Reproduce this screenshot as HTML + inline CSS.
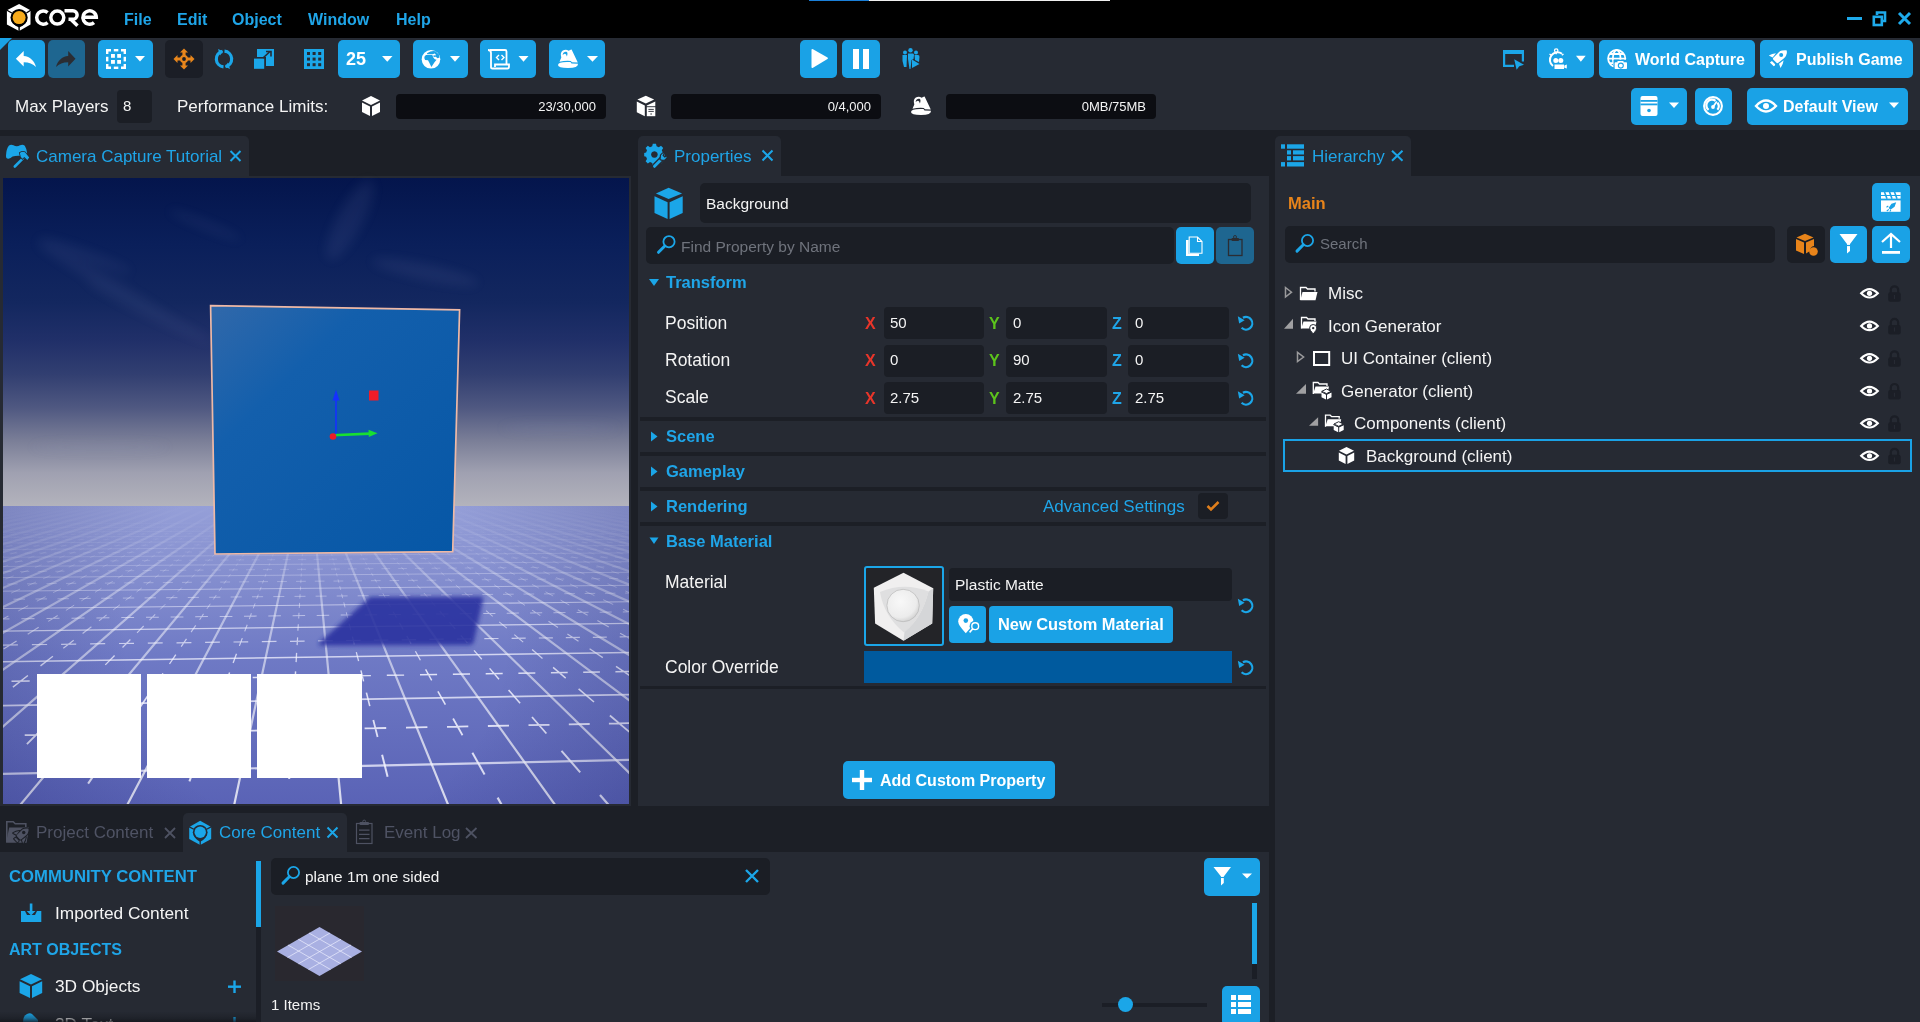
<!DOCTYPE html>
<html><head><meta charset="utf-8">
<style>
*{margin:0;padding:0;box-sizing:border-box}
html,body{width:1920px;height:1022px;overflow:hidden}
body{background:#1c1f26;font-family:"Liberation Sans",sans-serif;position:relative;color:#f4f4f4}
.a{position:absolute}
.t{position:absolute;white-space:nowrap;line-height:1;will-change:transform}
.b{position:absolute;background:#1aa2e6;border-radius:4px}
.in{position:absolute;background:#1b1e25;border-radius:4px}
.bl{color:#1fa5e8}
.bd{font-weight:bold}
svg{position:absolute;overflow:visible}
</style></head><body>

<!-- ============ TITLE BAR ============ -->
<div class="a" style="left:0;top:0;width:1920px;height:38px;background:#000"></div>
<div class="a" style="left:809px;top:0;width:60px;height:1px;background:#1a7fd8"></div>
<div class="a" style="left:869px;top:0;width:241px;height:1px;background:#f0f0f0"></div>

<!-- logo -->
<svg style="left:0;top:0" width="100" height="38">
  <path d="M19.1 4 L30.5 10.3 V24.6 L19.1 31 L6.9 24.6 V10.3 Z" fill="#fff"/>
  <circle cx="19.1" cy="17.6" r="8.6" fill="#000"/>
  <path d="M11.2 20.5 Q13.5 25 19.1 27.5 Q24.7 25 27 20.5 Z" fill="#000"/>
  <path d="M19.1 26 V31.5 M6.5 10 L11.8 13 M31 10 L26.4 13" stroke="#000" stroke-width="1.4"/>
  <circle cx="19.1" cy="17.6" r="6.5" fill="#f7ab1b"/>
  <g fill="none" stroke="#fff" stroke-width="3.5">
   <path d="M47.6 12.6 A6.6 6.6 0 1 0 47.6 22.6"/>
   <circle cx="57.3" cy="17.6" r="6.5"/>
   <path d="M64.5 10.7 H72.8 A4.3 4.3 0 0 1 72.8 19.3 H68.5 M70.5 19 L77.5 25.8"/>
   <path d="M82.9 17.3 H96.3 A6.7 6.7 0 1 0 94 22.6"/>
  </g>
</svg>

<div class="t bd bl" style="left:124px;top:12px;font-size:16px">File</div>
<div class="t bd bl" style="left:177px;top:12px;font-size:16px">Edit</div>
<div class="t bd bl" style="left:232px;top:12px;font-size:16px">Object</div>
<div class="t bd bl" style="left:308px;top:12px;font-size:16px">Window</div>
<div class="t bd bl" style="left:396px;top:12px;font-size:16px">Help</div>

<!-- window controls -->
<svg style="left:1840px;top:6px" width="80" height="26">
  <rect x="7" y="11" width="15" height="3" fill="#1eaaeb"/>
  <path d="M37 9 V6.5 H45 V15 H42" fill="none" stroke="#1eaaeb" stroke-width="2.6"/>
  <rect x="33.8" y="10.8" width="8" height="8.2" fill="none" stroke="#1eaaeb" stroke-width="2.6"/>
  <path d="M59 7 L70 18 M70 7 L59 18" stroke="#1eaaeb" stroke-width="3"/>
</svg>

<!-- ============ TOOLBAR ============ -->
<div class="a" style="left:0;top:38px;width:1920px;height:92px;background:#262a33"></div>
<div class="a" style="left:0;top:38px;width:0;height:0;border-top:12px solid #1aa2e6;border-right:12px solid transparent"></div>

<!-- undo / redo -->
<div class="b" style="left:8px;top:40px;width:37px;height:38px;border-radius:5px"></div>
<div class="b" style="left:48px;top:40px;width:37px;height:38px;border-radius:5px;background:#1e6690"></div>
<svg style="left:0;top:0" width="100" height="80">
  <path d="M15.9 58.8 L23.7 51 L23.7 56 C30 56.5 34.5 61 36 67 C33 64 29 62.2 23.7 62.2 L23.7 66.6 Z" fill="#fff"/>
  <path d="M75.5 58.8 L68.2 51 L68.2 56 C62 56.5 57.5 61 56 67 C59 64 63 62.2 68.2 62.2 L68.2 66.6 Z" fill="#2b2d33"/>
</svg>
<!-- select -->
<div class="b" style="left:98px;top:40px;width:55px;height:38px;border-radius:5px"></div>
<svg style="left:0;top:0" width="160" height="80" fill="#fff">
  <path d="M106 49 H111 V51.4 H108.4 V54 H106 Z M121 49 H126 V54 H123.6 V51.4 H121 Z M106 64 H108.4 V66.6 H111 V69 H106 Z M126 64 V69 H121 V66.6 H123.6 V64 Z"/>
  <rect x="113.8" y="49" width="4.5" height="2.4"/><rect x="113.8" y="66.6" width="4.5" height="2.4"/>
  <rect x="106" y="56.8" width="2.4" height="4.6"/><rect x="123.6" y="56.8" width="2.4" height="4.6"/>
  <rect x="111" y="54" width="3.9" height="3.8"/><rect x="117.2" y="54" width="3.8" height="3.8"/>
  <rect x="111" y="60" width="3.9" height="3.8"/><rect x="117.2" y="60" width="3.8" height="3.8"/>
  <path d="M135 56 H145 L140 61.5 Z"/>
</svg>
<!-- move -->
<div class="a" style="left:165px;top:40px;width:38px;height:38px;border-radius:5px;background:#1b1e26"></div>
<svg style="left:184px;top:59px" width="1" height="1">
  <path d="M0,-10.5 L4,-6.5 L1.6,-6.5 L1.6,-1.6 L6.5,-1.6 L6.5,-4 L10.5,0 L6.5,4 L6.5,1.6 L1.6,1.6 L1.6,6.5 L4,6.5 L0,10.5 L-4,6.5 L-1.6,6.5 L-1.6,1.6 L-6.5,1.6 L-6.5,4 L-10.5,0 L-6.5,-4 L-6.5,-1.6 L-1.6,-1.6 L-1.6,-6.5 L-4,-6.5 Z" fill="#e8861c"/>
  <circle r="4" fill="#e8861c"/><circle r="1.9" fill="#1b1e26"/>
</svg>
<!-- rotate -->
<svg style="left:224px;top:59px" width="1" height="1" fill="none" stroke="#1ba6e8" stroke-width="3.2">
  <path d="M-1.5,-7.6 A7.8,7.8 0 0 0 -0.5,7.8"/>
  <path d="M1.5,7.6 A7.8,7.8 0 0 0 0.5,-7.8"/>
  <path d="M-6,-10 L-1,-7.8 L-4,-3.5 Z" fill="#1ba6e8" stroke="none"/>
  <path d="M6,10 L1,7.8 L4,3.5 Z" fill="#1ba6e8" stroke="none"/>
</svg>
<!-- scale -->
<svg style="left:0;top:0" width="280" height="80">
  <rect x="257" y="49" width="17" height="17" fill="#1ba6e8"/>
  <rect x="253" y="57" width="13" height="13" fill="#262a33"/>
  <rect x="254" y="58.6" width="10.2" height="10.2" fill="#1ba6e8"/>
  <path d="M263 58 L270 51.5 M266 51.5 H271 V56.5" stroke="#262a33" stroke-width="1.6" fill="none"/>
</svg>
<!-- grid -->
<svg style="left:0;top:0" width="330" height="80">
  <rect x="304" y="49" width="20" height="20" fill="#1ba6e8"/>
  <g fill="#262a33">
  <rect x="307" y="52" width="3" height="3"/><rect x="312.6" y="52" width="3" height="3"/><rect x="318.2" y="52" width="3" height="3"/>
  <rect x="307" y="57.6" width="3" height="3"/><rect x="312.6" y="57.6" width="3" height="3"/><rect x="318.2" y="57.6" width="3" height="3"/>
  <rect x="307" y="63.2" width="3" height="3"/><rect x="312.6" y="63.2" width="3" height="3"/><rect x="318.2" y="63.2" width="3" height="3"/>
  </g>
</svg>
<!-- 25 -->
<div class="b" style="left:338px;top:40px;width:62px;height:38px;border-radius:5px"></div>
<div class="t bd" style="left:346px;top:50px;font-size:18px;color:#fff">25</div>
<!-- globe -->
<div class="b" style="left:413px;top:40px;width:55px;height:38px;border-radius:5px"></div>
<svg style="left:0;top:0" width="470" height="80">
  <circle cx="431" cy="59.3" r="9.3" fill="#fff"/>
  <path d="M424.3 58 Q424.2 55.6 426 54.9 L432.3 55 L433.3 57.6 L434.8 59.2 L436.6 59.8 L434.5 62.2 L431.4 67 L429.2 62.5 L428 60.3 L425.1 59.9 Z" fill="#1aa2e6"/>
  <path d="M427 53.2 Q431.5 50.2 435.5 51.2 L439 54.5 L439.6 57.5 L437.5 58.2 L435.8 56.8 L433.7 57 L433.3 55.6 L436.2 55.2 L434.8 53.6 L432.4 54.2 L427.2 54.3 Z" fill="#1aa2e6"/>
</svg>
<!-- script -->
<div class="b" style="left:480px;top:40px;width:56px;height:38px;border-radius:5px"></div>
<svg style="left:0;top:0" width="540" height="80" fill="none" stroke="#fff" stroke-width="1.8">
  <path d="M490 50 H505 Q506.5 50 506.5 51.5 V64"/>
  <path d="M488 50 Q491 50 491 53 V67.5 Q491 68.5 492.5 68.5 H507.5 Q509 68.5 509 66.5 V64.5 H495 V67"/>
  <path d="M499 55 L496.5 57.5 L499 60 M501.5 55 L504 57.5 L501.5 60" stroke-width="1.4"/>
</svg>
<!-- landscape -->
<div class="b" style="left:549px;top:40px;width:56px;height:38px;border-radius:5px"></div>
<svg style="left:0;top:0" width="610" height="80">
  <g transform="translate(-353 -47)" fill="#fff">
  <path d="M911 112 Q911 109 920 108.9 L923.5 109 L924.5 110.6 L931 110.8 Q931.5 115 921 115 Q911 115 911 112 Z"/>
  <path d="M912.5 108.8 L914.3 104.5 Q912.8 99.5 915.8 97.6 Q919 95.9 921.6 97.8 L923.6 96.8 L924.6 96.5 L930.8 109.5 L924.9 109.3 L923.8 107.9 Q918 107.4 912.5 108.8 Z"/>
  <path d="M915.6 102 Q916.3 98.4 919.4 98.8 Q921.3 99.5 919.9 103.6 Q919.2 100.4 917.8 100.7 Q916.6 101 915.6 102 Z" fill="#1aa2e6"/>
  </g>
</svg>
<svg style="left:0;top:0" width="610" height="80" fill="#fff">
  <path d="M382 56 H392.5 L387.25 61.8 Z"/>
  <path d="M450 56 H460 L455 61.8 Z"/>
  <path d="M518.5 56 H528.5 L523.5 61.8 Z"/>
  <path d="M587 56 H598 L592.5 61.8 Z"/>
</svg>

<!-- play / pause -->
<div class="b" style="left:800px;top:40px;width:37px;height:38px;border-radius:5px"></div>
<div class="b" style="left:842px;top:40px;width:38px;height:38px;border-radius:5px"></div>
<svg style="left:0;top:0" width="940" height="80" fill="#fff">
  <path d="M811.5 50 Q811.5 48.5 813 49.3 L827.5 57.5 Q828.5 58.3 827.5 59 L813 67.7 Q811.5 68.5 811.5 67 Z"/>
  <rect x="853" y="49" width="6" height="20"/><rect x="863" y="49" width="6" height="20"/>
</svg>
<!-- multiplayer -->
<svg style="left:0;top:0" width="940" height="80" fill="#1ba6e8">
  <circle cx="905" cy="52.5" r="2"/><circle cx="910.5" cy="50.3" r="2.2"/><circle cx="916" cy="52.5" r="2"/>
  <path d="M902.5 55 H907 L906.5 67 H904 L902.5 61 Z"/>
  <path d="M908 53.5 H913 Q914 53.5 914 55 L913.5 59 L911.5 60 L910.5 69 H909.5 L908 59 Z"/>
  <path d="M914.5 55 H918 Q919.5 55 919.5 57 L919 62 L915 60 Z"/>
  <path d="M912 59.5 L919.5 64 L912 68 Z"/>
</svg>

<!-- right side -->
<svg style="left:0;top:0" width="1530" height="80" fill="none" stroke="#1ba6e8" stroke-width="2">
  <path d="M1503 50 H1524 V54 H1503 Z M1503 50 H1505.2 V67 H1503 Z M1503 64.8 H1514 V67 H1503 Z M1521.8 50 H1524 V61.5 H1521.8 Z" fill="#1ba6e8" stroke="none"/>
  <path d="M1514.2 59.2 L1524 64.8 L1519.3 66.2 L1516.6 69.8 Z" fill="#1ba6e8" stroke="none"/>
</svg>
<div class="b" style="left:1537px;top:40px;width:57px;height:38px;border-radius:5px"></div>
<svg style="left:0;top:0" width="1600" height="80" fill="#fff">
  <circle cx="1556.2" cy="50.6" r="1.7" fill="none" stroke="#fff" stroke-width="1.3"/>
  <path d="M1556.2 52.2 V54.2" stroke="#fff" stroke-width="1.3"/>
  <path d="M1553 66 A7.2 7.2 0 0 1 1562 53.8" fill="none" stroke="#fff" stroke-width="2"/>
  <circle cx="1555.8" cy="60.6" r="2.5"/><circle cx="1560.8" cy="60.6" r="2.5"/>
  <rect x="1554.5" y="64.5" width="9.5" height="4.5"/><path d="M1564.3 65.5 L1566.8 64.6 V68.6 L1564.3 67.8 Z"/>
  <path d="M1549.5 54 L1551.3 55.3 M1563.5 54 L1561.8 55.3" stroke="#fff" stroke-width="1.3"/>
  <path d="M1576 55.7 H1585.7 L1580.85 61.7 Z"/>
</svg>
<div class="b" style="left:1599px;top:40px;width:156px;height:38px;border-radius:5px"></div>
<svg style="left:0;top:0" width="1640" height="80">
  <g fill="none" stroke="#fff" stroke-width="1.8">
   <circle cx="1616.7" cy="58.6" r="8.6"/>
   <ellipse cx="1616.7" cy="58.6" rx="3.8" ry="8.6"/>
   <path d="M1608 58.6 H1625.5 M1609.5 54 H1624 M1609.5 63.2 H1624"/>
  </g>
  <rect x="1613.5" y="59.8" width="14.5" height="10" fill="#1aa2e6"/>
  <rect x="1614.6" y="62.2" width="12.4" height="6.8" rx="0.8" fill="#fff"/>
  <rect x="1617.5" y="61" width="6" height="2" fill="#fff"/>
  <circle cx="1620.8" cy="65.6" r="2.5" fill="none" stroke="#1aa2e6" stroke-width="1.1"/>
</svg>
<div class="t bd" style="left:1635px;top:52px;font-size:16px;color:#fff">World Capture</div>
<div class="b" style="left:1760px;top:40px;width:153px;height:38px;border-radius:5px"></div>
<svg style="left:0;top:0" width="1800" height="80" fill="#fff">
  <path d="M1786.8 50.4 Q1787.3 52 1786.1 55.4 Q1785.4 57 1784 58.2 L1778.4 62.8 Q1777.3 63.6 1776.2 62.5 L1773.2 59.5 Q1772.5 58.6 1773.3 57.7 L1778.8 52.2 Q1780 51 1782 50.6 Q1785.5 49.9 1786.8 50.4 Z"/>
  <circle cx="1781.2" cy="55" r="2" fill="#1aa2e6"/>
  <path d="M1768.8 55.6 Q1772 53.6 1776 53.2 L1772.6 57.6 Z"/>
  <path d="M1779 63.8 L1783.6 60.3 Q1783.2 64.6 1780.5 68 Z"/>
  <path d="M1769.9 62.4 L1771.9 61 L1775.2 64.3 Q1775.4 65.9 1773.7 66.3 Z"/>
</svg>
<div class="t bd" style="left:1796px;top:52px;font-size:16px;color:#fff">Publish Game</div>

<!-- row 2 -->
<div class="t" style="left:15px;top:98px;font-size:17px">Max Players</div>
<div class="in" style="left:117px;top:90px;width:35px;height:33px"></div>
<div class="t" style="left:123px;top:98px;font-size:15px">8</div>
<div class="t" style="left:177px;top:98px;font-size:17px">Performance Limits:</div>

<div class="a" style="left:396px;top:94px;width:210px;height:25px;background:#0c0d12;border-radius:4px"></div>
<div class="t" style="left:396px;width:200px;text-align:right;top:100px;font-size:13px">23/30,000</div>
<div class="a" style="left:671px;top:94px;width:210px;height:25px;background:#0c0d12;border-radius:4px"></div>
<div class="t" style="left:671px;width:200px;text-align:right;top:100px;font-size:13px">0/4,000</div>
<div class="a" style="left:946px;top:94px;width:210px;height:25px;background:#0c0d12;border-radius:4px"></div>
<div class="t" style="left:946px;width:200px;text-align:right;top:100px;font-size:13px">0MB/75MB</div>

<svg style="left:0;top:0" width="960" height="130" fill="#fff">
  <path d="M371 96 L380 100.5 L371 105 L362 100.5 Z"/>
  <path d="M362 102.5 L370 106.5 V116 L362 112 Z M380 102.5 L372 106.5 V116 L380 112 Z"/>
  <path d="M645.8 95.8 L654.2 99.6 L645.8 103.6 L637.4 99.6 Z"/>
  <path d="M636.8 101.5 L644.8 105.4 V116.2 L636.8 112.3 Z M646.8 105.4 L655.3 101.5 V106.2 H646.8 Z"/>
  <rect x="646.8" y="107.2" width="8.5" height="9"/>
  <rect x="648.4" y="108.9" width="5.4" height="0.9" fill="#262a33"/><rect x="648.4" y="110.9" width="5.4" height="0.9" fill="#262a33"/>
  <circle cx="651.1" cy="114" r="0.7" fill="#262a33"/>
  <g id="land">
  <path d="M911 112 Q911 109 920 108.9 L923.5 109 L924.5 110.6 L931 110.8 Q931.5 115 921 115 Q911 115 911 112 Z"/>
  <path d="M912.5 108.8 L914.3 104.5 Q912.8 99.5 915.8 97.6 Q919 95.9 921.6 97.8 L923.6 96.8 L924.6 96.5 L930.8 109.5 L924.9 109.3 L923.8 107.9 Q918 107.4 912.5 108.8 Z"/>
  <path d="M915.6 102 Q916.3 98.4 919.4 98.8 Q921.3 99.5 919.9 103.6 Q919.2 100.4 917.8 100.7 Q916.6 101 915.6 102 Z" fill="#262a33"/>
  </g>
</svg>

<div class="b" style="left:1631px;top:88px;width:56px;height:37px;border-radius:5px"></div>
<svg style="left:0;top:0" width="1700" height="130" fill="#fff">
  <rect x="1640.5" y="96" width="17" height="20" rx="2"/>
  <rect x="1640.5" y="100" width="17" height="1.8" fill="#1aa2e6"/>
  <rect x="1640.5" y="103.5" width="17" height="1.8" fill="#1aa2e6"/>
  <circle cx="1649" cy="110.5" r="1.8" fill="#1aa2e6"/>
  <path d="M1669 102.5 H1679 L1674 108 Z"/>
</svg>
<div class="b" style="left:1695px;top:88px;width:37px;height:37px;border-radius:5px"></div>
<svg style="left:0;top:0" width="1740" height="130" fill="none" stroke="#fff">
  <circle cx="1713" cy="106" r="8.9" stroke-width="2.1"/>
  <path d="M1708.6 109.8 A5.6 5.6 0 0 1 1715.5 100.8" stroke-width="2.2"/>
  <path d="M1717.5 102.8 A5.6 5.6 0 0 1 1717.4 109.8" stroke-width="2.2"/>
  <path d="M1713 107 L1716.8 101.6" stroke-width="1.8"/>
  <circle cx="1713" cy="107" r="1.9" fill="#fff" stroke="none"/>
</svg>
<div class="b" style="left:1747px;top:88px;width:161px;height:37px;border-radius:5px"></div>
<svg style="left:0;top:0" width="1910" height="130" fill="#fff">
  <path d="M1756 106 Q1766 95 1776 106 Q1766 117 1756 106 Z" fill="none" stroke="#fff" stroke-width="2.4"/>
  <circle cx="1766" cy="106" r="3"/>
  <path d="M1889 102.5 H1899 L1894 108 Z"/>
</svg>
<div class="t bd" style="left:1783px;top:99px;font-size:16px;color:#fff">Default View</div>


<!-- ============ PANELS ============ -->
<!-- left viewport panel -->
<div class="a" style="left:0;top:136px;width:249px;height:42px;background:#262a33;border-radius:0 5px 0 0"></div>
<div class="a" style="left:0;top:176px;width:631px;height:630px;background:#262a33"></div>
<div class="t bl" style="left:36px;top:148px;font-size:17px">Camera Capture Tutorial</div>
<!--VP--><svg style="left:3px;top:178px" width="626" height="626" viewBox="3 178 626 626">
<defs>
<linearGradient id="sky" x1="0" y1="178" x2="0" y2="506" gradientUnits="userSpaceOnUse">
<stop offset="0" stop-color="#04154c"/>
<stop offset="0.2" stop-color="#0a1f5a"/>
<stop offset="0.38" stop-color="#13275f"/>
<stop offset="0.5" stop-color="#213069"/>
<stop offset="0.6" stop-color="#323f71"/>
<stop offset="0.7" stop-color="#4f5881"/>
<stop offset="0.8" stop-color="#7a7e97"/>
<stop offset="0.9" stop-color="#a0a1b1"/>
<stop offset="1" stop-color="#b3b3bc"/>
</linearGradient>
<linearGradient id="gnd" x1="0" y1="506" x2="0" y2="804" gradientUnits="userSpaceOnUse">
<stop offset="0" stop-color="#959fd8"/>
<stop offset="0.2" stop-color="#8791d0"/>
<stop offset="0.5" stop-color="#6f7ac5"/>
<stop offset="1" stop-color="#5a63b6"/>
</linearGradient>
<linearGradient id="vfade" x1="0" y1="506" x2="0" y2="804" gradientUnits="userSpaceOnUse">
<stop offset="0" stop-color="#fff" stop-opacity="0"/>
<stop offset="0.12" stop-color="#fff" stop-opacity="0.12"/>
<stop offset="0.35" stop-color="#fff" stop-opacity="0.45"/>
<stop offset="1" stop-color="#fff" stop-opacity="0.78"/>
</linearGradient>
<linearGradient id="boxg" x1="215" y1="306" x2="455" y2="552" gradientUnits="userSpaceOnUse">
<stop offset="0" stop-color="#3068aa"/>
<stop offset="0.3" stop-color="#135fac"/>
<stop offset="1" stop-color="#0657a6"/>
</linearGradient>
<filter id="blur2"><feGaussianBlur stdDeviation="2"/></filter>
<filter id="blur6"><feGaussianBlur stdDeviation="8"/></filter>
<filter id="blur3" x="-50%" y="-50%" width="200%" height="200%"><feGaussianBlur stdDeviation="6"/></filter>
<radialGradient id="vig" cx="316" cy="640" r="420" gradientUnits="userSpaceOnUse">
<stop offset="0.45" stop-color="#14185a" stop-opacity="0"/>
<stop offset="1" stop-color="#14185a" stop-opacity="0.28"/>
</radialGradient>
<clipPath id="gclip"><rect x="3" y="506" width="626" height="298"/></clipPath>
</defs>
<rect x="3" y="178" width="626" height="330" fill="url(#sky)"/>
<g filter="url(#blur3)" fill="#a0a8d4" opacity="0.09">
<ellipse cx="110" cy="285" rx="85" ry="6" transform="rotate(30 110 285)"/>
<ellipse cx="150" cy="312" rx="70" ry="5" transform="rotate(26 150 312)"/>
<ellipse cx="85" cy="255" rx="50" ry="5" transform="rotate(20 85 255)"/>
<ellipse cx="205" cy="225" rx="40" ry="4" transform="rotate(22 205 225)"/>
<ellipse cx="350" cy="220" rx="45" ry="13" transform="rotate(-62 350 220)"/>
<ellipse cx="425" cy="272" rx="55" ry="8" transform="rotate(12 425 272)"/>
<ellipse cx="100" cy="447" rx="70" ry="4"/>
<ellipse cx="560" cy="428" rx="60" ry="4"/>
</g>
<rect x="3" y="506" width="626" height="298" fill="url(#gnd)"/>
<g clip-path="url(#gclip)" stroke="#ffffff" fill="none">
<path d="M-4591.3 830.0L-301.1 506.0 M-4476.5 830.0L-286.8 506.0 M-4361.7 830.0L-272.6 506.0 M-4247.0 830.0L-258.3 506.0 M-4132.2 830.0L-244.0 506.0 M-4017.5 830.0L-229.8 506.0 M-3902.7 830.0L-215.5 506.0 M-3787.9 830.0L-201.2 506.0 M-3673.2 830.0L-187.0 506.0 M-3558.4 830.0L-172.7 506.0 M-3443.6 830.0L-158.4 506.0 M-3328.9 830.0L-144.2 506.0 M-3214.1 830.0L-129.9 506.0 M-3099.3 830.0L-115.6 506.0 M-2984.6 830.0L-101.3 506.0 M-2869.8 830.0L-87.1 506.0 M-2755.0 830.0L-72.8 506.0 M-2640.3 830.0L-58.5 506.0 M-2525.5 830.0L-44.3 506.0 M-2410.7 830.0L-30.0 506.0 M-2296.0 830.0L-15.7 506.0 M-2181.2 830.0L-1.5 506.0 M-2066.5 830.0L12.8 506.0 M-1951.7 830.0L27.1 506.0 M-1836.9 830.0L41.3 506.0 M-1722.2 830.0L55.6 506.0 M-1607.4 830.0L69.9 506.0 M-1492.6 830.0L84.1 506.0 M-1377.9 830.0L98.4 506.0 M-1263.1 830.0L112.7 506.0 M-1148.3 830.0L126.9 506.0 M-1033.6 830.0L141.2 506.0 M-918.8 830.0L155.5 506.0 M-804.0 830.0L169.7 506.0 M-689.3 830.0L184.0 506.0 M-574.5 830.0L198.3 506.0 M-459.8 830.0L212.6 506.0 M-345.0 830.0L226.8 506.0 M-230.2 830.0L241.1 506.0 M-115.5 830.0L255.4 506.0 M-0.7 830.0L269.6 506.0 M114.1 830.0L283.9 506.0 M228.8 830.0L298.2 506.0 M343.6 830.0L312.4 506.0 M458.4 830.0L326.7 506.0 M573.1 830.0L341.0 506.0 M687.9 830.0L355.2 506.0 M802.7 830.0L369.5 506.0 M917.4 830.0L383.8 506.0 M1032.2 830.0L398.0 506.0 M1147.0 830.0L412.3 506.0 M1261.7 830.0L426.6 506.0 M1376.5 830.0L440.8 506.0 M1491.2 830.0L455.1 506.0 M1606.0 830.0L469.4 506.0 M1720.8 830.0L483.6 506.0 M1835.5 830.0L497.9 506.0 M1950.3 830.0L512.2 506.0 M2065.1 830.0L526.4 506.0 M2179.8 830.0L540.7 506.0 M2294.6 830.0L555.0 506.0 M2409.4 830.0L569.3 506.0 M2524.1 830.0L583.5 506.0 M2638.9 830.0L597.8 506.0 M2753.7 830.0L612.1 506.0 M2868.4 830.0L626.3 506.0 M2983.2 830.0L640.6 506.0 M3098.0 830.0L654.9 506.0 M3212.7 830.0L669.1 506.0 M3327.5 830.0L683.4 506.0 M3442.2 830.0L697.7 506.0 M3557.0 830.0L711.9 506.0 M3671.8 830.0L726.2 506.0 M3786.5 830.0L740.5 506.0 M3901.3 830.0L754.7 506.0 M4016.1 830.0L769.0 506.0 M4130.8 830.0L783.3 506.0 M4245.6 830.0L797.5 506.0 M4360.4 830.0L811.8 506.0 M4475.1 830.0L826.1 506.0 M4589.9 830.0L840.3 506.0 M4704.7 830.0L854.6 506.0 M4819.4 830.0L868.9 506.0 M4934.2 830.0L883.1 506.0 M5048.9 830.0L897.4 506.0" stroke="url(#vfade)" stroke-width="2.2"/>
<g stroke="#f4f4ff"><path d="M0 774.0L640 759.6" stroke-width="2.20" stroke-opacity="0.75"/><path d="M0 705.6L640 694.4" stroke-width="1.75" stroke-opacity="0.75"/><path d="M0 661.7L640 652.4" stroke-width="1.44" stroke-opacity="0.75"/><path d="M0 631.1L640 623.2" stroke-width="1.22" stroke-opacity="0.68"/><path d="M0 608.5L640 601.7" stroke-width="1.06" stroke-opacity="0.55"/><path d="M0 591.2L640 585.2" stroke-width="0.94" stroke-opacity="0.45"/><path d="M0 577.6L640 572.2" stroke-width="0.84" stroke-opacity="0.37"/><path d="M0 566.5L640 561.6" stroke-width="0.76" stroke-opacity="0.30"/><path d="M0 557.3L640 552.8" stroke-width="0.69" stroke-opacity="0.25"/><path d="M0 549.5L640 545.4" stroke-width="0.64" stroke-opacity="0.20"/><path d="M0 543.0L640 539.2" stroke-width="0.60" stroke-opacity="0.16"/><path d="M0 537.3L640 533.7" stroke-width="0.60" stroke-opacity="0.13"/><path d="M0 532.3L640 529.0" stroke-width="0.60" stroke-opacity="0.10"/><path d="M0 528.0L640 524.8" stroke-width="0.60" stroke-opacity="0.08"/><path d="M0 524.1L640 521.2" stroke-width="0.60" stroke-opacity="0.05"/><path d="M0 520.6L640 517.9" stroke-width="0.60" stroke-opacity="0.03"/><path d="M0 517.5L640 514.9" stroke-width="0.60" stroke-opacity="0.01"/><path d="M0 514.8L640 512.2" stroke-width="0.60" stroke-opacity="0.00"/><path d="M0 512.2L640 509.8" stroke-width="0.60" stroke-opacity="0.00"/><path d="M0 509.9L640 507.6" stroke-width="0.60" stroke-opacity="0.00"/><path d="M0 507.8L640 505.6" stroke-width="0.60" stroke-opacity="0.00"/></g>
<g stroke="#f4f4ff"><path d="M491.4 812.0L519.4 811.2M514.0 826.8L497.6 797.6" stroke-width="2.20" stroke-opacity="0.85"/><path d="M545.1 810.6L572.8 809.8" stroke-width="2.20" stroke-opacity="0.85"/><path d="M598.3 809.2L625.8 808.5M625.1 823.8L600.0 795.0" stroke-width="2.20" stroke-opacity="0.85"/><path d="M88.1 783.7L103.7 760.8" stroke-width="2.08" stroke-opacity="0.85"/><path d="M189.4 781.4L197.8 758.7" stroke-width="2.06" stroke-opacity="0.85"/><path d="M289.2 779.0L290.5 756.7" stroke-width="2.05" stroke-opacity="0.85"/><path d="M387.6 776.7L382.1 754.7" stroke-width="2.04" stroke-opacity="0.85"/><path d="M484.6 774.5L472.4 752.8" stroke-width="2.02" stroke-opacity="0.85"/><path d="M580.2 772.3L561.5 750.8" stroke-width="2.01" stroke-opacity="0.85"/><path d="M24.7 735.1L47.3 734.7M26.9 744.1L44.6 726.3" stroke-width="1.83" stroke-opacity="0.85"/><path d="M68.1 734.3L90.6 733.8" stroke-width="1.83" stroke-opacity="0.85"/><path d="M111.3 733.4L133.6 733.0M116.3 742.3L128.2 724.7" stroke-width="1.82" stroke-opacity="0.85"/><path d="M154.2 732.6L176.3 732.1" stroke-width="1.82" stroke-opacity="0.85"/><path d="M196.8 731.7L218.8 731.3M204.5 740.5L210.9 723.1" stroke-width="1.81" stroke-opacity="0.85"/><path d="M239.1 730.9L261.0 730.5" stroke-width="1.80" stroke-opacity="0.85"/><path d="M281.2 730.1L303.0 729.6M291.6 738.7L292.6 721.5" stroke-width="1.80" stroke-opacity="0.85"/><path d="M323.0 729.2L344.7 728.8" stroke-width="1.79" stroke-opacity="0.85"/><path d="M364.6 728.4L386.2 728.0M377.6 737.0L373.3 720.0" stroke-width="1.79" stroke-opacity="0.85"/><path d="M406.0 727.6L427.4 727.2" stroke-width="1.78" stroke-opacity="0.85"/><path d="M447.0 726.8L468.3 726.4M462.5 735.2L453.1 718.5" stroke-width="1.78" stroke-opacity="0.85"/><path d="M487.9 726.0L509.0 725.6" stroke-width="1.77" stroke-opacity="0.85"/><path d="M528.5 725.2L549.5 724.8M546.4 733.5L532.0 717.0" stroke-width="1.77" stroke-opacity="0.85"/><path d="M568.8 724.4L589.7 724.0" stroke-width="1.76" stroke-opacity="0.85"/><path d="M608.9 723.6L629.7 723.2M629.3 731.8L609.9 715.5" stroke-width="1.76" stroke-opacity="0.85"/><path d="M59.0 711.7L72.9 697.6" stroke-width="1.63" stroke-opacity="0.85"/><path d="M138.0 710.2L147.5 696.3" stroke-width="1.62" stroke-opacity="0.85"/><path d="M216.2 708.8L221.3 695.0" stroke-width="1.61" stroke-opacity="0.85"/><path d="M293.4 707.4L294.2 693.8" stroke-width="1.60" stroke-opacity="0.85"/><path d="M369.8 706.1L366.4 692.6" stroke-width="1.59" stroke-opacity="0.85"/><path d="M445.4 704.7L437.9 691.3" stroke-width="1.59" stroke-opacity="0.85"/><path d="M520.1 703.3L508.6 690.1" stroke-width="1.58" stroke-opacity="0.85"/><path d="M594.0 702.0L578.6 688.9" stroke-width="1.57" stroke-opacity="0.85"/><path d="M11.5 681.3L29.7 681.0M12.9 687.1L27.9 675.5" stroke-width="1.47" stroke-opacity="0.85"/><path d="M46.5 680.7L64.6 680.4" stroke-width="1.47" stroke-opacity="0.85"/><path d="M81.3 680.2L99.3 679.9M84.5 685.9L95.8 674.5" stroke-width="1.47" stroke-opacity="0.85"/><path d="M115.9 679.6L133.8 679.3" stroke-width="1.46" stroke-opacity="0.85"/><path d="M150.4 679.1L168.2 678.8M155.4 684.7L163.0 673.4" stroke-width="1.46" stroke-opacity="0.85"/><path d="M184.6 678.5L202.4 678.3" stroke-width="1.46" stroke-opacity="0.85"/><path d="M218.8 678.0L236.4 677.7M225.5 683.6L229.6 672.4" stroke-width="1.45" stroke-opacity="0.85"/><path d="M252.7 677.5L270.3 677.2" stroke-width="1.45" stroke-opacity="0.85"/><path d="M286.5 676.9L304.0 676.7M294.9 682.5L295.6 671.4" stroke-width="1.45" stroke-opacity="0.85"/><path d="M320.1 676.4L337.5 676.1" stroke-width="1.44" stroke-opacity="0.85"/><path d="M353.5 675.9L370.9 675.6M363.6 681.4L360.9 670.4" stroke-width="1.44" stroke-opacity="0.85"/><path d="M386.8 675.3L404.1 675.1" stroke-width="1.43" stroke-opacity="0.85"/><path d="M420.0 674.8L437.1 674.5M431.7 680.3L425.6 669.4" stroke-width="1.43" stroke-opacity="0.85"/><path d="M452.9 674.3L470.0 674.0" stroke-width="1.43" stroke-opacity="0.85"/><path d="M485.7 673.8L502.7 673.5M499.0 679.2L489.6 668.4" stroke-width="1.42" stroke-opacity="0.85"/><path d="M518.4 673.3L535.3 673.0" stroke-width="1.42" stroke-opacity="0.85"/><path d="M550.9 672.7L567.7 672.5M565.7 678.1L553.1 667.4" stroke-width="1.42" stroke-opacity="0.85"/><path d="M583.2 672.2L599.9 672.0" stroke-width="1.41" stroke-opacity="0.85"/><path d="M615.4 671.7L632.0 671.5M631.8 677.0L616.0 666.4" stroke-width="1.41" stroke-opacity="0.84"/><path d="M40.5 665.9L52.9 656.3" stroke-width="1.34" stroke-opacity="0.78"/><path d="M105.3 664.9L114.6 655.5" stroke-width="1.33" stroke-opacity="0.78"/><path d="M169.5 664.0L175.8 654.6" stroke-width="1.33" stroke-opacity="0.77"/><path d="M233.1 663.0L236.5 653.7" stroke-width="1.32" stroke-opacity="0.77"/><path d="M296.1 662.1L296.6 652.9" stroke-width="1.32" stroke-opacity="0.76"/><path d="M358.6 661.2L356.3 652.1" stroke-width="1.31" stroke-opacity="0.76"/><path d="M420.4 660.3L415.4 651.2" stroke-width="1.30" stroke-opacity="0.75"/><path d="M481.8 659.3L474.0 650.4" stroke-width="1.30" stroke-opacity="0.75"/><path d="M542.5 658.5L532.1 649.6" stroke-width="1.29" stroke-opacity="0.74"/><path d="M602.8 657.6L589.6 648.8" stroke-width="1.29" stroke-opacity="0.74"/><path d="M2.6 645.1L17.9 644.9M3.6 649.1L16.6 641.0" stroke-width="1.23" stroke-opacity="0.69"/><path d="M31.9 644.7L47.1 644.5" stroke-width="1.23" stroke-opacity="0.69"/><path d="M61.1 644.3L76.2 644.1M63.3 648.3L73.7 640.3" stroke-width="1.23" stroke-opacity="0.69"/><path d="M90.1 643.9L105.2 643.7" stroke-width="1.23" stroke-opacity="0.69"/><path d="M119.0 643.5L134.0 643.3M122.5 647.5L130.4 639.5" stroke-width="1.22" stroke-opacity="0.69"/><path d="M147.8 643.1L162.7 642.9" stroke-width="1.22" stroke-opacity="0.68"/><path d="M176.5 642.8L191.4 642.6M181.2 646.7L186.5 638.8" stroke-width="1.22" stroke-opacity="0.68"/><path d="M205.1 642.4L219.9 642.2" stroke-width="1.22" stroke-opacity="0.68"/><path d="M233.5 642.0L248.2 641.8M239.4 645.9L242.3 638.1" stroke-width="1.21" stroke-opacity="0.68"/><path d="M261.8 641.6L276.5 641.4" stroke-width="1.21" stroke-opacity="0.68"/><path d="M290.0 641.3L304.6 641.1M297.1 645.1L297.6 637.4" stroke-width="1.21" stroke-opacity="0.67"/><path d="M318.1 640.9L332.7 640.7" stroke-width="1.21" stroke-opacity="0.67"/><path d="M346.1 640.5L360.6 640.3M354.3 644.3L352.4 636.7" stroke-width="1.20" stroke-opacity="0.67"/><path d="M373.9 640.2L388.4 640.0" stroke-width="1.20" stroke-opacity="0.67"/><path d="M401.7 639.8L416.1 639.6M411.1 643.6L406.8 636.0" stroke-width="1.20" stroke-opacity="0.66"/><path d="M429.3 639.4L443.7 639.2" stroke-width="1.20" stroke-opacity="0.66"/><path d="M456.9 639.1L471.1 638.9M467.4 642.8L460.8 635.3" stroke-width="1.19" stroke-opacity="0.66"/><path d="M484.3 638.7L498.5 638.5" stroke-width="1.19" stroke-opacity="0.66"/><path d="M511.6 638.3L525.7 638.1M523.2 642.1L514.3 634.6" stroke-width="1.19" stroke-opacity="0.66"/><path d="M538.8 638.0L552.9 637.8" stroke-width="1.19" stroke-opacity="0.65"/><path d="M565.8 637.6L579.9 637.4M578.5 641.3L567.4 633.9" stroke-width="1.18" stroke-opacity="0.65"/><path d="M592.8 637.3L606.8 637.1" stroke-width="1.18" stroke-opacity="0.65"/><path d="M619.7 636.9L633.6 636.7M633.4 640.6L620.1 633.2" stroke-width="1.18" stroke-opacity="0.65"/><path d="M27.7 634.2L38.7 627.3" stroke-width="1.14" stroke-opacity="0.61"/><path d="M82.6 633.5L91.4 626.7" stroke-width="1.13" stroke-opacity="0.61"/><path d="M137.0 632.8L143.7 626.0" stroke-width="1.13" stroke-opacity="0.61"/><path d="M191.1 632.1L195.7 625.4" stroke-width="1.12" stroke-opacity="0.60"/><path d="M244.7 631.4L247.2 624.8" stroke-width="1.12" stroke-opacity="0.60"/><path d="M297.9 630.8L298.3 624.2" stroke-width="1.12" stroke-opacity="0.60"/><path d="M350.8 630.1L349.1 623.6" stroke-width="1.11" stroke-opacity="0.59"/><path d="M403.2 629.5L399.5 623.0" stroke-width="1.11" stroke-opacity="0.59"/><path d="M455.2 628.8L449.5 622.4" stroke-width="1.10" stroke-opacity="0.59"/><path d="M506.8 628.2L499.2 621.8" stroke-width="1.10" stroke-opacity="0.58"/><path d="M558.0 627.5L548.5 621.2" stroke-width="1.10" stroke-opacity="0.58"/><path d="M608.8 626.9L597.4 620.6" stroke-width="1.09" stroke-opacity="0.58"/><path d="M-3.8 619.0L9.4 618.9M-3.0 622.0L8.4 616.0" stroke-width="1.06" stroke-opacity="0.55"/><path d="M21.4 618.8L34.5 618.6" stroke-width="1.06" stroke-opacity="0.55"/><path d="M46.5 618.5L59.5 618.3M48.2 621.4L57.7 615.5" stroke-width="1.06" stroke-opacity="0.55"/><path d="M71.5 618.2L84.5 618.0" stroke-width="1.05" stroke-opacity="0.55"/><path d="M96.4 617.9L109.4 617.8M99.0 620.8L106.6 614.9" stroke-width="1.05" stroke-opacity="0.54"/><path d="M121.3 617.6L134.1 617.5" stroke-width="1.05" stroke-opacity="0.54"/><path d="M146.0 617.3L158.8 617.2M149.5 620.2L155.2 614.4" stroke-width="1.05" stroke-opacity="0.54"/><path d="M170.6 617.1L183.4 616.9" stroke-width="1.05" stroke-opacity="0.54"/><path d="M195.2 616.8L207.9 616.6M199.6 619.7L203.5 613.9" stroke-width="1.04" stroke-opacity="0.54"/><path d="M219.7 616.5L232.4 616.4" stroke-width="1.04" stroke-opacity="0.54"/><path d="M244.0 616.2L256.7 616.1M249.3 619.1L251.4 613.3" stroke-width="1.04" stroke-opacity="0.53"/><path d="M268.3 615.9L280.9 615.8" stroke-width="1.04" stroke-opacity="0.53"/><path d="M292.6 615.7L305.1 615.5M298.7 618.5L299.0 612.8" stroke-width="1.04" stroke-opacity="0.53"/><path d="M316.7 615.4L329.2 615.3" stroke-width="1.04" stroke-opacity="0.53"/><path d="M340.7 615.1L353.2 615.0M347.7 617.9L346.3 612.3" stroke-width="1.03" stroke-opacity="0.53"/><path d="M364.7 614.9L377.1 614.7" stroke-width="1.03" stroke-opacity="0.53"/><path d="M388.6 614.6L400.9 614.4M396.4 617.4L393.2 611.7" stroke-width="1.03" stroke-opacity="0.53"/><path d="M412.4 614.3L424.7 614.2" stroke-width="1.03" stroke-opacity="0.52"/><path d="M436.1 614.0L448.4 613.9M444.7 616.8L439.8 611.2" stroke-width="1.03" stroke-opacity="0.52"/><path d="M459.7 613.8L471.9 613.6" stroke-width="1.02" stroke-opacity="0.52"/><path d="M483.2 613.5L495.4 613.4M492.7 616.3L486.1 610.7" stroke-width="1.02" stroke-opacity="0.52"/><path d="M506.7 613.2L518.9 613.1" stroke-width="1.02" stroke-opacity="0.52"/><path d="M530.1 613.0L542.2 612.8M540.3 615.7L532.1 610.2" stroke-width="1.02" stroke-opacity="0.52"/><path d="M553.4 612.7L565.5 612.6" stroke-width="1.02" stroke-opacity="0.51"/><path d="M576.6 612.4L588.6 612.3M587.6 615.2L577.8 609.7" stroke-width="1.02" stroke-opacity="0.51"/><path d="M599.7 612.2L611.7 612.0" stroke-width="1.01" stroke-opacity="0.51"/><path d="M622.8 611.9L634.7 611.8M634.6 614.6L623.1 609.2" stroke-width="1.01" stroke-opacity="0.51"/><path d="M18.3 610.9L28.2 605.7" stroke-width="0.99" stroke-opacity="0.49"/><path d="M65.9 610.4L74.2 605.2" stroke-width="0.99" stroke-opacity="0.49"/><path d="M113.2 609.9L119.9 604.8" stroke-width="0.98" stroke-opacity="0.48"/><path d="M160.2 609.4L165.2 604.3" stroke-width="0.98" stroke-opacity="0.48"/><path d="M206.9 608.9L210.3 603.8" stroke-width="0.98" stroke-opacity="0.48"/><path d="M253.2 608.4L255.1 603.4" stroke-width="0.97" stroke-opacity="0.48"/><path d="M299.3 607.9L299.6 602.9" stroke-width="0.97" stroke-opacity="0.47"/><path d="M345.0 607.4L343.8 602.4" stroke-width="0.97" stroke-opacity="0.47"/><path d="M390.5 606.9L387.7 602.0" stroke-width="0.96" stroke-opacity="0.47"/><path d="M435.6 606.4L431.4 601.5" stroke-width="0.96" stroke-opacity="0.47"/><path d="M480.5 605.9L474.7 601.1" stroke-width="0.96" stroke-opacity="0.46"/><path d="M525.0 605.4L517.8 600.6" stroke-width="0.95" stroke-opacity="0.46"/><path d="M569.3 605.0L560.6 600.2" stroke-width="0.95" stroke-opacity="0.46"/><path d="M613.2 604.5L603.2 599.7" stroke-width="0.95" stroke-opacity="0.46"/><path d="M13.5 599.2L25.0 599.1" stroke-width="0.93" stroke-opacity="0.44"/><path d="M35.5 599.0L47.0 598.9M36.8 601.2L45.6 596.7" stroke-width="0.93" stroke-opacity="0.44"/><path d="M57.5 598.8L68.9 598.7" stroke-width="0.92" stroke-opacity="0.44"/><path d="M79.4 598.6L90.7 598.4M81.4 600.8L88.6 596.3" stroke-width="0.92" stroke-opacity="0.44"/><path d="M101.2 598.3L112.5 598.2" stroke-width="0.92" stroke-opacity="0.43"/><path d="M122.9 598.1L134.2 598.0M125.6 600.3L131.5 595.9" stroke-width="0.92" stroke-opacity="0.43"/><path d="M144.6 597.9L155.9 597.8" stroke-width="0.92" stroke-opacity="0.43"/><path d="M166.2 597.7L177.4 597.6M169.6 599.9L174.0 595.4" stroke-width="0.92" stroke-opacity="0.43"/><path d="M187.8 597.5L198.9 597.4" stroke-width="0.92" stroke-opacity="0.43"/><path d="M209.2 597.3L220.4 597.2M213.3 599.5L216.3 595.0" stroke-width="0.91" stroke-opacity="0.43"/><path d="M230.6 597.0L241.7 596.9" stroke-width="0.91" stroke-opacity="0.43"/><path d="M252.0 596.8L263.1 596.7M256.7 599.0L258.3 594.6" stroke-width="0.91" stroke-opacity="0.43"/><path d="M273.3 596.6L284.3 596.5" stroke-width="0.91" stroke-opacity="0.43"/><path d="M294.5 596.4L305.5 596.3M299.8 598.6L300.1 594.2" stroke-width="0.91" stroke-opacity="0.42"/><path d="M315.6 596.2L326.6 596.1" stroke-width="0.91" stroke-opacity="0.42"/><path d="M336.7 596.0L347.6 595.9M342.7 598.2L341.6 593.8" stroke-width="0.91" stroke-opacity="0.42"/><path d="M357.7 595.8L368.6 595.7" stroke-width="0.90" stroke-opacity="0.42"/><path d="M378.7 595.6L389.5 595.5M385.3 597.7L382.9 593.4" stroke-width="0.90" stroke-opacity="0.42"/><path d="M399.5 595.4L410.4 595.3" stroke-width="0.90" stroke-opacity="0.42"/><path d="M420.4 595.2L431.2 595.1M427.7 597.3L423.9 593.0" stroke-width="0.90" stroke-opacity="0.42"/><path d="M441.1 595.0L451.9 594.8" stroke-width="0.90" stroke-opacity="0.42"/><path d="M461.8 594.7L472.6 594.6M469.8 596.9L464.7 592.6" stroke-width="0.90" stroke-opacity="0.41"/><path d="M482.4 594.5L493.1 594.4" stroke-width="0.90" stroke-opacity="0.41"/><path d="M503.0 594.3L513.7 594.2M511.6 596.4L505.2 592.2" stroke-width="0.90" stroke-opacity="0.41"/><path d="M523.5 594.1L534.2 594.0" stroke-width="0.89" stroke-opacity="0.41"/><path d="M544.0 593.9L554.6 593.8M553.1 596.0L545.5 591.8" stroke-width="0.89" stroke-opacity="0.41"/><path d="M564.3 593.7L574.9 593.6" stroke-width="0.89" stroke-opacity="0.41"/><path d="M584.7 593.5L595.2 593.4M594.4 595.6L585.6 591.4" stroke-width="0.89" stroke-opacity="0.41"/><path d="M604.9 593.3L615.4 593.2" stroke-width="0.89" stroke-opacity="0.41"/><path d="M625.1 593.1L635.6 593.0M635.5 595.2L625.4 591.0" stroke-width="0.89" stroke-opacity="0.41"/><path d="M11.1 593.1L20.1 589.1" stroke-width="0.87" stroke-opacity="0.39"/><path d="M53.1 592.7L60.9 588.7" stroke-width="0.87" stroke-opacity="0.39"/><path d="M95.0 592.3L101.4 588.3" stroke-width="0.87" stroke-opacity="0.39"/><path d="M136.5 592.0L141.7 588.0" stroke-width="0.87" stroke-opacity="0.39"/><path d="M177.8 591.6L181.8 587.6" stroke-width="0.86" stroke-opacity="0.39"/><path d="M218.9 591.2L221.6 587.2" stroke-width="0.86" stroke-opacity="0.38"/><path d="M259.7 590.8L261.2 586.9" stroke-width="0.86" stroke-opacity="0.38"/><path d="M300.3 590.4L300.6 586.5" stroke-width="0.86" stroke-opacity="0.38"/><path d="M340.7 590.0L339.7 586.1" stroke-width="0.85" stroke-opacity="0.38"/><path d="M380.8 589.6L378.6 585.8" stroke-width="0.85" stroke-opacity="0.38"/><path d="M420.7 589.2L417.3 585.4" stroke-width="0.85" stroke-opacity="0.37"/><path d="M460.3 588.9L455.8 585.1" stroke-width="0.85" stroke-opacity="0.37"/><path d="M499.7 588.5L494.1 584.7" stroke-width="0.84" stroke-opacity="0.37"/><path d="M538.9 588.1L532.1 584.4" stroke-width="0.84" stroke-opacity="0.37"/><path d="M577.9 587.8L570.0 584.0" stroke-width="0.84" stroke-opacity="0.37"/><path d="M616.6 587.4L607.6 583.7" stroke-width="0.84" stroke-opacity="0.36"/><path d="M7.4 584.0L17.6 583.9" stroke-width="0.83" stroke-opacity="0.36"/><path d="M27.0 583.8L37.2 583.7M28.0 585.6L36.0 582.0" stroke-width="0.82" stroke-opacity="0.35"/><path d="M46.5 583.6L56.7 583.5" stroke-width="0.82" stroke-opacity="0.35"/><path d="M66.0 583.4L76.2 583.3M67.6 585.2L74.5 581.6" stroke-width="0.82" stroke-opacity="0.35"/><path d="M85.5 583.3L95.6 583.2" stroke-width="0.82" stroke-opacity="0.35"/><path d="M104.9 583.1L115.0 583.0M107.0 584.9L112.8 581.3" stroke-width="0.82" stroke-opacity="0.35"/><path d="M124.2 582.9L134.3 582.8" stroke-width="0.82" stroke-opacity="0.35"/><path d="M143.5 582.7L153.5 582.7M146.2 584.5L150.8 581.0" stroke-width="0.82" stroke-opacity="0.35"/><path d="M162.8 582.6L172.8 582.5" stroke-width="0.82" stroke-opacity="0.35"/><path d="M182.0 582.4L191.9 582.3M185.2 584.2L188.7 580.6" stroke-width="0.82" stroke-opacity="0.35"/><path d="M201.1 582.2L211.0 582.1" stroke-width="0.81" stroke-opacity="0.35"/><path d="M220.2 582.1L230.1 582.0M223.9 583.8L226.3 580.3" stroke-width="0.81" stroke-opacity="0.34"/><path d="M239.2 581.9L249.1 581.8" stroke-width="0.81" stroke-opacity="0.34"/><path d="M258.2 581.7L268.0 581.6M262.4 583.5L263.7 580.0" stroke-width="0.81" stroke-opacity="0.34"/><path d="M277.1 581.6L286.9 581.5" stroke-width="0.81" stroke-opacity="0.34"/><path d="M296.0 581.4L305.8 581.3M300.8 583.1L301.0 579.6" stroke-width="0.81" stroke-opacity="0.34"/><path d="M314.8 581.2L324.5 581.1" stroke-width="0.81" stroke-opacity="0.34"/><path d="M333.5 581.1L343.3 581.0M338.9 582.8L338.0 579.3" stroke-width="0.81" stroke-opacity="0.34"/><path d="M352.3 580.9L362.0 580.8" stroke-width="0.81" stroke-opacity="0.34"/><path d="M370.9 580.7L380.6 580.6M376.7 582.4L374.8 579.0" stroke-width="0.80" stroke-opacity="0.34"/><path d="M389.5 580.6L399.2 580.5" stroke-width="0.80" stroke-opacity="0.34"/><path d="M408.1 580.4L417.7 580.3M414.4 582.1L411.4 578.7" stroke-width="0.80" stroke-opacity="0.34"/><path d="M426.6 580.2L436.2 580.2" stroke-width="0.80" stroke-opacity="0.33"/><path d="M445.1 580.1L454.6 580.0M451.9 581.8L447.9 578.4" stroke-width="0.80" stroke-opacity="0.33"/><path d="M463.5 579.9L473.0 579.8" stroke-width="0.80" stroke-opacity="0.33"/><path d="M481.8 579.7L491.4 579.7M489.2 581.4L484.1 578.0" stroke-width="0.80" stroke-opacity="0.33"/><path d="M500.1 579.6L509.6 579.5" stroke-width="0.80" stroke-opacity="0.33"/><path d="M518.4 579.4L527.9 579.3M526.2 581.1L520.2 577.7" stroke-width="0.80" stroke-opacity="0.33"/><path d="M536.6 579.3L546.1 579.2" stroke-width="0.79" stroke-opacity="0.33"/><path d="M554.8 579.1L564.2 579.0M563.1 580.8L556.0 577.4" stroke-width="0.79" stroke-opacity="0.33"/><path d="M572.9 578.9L582.3 578.9" stroke-width="0.79" stroke-opacity="0.33"/><path d="M591.0 578.8L600.3 578.7M599.7 580.4L591.7 577.1" stroke-width="0.79" stroke-opacity="0.33"/><path d="M609.0 578.6L618.3 578.5" stroke-width="0.79" stroke-opacity="0.33"/><path d="M626.9 578.5L636.3 578.4M636.2 580.1L627.2 576.8" stroke-width="0.79" stroke-opacity="0.32"/><path d="M5.4 579.1L13.7 575.9" stroke-width="0.78" stroke-opacity="0.32"/><path d="M43.1 578.8L50.3 575.6" stroke-width="0.78" stroke-opacity="0.32"/><path d="M80.5 578.5L86.7 575.3" stroke-width="0.78" stroke-opacity="0.32"/><path d="M117.8 578.2L122.9 575.0" stroke-width="0.78" stroke-opacity="0.31"/><path d="M154.8 577.8L159.0 574.7" stroke-width="0.77" stroke-opacity="0.31"/><path d="M191.7 577.5L194.8 574.4" stroke-width="0.77" stroke-opacity="0.31"/><path d="M228.4 577.2L230.5 574.1" stroke-width="0.77" stroke-opacity="0.31"/><path d="M264.9 576.9L266.0 573.8" stroke-width="0.77" stroke-opacity="0.31"/><path d="M301.1 576.6L301.3 573.5" stroke-width="0.77" stroke-opacity="0.31"/><path d="M337.2 576.3L336.4 573.2" stroke-width="0.76" stroke-opacity="0.30"/><path d="M373.1 576.0L371.4 572.9" stroke-width="0.76" stroke-opacity="0.30"/><path d="M408.8 575.7L406.2 572.6" stroke-width="0.76" stroke-opacity="0.30"/><path d="M444.4 575.4L440.8 572.3" stroke-width="0.76" stroke-opacity="0.30"/><path d="M479.7 575.1L475.2 572.0" stroke-width="0.76" stroke-opacity="0.30"/><path d="M514.9 574.8L509.4 571.8" stroke-width="0.76" stroke-opacity="0.30"/><path d="M549.8 574.5L543.5 571.5" stroke-width="0.75" stroke-opacity="0.29"/><path d="M584.6 574.2L577.4 571.2" stroke-width="0.75" stroke-opacity="0.29"/><path d="M619.2 573.9L611.1 570.9" stroke-width="0.75" stroke-opacity="0.29"/><path d="M2.4 571.7L11.6 571.6" stroke-width="0.74" stroke-opacity="0.29"/><path d="M20.1 571.6L29.3 571.5M20.9 573.0L28.4 570.1" stroke-width="0.74" stroke-opacity="0.29"/><path d="M37.7 571.4L46.9 571.4" stroke-width="0.74" stroke-opacity="0.29"/><path d="M55.3 571.3L64.5 571.2M56.6 572.7L63.1 569.8" stroke-width="0.74" stroke-opacity="0.28"/><path d="M72.9 571.1L82.0 571.1" stroke-width="0.74" stroke-opacity="0.28"/><path d="M90.4 571.0L99.5 570.9M92.1 572.4L97.7 569.5" stroke-width="0.74" stroke-opacity="0.28"/><path d="M107.9 570.9L116.9 570.8" stroke-width="0.74" stroke-opacity="0.28"/><path d="M125.3 570.7L134.3 570.7M127.5 572.2L132.1 569.3" stroke-width="0.74" stroke-opacity="0.28"/><path d="M142.7 570.6L151.7 570.5" stroke-width="0.74" stroke-opacity="0.28"/><path d="M160.0 570.4L169.0 570.4M162.6 571.9L166.4 569.0" stroke-width="0.74" stroke-opacity="0.28"/><path d="M177.3 570.3L186.3 570.2" stroke-width="0.74" stroke-opacity="0.28"/><path d="M194.6 570.2L203.5 570.1M197.6 571.6L200.4 568.7" stroke-width="0.73" stroke-opacity="0.28"/><path d="M211.8 570.0L220.7 570.0" stroke-width="0.73" stroke-opacity="0.28"/><path d="M228.9 569.9L237.8 569.8M232.4 571.3L234.3 568.5" stroke-width="0.73" stroke-opacity="0.28"/><path d="M246.0 569.8L254.9 569.7" stroke-width="0.73" stroke-opacity="0.28"/><path d="M263.1 569.6L272.0 569.6M267.0 571.0L268.1 568.2" stroke-width="0.73" stroke-opacity="0.28"/><path d="M280.2 569.5L289.0 569.4" stroke-width="0.73" stroke-opacity="0.27"/><path d="M297.2 569.4L306.0 569.3M301.5 570.7L301.6 567.9" stroke-width="0.73" stroke-opacity="0.27"/><path d="M314.1 569.2L322.9 569.1" stroke-width="0.73" stroke-opacity="0.27"/><path d="M331.0 569.1L339.8 569.0M335.8 570.5L335.1 567.7" stroke-width="0.73" stroke-opacity="0.27"/><path d="M347.9 568.9L356.6 568.9" stroke-width="0.73" stroke-opacity="0.27"/><path d="M364.7 568.8L373.4 568.7M369.9 570.2L368.3 567.4" stroke-width="0.73" stroke-opacity="0.27"/><path d="M381.5 568.7L390.2 568.6" stroke-width="0.72" stroke-opacity="0.27"/><path d="M398.2 568.5L406.9 568.5M403.8 569.9L401.4 567.1" stroke-width="0.72" stroke-opacity="0.27"/><path d="M414.9 568.4L423.6 568.3" stroke-width="0.72" stroke-opacity="0.27"/><path d="M431.6 568.3L440.3 568.2M437.6 569.6L434.3 566.9" stroke-width="0.72" stroke-opacity="0.27"/><path d="M448.2 568.1L456.9 568.1" stroke-width="0.72" stroke-opacity="0.27"/><path d="M464.8 568.0L473.4 567.9M471.2 569.4L467.1 566.6" stroke-width="0.72" stroke-opacity="0.27"/><path d="M481.3 567.9L489.9 567.8" stroke-width="0.72" stroke-opacity="0.27"/><path d="M497.8 567.8L506.4 567.7M504.6 569.1L499.7 566.4" stroke-width="0.72" stroke-opacity="0.27"/><path d="M514.3 567.6L522.8 567.6" stroke-width="0.72" stroke-opacity="0.26"/><path d="M530.7 567.5L539.2 567.4M537.9 568.8L532.1 566.1" stroke-width="0.72" stroke-opacity="0.26"/><path d="M547.1 567.4L555.6 567.3" stroke-width="0.72" stroke-opacity="0.26"/><path d="M563.4 567.2L571.9 567.2M571.0 568.6L564.4 565.9" stroke-width="0.71" stroke-opacity="0.26"/><path d="M579.7 567.1L588.2 567.0" stroke-width="0.71" stroke-opacity="0.26"/><path d="M596.0 567.0L604.4 566.9M604.0 568.3L596.6 565.6" stroke-width="0.71" stroke-opacity="0.26"/><path d="M612.2 566.8L620.6 566.8" stroke-width="0.71" stroke-opacity="0.26"/><path d="M628.4 566.7L636.8 566.6M636.7 568.0L628.6 565.4" stroke-width="0.71" stroke-opacity="0.26"/><path d="M0.8 567.8L8.4 565.1" stroke-width="0.71" stroke-opacity="0.26"/><path d="M34.9 567.5L41.7 564.8" stroke-width="0.71" stroke-opacity="0.26"/><path d="M68.8 567.2L74.7 564.6" stroke-width="0.71" stroke-opacity="0.26"/><path d="M102.6 567.0L107.7 564.4" stroke-width="0.70" stroke-opacity="0.25"/><path d="M136.2 566.7L140.4 564.1" stroke-width="0.70" stroke-opacity="0.25"/><path d="M169.6 566.5L173.0 563.9" stroke-width="0.70" stroke-opacity="0.25"/><path d="M202.9 566.2L205.5 563.6" stroke-width="0.70" stroke-opacity="0.25"/><path d="M236.0 566.0L237.8 563.4" stroke-width="0.70" stroke-opacity="0.25"/><path d="M269.0 565.7L269.9 563.1" stroke-width="0.70" stroke-opacity="0.25"/><path d="M301.8 565.5L301.9 562.9" stroke-width="0.69" stroke-opacity="0.25"/><path d="M334.4 565.2L333.8 562.7" stroke-width="0.69" stroke-opacity="0.24"/><path d="M366.9 564.9L365.5 562.4" stroke-width="0.69" stroke-opacity="0.24"/><path d="M399.3 564.7L397.1 562.2" stroke-width="0.69" stroke-opacity="0.24"/><path d="M431.4 564.5L428.5 561.9" stroke-width="0.69" stroke-opacity="0.24"/><path d="M463.5 564.2L459.7 561.7" stroke-width="0.69" stroke-opacity="0.24"/><path d="M495.4 564.0L490.9 561.5" stroke-width="0.68" stroke-opacity="0.24"/><path d="M527.1 563.7L521.9 561.2" stroke-width="0.68" stroke-opacity="0.24"/><path d="M558.7 563.5L552.7 561.0" stroke-width="0.68" stroke-opacity="0.23"/><path d="M590.1 563.2L583.4 560.8" stroke-width="0.68" stroke-opacity="0.23"/><path d="M621.4 563.0L614.0 560.5" stroke-width="0.68" stroke-opacity="0.23"/><path d="M-1.7 561.7L6.7 561.6" stroke-width="0.68" stroke-opacity="0.23"/><path d="M14.5 561.5L22.8 561.5M15.1 562.7L22.1 560.3" stroke-width="0.68" stroke-opacity="0.23"/><path d="M30.5 561.4L38.9 561.4" stroke-width="0.68" stroke-opacity="0.23"/><path d="M46.6 561.3L54.9 561.3M47.6 562.5L53.7 560.1" stroke-width="0.68" stroke-opacity="0.23"/><path d="M62.5 561.2L70.8 561.1" stroke-width="0.67" stroke-opacity="0.23"/><path d="M78.5 561.1L86.8 561.0M79.9 562.3L85.3 559.9" stroke-width="0.67" stroke-opacity="0.23"/><path d="M94.4 561.0L102.7 560.9" stroke-width="0.67" stroke-opacity="0.23"/><path d="M110.3 560.9L118.6 560.8M112.1 562.0L116.7 559.6" stroke-width="0.67" stroke-opacity="0.23"/><path d="M126.2 560.7L134.4 560.7" stroke-width="0.67" stroke-opacity="0.23"/><path d="M142.0 560.6L150.2 560.6M144.1 561.8L148.0 559.4" stroke-width="0.67" stroke-opacity="0.23"/><path d="M157.7 560.5L165.9 560.4" stroke-width="0.67" stroke-opacity="0.22"/><path d="M173.5 560.4L181.7 560.3M176.0 561.6L179.1 559.2" stroke-width="0.67" stroke-opacity="0.22"/><path d="M189.2 560.3L197.3 560.2" stroke-width="0.67" stroke-opacity="0.22"/><path d="M204.9 560.2L213.0 560.1M207.7 561.3L210.1 559.0" stroke-width="0.67" stroke-opacity="0.22"/><path d="M220.5 560.1L228.6 560.0" stroke-width="0.67" stroke-opacity="0.22"/><path d="M236.1 559.9L244.2 559.9M239.3 561.1L240.9 558.7" stroke-width="0.67" stroke-opacity="0.22"/><path d="M251.7 559.8L259.7 559.8" stroke-width="0.67" stroke-opacity="0.22"/><path d="M267.2 559.7L275.2 559.7M270.8 560.9L271.6 558.5" stroke-width="0.66" stroke-opacity="0.22"/><path d="M282.7 559.6L290.7 559.5" stroke-width="0.66" stroke-opacity="0.22"/><path d="M298.1 559.5L306.2 559.4M302.1 560.6L302.2 558.3" stroke-width="0.66" stroke-opacity="0.22"/><path d="M313.6 559.4L321.6 559.3" stroke-width="0.66" stroke-opacity="0.22"/><path d="M328.9 559.3L336.9 559.2M333.2 560.4L332.7 558.1" stroke-width="0.66" stroke-opacity="0.22"/><path d="M344.3 559.2L352.3 559.1" stroke-width="0.66" stroke-opacity="0.22"/><path d="M359.6 559.0L367.6 559.0M364.3 560.2L363.0 557.9" stroke-width="0.66" stroke-opacity="0.22"/><path d="M374.9 558.9L382.8 558.9" stroke-width="0.66" stroke-opacity="0.22"/><path d="M390.2 558.8L398.1 558.8M395.1 560.0L393.1 557.7" stroke-width="0.66" stroke-opacity="0.22"/><path d="M405.4 558.7L413.3 558.7" stroke-width="0.66" stroke-opacity="0.21"/><path d="M420.6 558.6L428.4 558.5M425.9 559.7L423.2 557.4" stroke-width="0.66" stroke-opacity="0.21"/><path d="M435.7 558.5L443.6 558.4" stroke-width="0.66" stroke-opacity="0.21"/><path d="M450.8 558.4L458.7 558.3M456.5 559.5L453.1 557.2" stroke-width="0.66" stroke-opacity="0.21"/><path d="M465.9 558.3L473.7 558.2" stroke-width="0.65" stroke-opacity="0.21"/><path d="M480.9 558.2L488.8 558.1M486.9 559.3L482.8 557.0" stroke-width="0.65" stroke-opacity="0.21"/><path d="M496.0 558.1L503.8 558.0" stroke-width="0.65" stroke-opacity="0.21"/><path d="M510.9 557.9L518.7 557.9M517.2 559.1L512.5 556.8" stroke-width="0.65" stroke-opacity="0.21"/><path d="M525.9 557.8L533.6 557.8" stroke-width="0.65" stroke-opacity="0.21"/><path d="M540.8 557.7L548.5 557.7M547.4 558.8L542.0 556.6" stroke-width="0.65" stroke-opacity="0.21"/><path d="M555.7 557.6L563.4 557.6" stroke-width="0.65" stroke-opacity="0.21"/><path d="M570.5 557.5L578.2 557.5M577.5 558.6L571.4 556.4" stroke-width="0.65" stroke-opacity="0.21"/><path d="M585.3 557.4L593.0 557.3" stroke-width="0.65" stroke-opacity="0.21"/><path d="M600.1 557.3L607.8 557.2M607.4 558.4L600.6 556.2" stroke-width="0.65" stroke-opacity="0.21"/><path d="M614.9 557.2L622.5 557.1" stroke-width="0.65" stroke-opacity="0.21"/><path d="M629.6 557.1L637.2 557.0M637.2 558.2L629.7 556.0" stroke-width="0.65" stroke-opacity="0.21"/><path d="M-3.0 558.4L4.1 556.2" stroke-width="0.65" stroke-opacity="0.21"/><path d="M28.2 558.2L34.5 556.0" stroke-width="0.65" stroke-opacity="0.21"/><path d="M59.2 558.0L64.8 555.7" stroke-width="0.65" stroke-opacity="0.20"/><path d="M90.0 557.7L94.9 555.5" stroke-width="0.64" stroke-opacity="0.20"/><path d="M120.8 557.5L125.0 555.3" stroke-width="0.64" stroke-opacity="0.20"/><path d="M151.4 557.3L154.9 555.1" stroke-width="0.64" stroke-opacity="0.20"/><path d="M181.8 557.1L184.6 554.9" stroke-width="0.64" stroke-opacity="0.20"/><path d="M212.1 556.9L214.3 554.7" stroke-width="0.64" stroke-opacity="0.20"/><path d="M242.3 556.7L243.8 554.5" stroke-width="0.64" stroke-opacity="0.20"/><path d="M272.4 556.5L273.2 554.3" stroke-width="0.64" stroke-opacity="0.20"/><path d="M302.3 556.2L302.5 554.1" stroke-width="0.63" stroke-opacity="0.20"/><path d="M332.1 556.0L331.6 553.9" stroke-width="0.63" stroke-opacity="0.19"/><path d="M361.8 555.8L360.6 553.7" stroke-width="0.63" stroke-opacity="0.19"/><path d="M391.3 555.6L389.5 553.5" stroke-width="0.63" stroke-opacity="0.19"/><path d="M420.8 555.4L418.3 553.3" stroke-width="0.63" stroke-opacity="0.19"/><path d="M450.1 555.2L446.9 553.1" stroke-width="0.63" stroke-opacity="0.19"/><path d="M479.2 555.0L475.5 552.9" stroke-width="0.63" stroke-opacity="0.19"/><path d="M508.2 554.8L503.9 552.7" stroke-width="0.63" stroke-opacity="0.19"/><path d="M537.2 554.6L532.2 552.5" stroke-width="0.62" stroke-opacity="0.19"/><path d="M565.9 554.4L560.3 552.3" stroke-width="0.62" stroke-opacity="0.19"/><path d="M594.6 554.2L588.4 552.1" stroke-width="0.62" stroke-opacity="0.18"/><path d="M623.2 554.0L616.3 552.0" stroke-width="0.62" stroke-opacity="0.18"/><path d="M9.7 553.2L17.4 553.1M10.3 554.2L16.8 552.1" stroke-width="0.62" stroke-opacity="0.18"/><path d="M24.5 553.1L32.1 553.0" stroke-width="0.62" stroke-opacity="0.18"/><path d="M39.2 553.0L46.8 552.9M40.1 554.0L45.9 552.0" stroke-width="0.62" stroke-opacity="0.18"/><path d="M53.9 552.9L61.5 552.8" stroke-width="0.62" stroke-opacity="0.18"/><path d="M68.6 552.8L76.2 552.7M69.8 553.8L74.9 551.8" stroke-width="0.62" stroke-opacity="0.18"/><path d="M83.2 552.7L90.8 552.6" stroke-width="0.62" stroke-opacity="0.18"/><path d="M97.8 552.6L105.4 552.5M99.3 553.6L103.8 551.6" stroke-width="0.62" stroke-opacity="0.18"/><path d="M112.3 552.5L119.9 552.4" stroke-width="0.62" stroke-opacity="0.18"/><path d="M126.9 552.4L134.4 552.3M128.7 553.4L132.6 551.4" stroke-width="0.62" stroke-opacity="0.18"/><path d="M141.4 552.3L148.9 552.3" stroke-width="0.62" stroke-opacity="0.18"/><path d="M155.9 552.2L163.4 552.2M158.0 553.2L161.2 551.2" stroke-width="0.61" stroke-opacity="0.18"/><path d="M170.3 552.1L177.8 552.1" stroke-width="0.61" stroke-opacity="0.18"/><path d="M184.7 552.0L192.2 552.0M187.1 553.0L189.7 551.0" stroke-width="0.61" stroke-opacity="0.18"/><path d="M199.1 551.9L206.6 551.9" stroke-width="0.61" stroke-opacity="0.18"/><path d="M213.4 551.8L220.9 551.8M216.2 552.8L218.1 550.8" stroke-width="0.61" stroke-opacity="0.18"/><path d="M227.8 551.7L235.2 551.7" stroke-width="0.61" stroke-opacity="0.18"/><path d="M242.1 551.6L249.5 551.6M245.1 552.6L246.4 550.6" stroke-width="0.61" stroke-opacity="0.18"/><path d="M256.3 551.5L263.7 551.5" stroke-width="0.61" stroke-opacity="0.18"/><path d="M270.6 551.4L278.0 551.4M273.9 552.4L274.6 550.4" stroke-width="0.61" stroke-opacity="0.17"/><path d="M284.8 551.3L292.1 551.3" stroke-width="0.61" stroke-opacity="0.17"/><path d="M298.9 551.3L306.3 551.2M302.6 552.2L302.7 550.3" stroke-width="0.61" stroke-opacity="0.17"/><path d="M313.1 551.2L320.4 551.1" stroke-width="0.61" stroke-opacity="0.17"/><path d="M327.2 551.1L334.5 551.0M331.1 552.0L330.6 550.1" stroke-width="0.61" stroke-opacity="0.17"/><path d="M341.3 551.0L348.6 550.9" stroke-width="0.61" stroke-opacity="0.17"/><path d="M355.4 550.9L362.7 550.8M359.6 551.8L358.5 549.9" stroke-width="0.61" stroke-opacity="0.17"/><path d="M369.4 550.8L376.7 550.7" stroke-width="0.61" stroke-opacity="0.17"/><path d="M383.4 550.7L390.7 550.6M387.9 551.6L386.2 549.7" stroke-width="0.60" stroke-opacity="0.17"/><path d="M397.4 550.6L404.6 550.5" stroke-width="0.60" stroke-opacity="0.17"/><path d="M411.3 550.5L418.6 550.5M416.1 551.5L413.8 549.5" stroke-width="0.60" stroke-opacity="0.17"/><path d="M425.2 550.4L432.5 550.4" stroke-width="0.60" stroke-opacity="0.17"/><path d="M439.1 550.3L446.3 550.3M444.2 551.3L441.3 549.3" stroke-width="0.60" stroke-opacity="0.17"/><path d="M453.0 550.2L460.2 550.2" stroke-width="0.60" stroke-opacity="0.17"/><path d="M466.8 550.1L474.0 550.1M472.1 551.1L468.7 549.2" stroke-width="0.60" stroke-opacity="0.17"/><path d="M480.6 550.0L487.8 550.0" stroke-width="0.60" stroke-opacity="0.17"/><path d="M494.4 550.0L501.5 549.9M500.0 550.9L496.0 549.0" stroke-width="0.60" stroke-opacity="0.17"/><path d="M508.1 549.9L515.3 549.8" stroke-width="0.60" stroke-opacity="0.17"/><path d="M521.8 549.8L529.0 549.7M527.7 550.7L523.1 548.8" stroke-width="0.60" stroke-opacity="0.17"/><path d="M535.5 549.7L542.6 549.6" stroke-width="0.60" stroke-opacity="0.16"/><path d="M549.2 549.6L556.3 549.5M555.4 550.5L550.2 548.6" stroke-width="0.60" stroke-opacity="0.16"/><path d="M562.8 549.5L569.9 549.4" stroke-width="0.60" stroke-opacity="0.16"/><path d="M576.4 549.4L583.5 549.4M582.9 550.3L577.1 548.4" stroke-width="0.60" stroke-opacity="0.16"/><path d="M590.0 549.3L597.1 549.3" stroke-width="0.60" stroke-opacity="0.16"/><path d="M603.6 549.2L610.6 549.2M610.3 550.1L604.0 548.3" stroke-width="0.59" stroke-opacity="0.16"/><path d="M617.1 549.1L624.1 549.1" stroke-width="0.59" stroke-opacity="0.16"/><path d="M630.6 549.0L637.6 549.0M637.6 550.0L630.7 548.1" stroke-width="0.59" stroke-opacity="0.16"/><path d="M22.5 550.3L28.5 548.4" stroke-width="0.60" stroke-opacity="0.16"/><path d="M51.0 550.1L56.4 548.3" stroke-width="0.59" stroke-opacity="0.16"/><path d="M79.5 550.0L84.2 548.1" stroke-width="0.59" stroke-opacity="0.16"/><path d="M107.8 549.8L111.9 547.9" stroke-width="0.59" stroke-opacity="0.16"/><path d="M136.0 549.6L139.5 547.7" stroke-width="0.59" stroke-opacity="0.16"/><path d="M164.1 549.4L167.0 547.6" stroke-width="0.59" stroke-opacity="0.16"/><path d="M192.0 549.2L194.4 547.4" stroke-width="0.59" stroke-opacity="0.16"/><path d="M219.9 549.1L221.7 547.2" stroke-width="0.59" stroke-opacity="0.16"/><path d="M247.6 548.9L248.9 547.1" stroke-width="0.59" stroke-opacity="0.16"/><path d="M275.3 548.7L275.9 546.9" stroke-width="0.59" stroke-opacity="0.15"/><path d="M302.8 548.5L302.9 546.7" stroke-width="0.58" stroke-opacity="0.15"/><path d="M330.2 548.3L329.7 546.5" stroke-width="0.58" stroke-opacity="0.15"/><path d="M357.5 548.2L356.5 546.4" stroke-width="0.58" stroke-opacity="0.15"/><path d="M384.7 548.0L383.1 546.2" stroke-width="0.58" stroke-opacity="0.15"/><path d="M411.8 547.8L409.7 546.0" stroke-width="0.58" stroke-opacity="0.15"/><path d="M438.8 547.6L436.1 545.9" stroke-width="0.58" stroke-opacity="0.15"/><path d="M465.6 547.5L462.4 545.7" stroke-width="0.58" stroke-opacity="0.15"/><path d="M492.4 547.3L488.7 545.5" stroke-width="0.58" stroke-opacity="0.15"/><path d="M519.1 547.1L514.8 545.4" stroke-width="0.57" stroke-opacity="0.15"/><path d="M545.6 546.9L540.8 545.2" stroke-width="0.57" stroke-opacity="0.14"/><path d="M572.1 546.8L566.8 545.0" stroke-width="0.57" stroke-opacity="0.14"/><path d="M598.4 546.6L592.6 544.9" stroke-width="0.57" stroke-opacity="0.14"/><path d="M624.6 546.4L618.3 544.7" stroke-width="0.57" stroke-opacity="0.14"/><path d="M5.7 546.1L12.8 546.0M6.2 546.9L12.3 545.2" stroke-width="0.57" stroke-opacity="0.14"/><path d="M19.4 546.0L26.5 546.0" stroke-width="0.57" stroke-opacity="0.14"/><path d="M33.0 545.9L40.0 545.9M33.7 546.8L39.2 545.0" stroke-width="0.57" stroke-opacity="0.14"/><path d="M46.6 545.8L53.6 545.8" stroke-width="0.57" stroke-opacity="0.14"/><path d="M60.1 545.8L67.1 545.7M61.1 546.6L66.1 544.9" stroke-width="0.57" stroke-opacity="0.14"/><path d="M73.6 545.7L80.7 545.6" stroke-width="0.57" stroke-opacity="0.14"/><path d="M87.1 545.6L94.1 545.5M88.4 546.4L92.8 544.7" stroke-width="0.57" stroke-opacity="0.14"/><path d="M100.6 545.5L107.6 545.5" stroke-width="0.57" stroke-opacity="0.14"/><path d="M114.1 545.4L121.0 545.4M115.6 546.3L119.5 544.5" stroke-width="0.57" stroke-opacity="0.14"/><path d="M127.5 545.3L134.5 545.3" stroke-width="0.57" stroke-opacity="0.14"/><path d="M140.9 545.3L147.8 545.2M142.7 546.1L146.0 544.4" stroke-width="0.57" stroke-opacity="0.14"/><path d="M154.3 545.2L161.2 545.1" stroke-width="0.57" stroke-opacity="0.14"/><path d="M167.6 545.1L174.5 545.0M169.7 545.9L172.4 544.2" stroke-width="0.57" stroke-opacity="0.14"/><path d="M180.9 545.0L187.8 545.0" stroke-width="0.57" stroke-opacity="0.14"/><path d="M194.2 544.9L201.1 544.9M196.5 545.8L198.8 544.1" stroke-width="0.57" stroke-opacity="0.14"/><path d="M207.5 544.8L214.4 544.8" stroke-width="0.57" stroke-opacity="0.14"/><path d="M220.7 544.8L227.6 544.7M223.3 545.6L225.0 543.9" stroke-width="0.56" stroke-opacity="0.14"/><path d="M233.9 544.7L240.8 544.6" stroke-width="0.56" stroke-opacity="0.14"/><path d="M247.1 544.6L254.0 544.6M250.0 545.4L251.1 543.7" stroke-width="0.56" stroke-opacity="0.14"/><path d="M260.3 544.5L267.1 544.5" stroke-width="0.56" stroke-opacity="0.14"/><path d="M273.4 544.4L280.3 544.4M276.5 545.3L277.2 543.6" stroke-width="0.56" stroke-opacity="0.14"/><path d="M286.5 544.4L293.4 544.3" stroke-width="0.56" stroke-opacity="0.14"/><path d="M299.6 544.3L306.4 544.2M303.0 545.1L303.1 543.4" stroke-width="0.56" stroke-opacity="0.13"/><path d="M312.7 544.2L319.5 544.2" stroke-width="0.56" stroke-opacity="0.13"/><path d="M325.7 544.1L332.5 544.1M329.3 544.9L328.9 543.3" stroke-width="0.56" stroke-opacity="0.13"/><path d="M338.8 544.0L345.5 544.0" stroke-width="0.56" stroke-opacity="0.13"/><path d="M351.8 544.0L358.5 543.9M355.6 544.8L354.7 543.1" stroke-width="0.56" stroke-opacity="0.13"/><path d="M364.7 543.9L371.5 543.8" stroke-width="0.56" stroke-opacity="0.13"/><path d="M377.7 543.8L384.4 543.8M381.8 544.6L380.3 543.0" stroke-width="0.56" stroke-opacity="0.13"/><path d="M390.6 543.7L397.3 543.7" stroke-width="0.56" stroke-opacity="0.13"/><path d="M403.5 543.6L410.2 543.6M407.8 544.5L405.9 542.8" stroke-width="0.56" stroke-opacity="0.13"/><path d="M416.3 543.6L423.0 543.5" stroke-width="0.56" stroke-opacity="0.13"/><path d="M429.2 543.5L435.9 543.4M433.8 544.3L431.3 542.6" stroke-width="0.56" stroke-opacity="0.13"/><path d="M442.0 543.4L448.7 543.4" stroke-width="0.56" stroke-opacity="0.13"/><path d="M454.8 543.3L461.4 543.3M459.6 544.1L456.7 542.5" stroke-width="0.56" stroke-opacity="0.13"/><path d="M467.6 543.2L474.2 543.2" stroke-width="0.55" stroke-opacity="0.13"/><path d="M480.3 543.2L486.9 543.1M485.4 544.0L481.9 542.3" stroke-width="0.55" stroke-opacity="0.13"/><path d="M493.0 543.1L499.7 543.0" stroke-width="0.55" stroke-opacity="0.13"/><path d="M505.7 543.0L512.3 543.0M511.0 543.8L507.1 542.2" stroke-width="0.55" stroke-opacity="0.13"/><path d="M518.4 542.9L525.0 542.9" stroke-width="0.55" stroke-opacity="0.13"/><path d="M531.1 542.9L537.6 542.8M536.6 543.7L532.2 542.0" stroke-width="0.55" stroke-opacity="0.13"/><path d="M543.7 542.8L550.3 542.7" stroke-width="0.55" stroke-opacity="0.13"/><path d="M556.3 542.7L562.9 542.7M562.1 543.5L557.2 541.9" stroke-width="0.55" stroke-opacity="0.13"/><path d="M568.9 542.6L575.4 542.6" stroke-width="0.55" stroke-opacity="0.13"/><path d="M581.4 542.5L588.0 542.5M587.4 543.3L582.0 541.7" stroke-width="0.55" stroke-opacity="0.13"/><path d="M594.0 542.5L600.5 542.4" stroke-width="0.55" stroke-opacity="0.12"/><path d="M606.5 542.4L613.0 542.4M612.7 543.2L606.8 541.6" stroke-width="0.55" stroke-opacity="0.12"/><path d="M619.0 542.3L625.5 542.3" stroke-width="0.55" stroke-opacity="0.12"/><path d="M631.4 542.2L637.9 542.2M637.9 543.0L631.5 541.4" stroke-width="0.55" stroke-opacity="0.12"/><path d="M17.7 543.6L23.3 542.0" stroke-width="0.55" stroke-opacity="0.13"/><path d="M44.1 543.5L49.2 541.9" stroke-width="0.55" stroke-opacity="0.13"/><path d="M70.5 543.3L75.0 541.7" stroke-width="0.55" stroke-opacity="0.13"/><path d="M96.7 543.2L100.8 541.6" stroke-width="0.55" stroke-opacity="0.12"/><path d="M122.9 543.0L126.4 541.4" stroke-width="0.55" stroke-opacity="0.12"/><path d="M148.9 542.9L152.0 541.3" stroke-width="0.55" stroke-opacity="0.12"/><path d="M174.9 542.7L177.4 541.1" stroke-width="0.55" stroke-opacity="0.12"/><path d="M200.7 542.6L202.8 541.0" stroke-width="0.55" stroke-opacity="0.12"/><path d="M226.5 542.4L228.0 540.8" stroke-width="0.54" stroke-opacity="0.12"/><path d="M252.1 542.2L253.2 540.7" stroke-width="0.54" stroke-opacity="0.12"/><path d="M277.7 542.1L278.3 540.5" stroke-width="0.54" stroke-opacity="0.12"/><path d="M303.2 541.9L303.3 540.4" stroke-width="0.54" stroke-opacity="0.12"/><path d="M328.6 541.8L328.2 540.2" stroke-width="0.54" stroke-opacity="0.12"/><path d="M353.8 541.6L353.0 540.1" stroke-width="0.54" stroke-opacity="0.12"/><path d="M379.0 541.5L377.7 540.0" stroke-width="0.54" stroke-opacity="0.12"/><path d="M404.1 541.3L402.3 539.8" stroke-width="0.54" stroke-opacity="0.11"/><path d="M429.1 541.2L426.9 539.7" stroke-width="0.54" stroke-opacity="0.11"/><path d="M454.0 541.0L451.3 539.5" stroke-width="0.54" stroke-opacity="0.11"/><path d="M478.9 540.9L475.7 539.4" stroke-width="0.53" stroke-opacity="0.11"/><path d="M503.6 540.7L499.9 539.2" stroke-width="0.53" stroke-opacity="0.11"/><path d="M528.2 540.6L524.1 539.1" stroke-width="0.53" stroke-opacity="0.11"/><path d="M552.8 540.4L548.2 538.9" stroke-width="0.53" stroke-opacity="0.11"/><path d="M577.3 540.3L572.2 538.8" stroke-width="0.53" stroke-opacity="0.11"/><path d="M601.6 540.2L596.2 538.7" stroke-width="0.53" stroke-opacity="0.11"/><path d="M625.9 540.0L620.0 538.5" stroke-width="0.53" stroke-opacity="0.11"/><path d="M2.3 540.0L8.9 540.0M2.7 540.7L8.4 539.2" stroke-width="0.53" stroke-opacity="0.11"/><path d="M15.0 539.9L21.6 539.9" stroke-width="0.53" stroke-opacity="0.11"/><path d="M27.6 539.9L34.2 539.8M28.3 540.6L33.5 539.1" stroke-width="0.53" stroke-opacity="0.11"/><path d="M40.3 539.8L46.8 539.7" stroke-width="0.53" stroke-opacity="0.11"/><path d="M52.9 539.7L59.4 539.7M53.7 540.4L58.5 538.9" stroke-width="0.53" stroke-opacity="0.11"/><path d="M65.4 539.6L72.0 539.6" stroke-width="0.53" stroke-opacity="0.11"/><path d="M78.0 539.6L84.5 539.5M79.1 540.3L83.4 538.8" stroke-width="0.53" stroke-opacity="0.11"/><path d="M90.5 539.5L97.0 539.5" stroke-width="0.53" stroke-opacity="0.11"/><path d="M103.0 539.4L109.5 539.4M104.4 540.2L108.2 538.7" stroke-width="0.53" stroke-opacity="0.11"/><path d="M115.5 539.3L122.0 539.3" stroke-width="0.53" stroke-opacity="0.11"/><path d="M128.0 539.3L134.5 539.2M129.6 540.0L132.9 538.5" stroke-width="0.53" stroke-opacity="0.11"/><path d="M140.5 539.2L146.9 539.2" stroke-width="0.53" stroke-opacity="0.11"/><path d="M152.9 539.1L159.3 539.1M154.7 539.9L157.5 538.4" stroke-width="0.53" stroke-opacity="0.11"/><path d="M165.3 539.1L171.7 539.0" stroke-width="0.53" stroke-opacity="0.11"/><path d="M177.7 539.0L184.1 539.0M179.7 539.7L182.0 538.2" stroke-width="0.53" stroke-opacity="0.11"/><path d="M190.0 538.9L196.4 538.9" stroke-width="0.53" stroke-opacity="0.11"/><path d="M202.3 538.9L208.8 538.8M204.6 539.6L206.5 538.1" stroke-width="0.53" stroke-opacity="0.10"/><path d="M214.7 538.8L221.1 538.7" stroke-width="0.53" stroke-opacity="0.10"/><path d="M226.9 538.7L233.3 538.7M229.4 539.4L230.9 538.0" stroke-width="0.52" stroke-opacity="0.10"/><path d="M239.2 538.6L245.6 538.6" stroke-width="0.52" stroke-opacity="0.10"/><path d="M251.5 538.6L257.8 538.5M254.1 539.3L255.1 537.8" stroke-width="0.52" stroke-opacity="0.10"/><path d="M263.7 538.5L270.0 538.5" stroke-width="0.52" stroke-opacity="0.10"/><path d="M275.9 538.4L282.2 538.4M278.8 539.1L279.3 537.7" stroke-width="0.52" stroke-opacity="0.10"/><path d="M288.1 538.4L294.4 538.3" stroke-width="0.52" stroke-opacity="0.10"/><path d="M300.2 538.3L306.5 538.3M303.3 539.0L303.4 537.6" stroke-width="0.52" stroke-opacity="0.10"/><path d="M312.4 538.2L318.7 538.2" stroke-width="0.52" stroke-opacity="0.10"/><path d="M324.5 538.2L330.8 538.1M327.8 538.9L327.5 537.4" stroke-width="0.52" stroke-opacity="0.10"/><path d="M336.6 538.1L342.9 538.1" stroke-width="0.52" stroke-opacity="0.10"/><path d="M348.7 538.0L354.9 538.0M352.2 538.7L351.4 537.3" stroke-width="0.52" stroke-opacity="0.10"/><path d="M360.7 537.9L367.0 537.9" stroke-width="0.52" stroke-opacity="0.10"/><path d="M372.7 537.9L379.0 537.8M376.5 538.6L375.3 537.2" stroke-width="0.52" stroke-opacity="0.10"/><path d="M384.8 537.8L391.0 537.8" stroke-width="0.52" stroke-opacity="0.10"/><path d="M396.7 537.7L403.0 537.7M400.7 538.4L399.0 537.0" stroke-width="0.52" stroke-opacity="0.10"/><path d="M408.7 537.7L414.9 537.6" stroke-width="0.52" stroke-opacity="0.10"/><path d="M420.7 537.6L426.9 537.6M424.8 538.3L422.7 536.9" stroke-width="0.52" stroke-opacity="0.10"/><path d="M432.6 537.5L438.8 537.5" stroke-width="0.52" stroke-opacity="0.10"/><path d="M444.5 537.5L450.7 537.4M448.9 538.2L446.3 536.8" stroke-width="0.52" stroke-opacity="0.10"/><path d="M456.4 537.4L462.5 537.4" stroke-width="0.52" stroke-opacity="0.10"/><path d="M468.2 537.3L474.4 537.3M472.8 538.0L469.8 536.6" stroke-width="0.52" stroke-opacity="0.10"/><path d="M480.1 537.3L486.2 537.2" stroke-width="0.51" stroke-opacity="0.10"/><path d="M491.9 537.2L498.0 537.2M496.7 537.9L493.3 536.5" stroke-width="0.51" stroke-opacity="0.10"/><path d="M503.7 537.1L509.8 537.1" stroke-width="0.51" stroke-opacity="0.10"/><path d="M515.5 537.1L521.6 537.0M520.5 537.8L516.6 536.4" stroke-width="0.51" stroke-opacity="0.09"/><path d="M527.2 537.0L533.4 537.0" stroke-width="0.51" stroke-opacity="0.09"/><path d="M539.0 536.9L545.1 536.9M544.2 537.6L539.9 536.2" stroke-width="0.51" stroke-opacity="0.09"/><path d="M550.7 536.9L556.8 536.8" stroke-width="0.51" stroke-opacity="0.09"/><path d="M562.4 536.8L568.5 536.8M567.8 537.5L563.1 536.1" stroke-width="0.51" stroke-opacity="0.09"/><path d="M574.1 536.7L580.1 536.7" stroke-width="0.51" stroke-opacity="0.09"/><path d="M585.7 536.7L591.8 536.6M591.3 537.3L586.3 536.0" stroke-width="0.51" stroke-opacity="0.09"/><path d="M597.4 536.6L603.4 536.6" stroke-width="0.51" stroke-opacity="0.09"/><path d="M609.0 536.5L615.0 536.5M614.8 537.2L609.3 535.8" stroke-width="0.51" stroke-opacity="0.09"/><path d="M620.6 536.5L626.6 536.4" stroke-width="0.51" stroke-opacity="0.09"/><path d="M632.2 536.4L638.2 536.4M638.2 537.1L632.3 535.7" stroke-width="0.51" stroke-opacity="0.09"/><path d="M13.5 537.9L18.8 536.5" stroke-width="0.51" stroke-opacity="0.10"/><path d="M38.1 537.8L43.0 536.4" stroke-width="0.51" stroke-opacity="0.09"/><path d="M62.7 537.6L67.1 536.2" stroke-width="0.51" stroke-opacity="0.09"/><path d="M87.2 537.5L91.1 536.1" stroke-width="0.51" stroke-opacity="0.09"/><path d="M111.5 537.3L115.1 536.0" stroke-width="0.51" stroke-opacity="0.09"/><path d="M135.8 537.2L138.9 535.8" stroke-width="0.51" stroke-opacity="0.09"/><path d="M160.0 537.1L162.7 535.7" stroke-width="0.51" stroke-opacity="0.09"/><path d="M184.2 536.9L186.4 535.6" stroke-width="0.51" stroke-opacity="0.09"/><path d="M208.2 536.8L210.0 535.4" stroke-width="0.51" stroke-opacity="0.09"/><path d="M232.1 536.7L233.5 535.3" stroke-width="0.51" stroke-opacity="0.09"/><path d="M256.0 536.5L256.9 535.2" stroke-width="0.51" stroke-opacity="0.09"/><path d="M279.8 536.4L280.3 535.1" stroke-width="0.50" stroke-opacity="0.09"/><path d="M303.5 536.3L303.6 534.9" stroke-width="0.50" stroke-opacity="0.09"/><path d="M327.1 536.1L326.8 534.8" stroke-width="0.50" stroke-opacity="0.09"/><path d="M350.7 536.0L349.9 534.7" stroke-width="0.50" stroke-opacity="0.09"/><path d="M374.1 535.9L373.0 534.5" stroke-width="0.50" stroke-opacity="0.08"/><path d="M397.5 535.7L396.0 534.4" stroke-width="0.50" stroke-opacity="0.08"/><path d="M420.8 535.6L418.8 534.3" stroke-width="0.50" stroke-opacity="0.08"/><path d="M444.0 535.5L441.7 534.2" stroke-width="0.50" stroke-opacity="0.08"/><path d="M467.2 535.4L464.4 534.0" stroke-width="0.50" stroke-opacity="0.08"/><path d="M490.3 535.2L487.1 533.9" stroke-width="0.50" stroke-opacity="0.08"/><path d="M513.2 535.1L509.7 533.8" stroke-width="0.50" stroke-opacity="0.08"/><path d="M536.1 535.0L532.2 533.7" stroke-width="0.50" stroke-opacity="0.08"/><path d="M559.0 534.8L554.6 533.6" stroke-width="0.50" stroke-opacity="0.08"/><path d="M581.7 534.7L577.0 533.4" stroke-width="0.50" stroke-opacity="0.08"/><path d="M604.4 534.6L599.3 533.3" stroke-width="0.50" stroke-opacity="0.08"/><path d="M627.0 534.5L621.5 533.2" stroke-width="0.50" stroke-opacity="0.08"/><path d="M-0.7 534.7L5.5 534.7M-0.3 535.4L5.1 534.0" stroke-width="0.50" stroke-opacity="0.08"/><path d="M11.2 534.6L17.3 534.6" stroke-width="0.50" stroke-opacity="0.08"/><path d="M23.0 534.6L29.1 534.6M23.6 535.2L28.5 533.9" stroke-width="0.50" stroke-opacity="0.08"/><path d="M34.8 534.5L40.9 534.5" stroke-width="0.50" stroke-opacity="0.08"/><path d="M46.6 534.5L52.7 534.4M47.3 535.1L51.9 533.8" stroke-width="0.50" stroke-opacity="0.08"/><path d="M58.3 534.4L64.4 534.4" stroke-width="0.50" stroke-opacity="0.08"/><path d="M70.1 534.3L76.2 534.3M71.0 535.0L75.2 533.7" stroke-width="0.50" stroke-opacity="0.08"/><path d="M81.8 534.3L87.9 534.2" stroke-width="0.50" stroke-opacity="0.08"/><path d="M93.5 534.2L99.6 534.2M94.7 534.8L98.4 533.5" stroke-width="0.50" stroke-opacity="0.08"/><path d="M105.2 534.1L111.2 534.1" stroke-width="0.50" stroke-opacity="0.08"/><path d="M116.8 534.1L122.9 534.1M118.2 534.7L121.5 533.4" stroke-width="0.50" stroke-opacity="0.08"/><path d="M128.5 534.0L134.5 534.0" stroke-width="0.50" stroke-opacity="0.08"/><path d="M140.1 534.0L146.1 533.9M141.6 534.6L144.5 533.3" stroke-width="0.50" stroke-opacity="0.08"/><path d="M151.7 533.9L157.7 533.9" stroke-width="0.50" stroke-opacity="0.08"/><path d="M163.3 533.8L169.3 533.8M165.0 534.5L167.5 533.2" stroke-width="0.50" stroke-opacity="0.08"/><path d="M174.8 533.8L180.8 533.7" stroke-width="0.50" stroke-opacity="0.08"/><path d="M186.4 533.7L192.4 533.7M188.3 534.3L190.4 533.1" stroke-width="0.50" stroke-opacity="0.08"/><path d="M197.9 533.7L203.9 533.6" stroke-width="0.50" stroke-opacity="0.08"/><path d="M209.4 533.6L215.4 533.6M211.5 534.2L213.2 532.9" stroke-width="0.50" stroke-opacity="0.08"/><path d="M220.9 533.5L226.8 533.5" stroke-width="0.50" stroke-opacity="0.08"/><path d="M232.3 533.5L238.3 533.4M234.7 534.1L236.0 532.8" stroke-width="0.50" stroke-opacity="0.07"/><path d="M243.8 533.4L249.7 533.4" stroke-width="0.50" stroke-opacity="0.07"/><path d="M255.2 533.3L261.2 533.3M257.8 534.0L258.6 532.7" stroke-width="0.50" stroke-opacity="0.07"/><path d="M266.6 533.3L272.6 533.3" stroke-width="0.50" stroke-opacity="0.07"/><path d="M278.0 533.2L283.9 533.2M280.7 533.8L281.2 532.6" stroke-width="0.50" stroke-opacity="0.07"/><path d="M289.4 533.2L295.3 533.1" stroke-width="0.50" stroke-opacity="0.07"/><path d="M300.7 533.1L306.6 533.1M303.7 533.7L303.7 532.5" stroke-width="0.50" stroke-opacity="0.07"/><path d="M312.1 533.0L318.0 533.0" stroke-width="0.50" stroke-opacity="0.07"/><path d="M323.4 533.0L329.3 533.0M326.5 533.6L326.2 532.3" stroke-width="0.50" stroke-opacity="0.07"/><path d="M334.7 532.9L340.6 532.9" stroke-width="0.50" stroke-opacity="0.07"/><path d="M346.0 532.9L351.8 532.8M349.3 533.5L348.6 532.2" stroke-width="0.50" stroke-opacity="0.07"/><path d="M357.2 532.8L363.1 532.8" stroke-width="0.50" stroke-opacity="0.07"/><path d="M368.5 532.7L374.3 532.7M371.9 533.4L370.9 532.1" stroke-width="0.50" stroke-opacity="0.07"/><path d="M379.7 532.7L385.5 532.7" stroke-width="0.50" stroke-opacity="0.07"/><path d="M390.9 532.6L396.7 532.6M394.5 533.2L393.1 532.0" stroke-width="0.50" stroke-opacity="0.07"/><path d="M402.1 532.6L407.9 532.5" stroke-width="0.50" stroke-opacity="0.07"/><path d="M413.3 532.5L419.1 532.5M417.1 533.1L415.2 531.9" stroke-width="0.50" stroke-opacity="0.07"/><path d="M424.4 532.4L430.2 532.4" stroke-width="0.50" stroke-opacity="0.07"/><path d="M435.5 532.4L441.3 532.4M439.5 533.0L437.3 531.8" stroke-width="0.50" stroke-opacity="0.07"/><path d="M446.6 532.3L452.4 532.3" stroke-width="0.50" stroke-opacity="0.07"/><path d="M457.7 532.3L463.5 532.2M461.9 532.9L459.3 531.6" stroke-width="0.50" stroke-opacity="0.07"/><path d="M468.8 532.2L474.6 532.2" stroke-width="0.50" stroke-opacity="0.07"/><path d="M479.9 532.1L485.6 532.1M484.2 532.8L481.3 531.5" stroke-width="0.50" stroke-opacity="0.07"/><path d="M490.9 532.1L496.6 532.1" stroke-width="0.50" stroke-opacity="0.07"/><path d="M501.9 532.0L507.7 532.0M506.5 532.6L503.1 531.4" stroke-width="0.50" stroke-opacity="0.07"/><path d="M512.9 532.0L518.6 531.9" stroke-width="0.50" stroke-opacity="0.07"/><path d="M523.9 531.9L529.6 531.9M528.6 532.5L524.9 531.3" stroke-width="0.50" stroke-opacity="0.07"/><path d="M534.9 531.9L540.6 531.8" stroke-width="0.50" stroke-opacity="0.07"/><path d="M545.8 531.8L551.5 531.8M550.7 532.4L546.7 531.2" stroke-width="0.50" stroke-opacity="0.07"/><path d="M556.8 531.7L562.4 531.7" stroke-width="0.50" stroke-opacity="0.07"/><path d="M567.7 531.7L573.4 531.6M572.8 532.3L568.3 531.1" stroke-width="0.50" stroke-opacity="0.06"/><path d="M578.6 531.6L584.2 531.6" stroke-width="0.50" stroke-opacity="0.06"/><path d="M589.5 531.6L595.1 531.5M594.7 532.2L589.9 530.9" stroke-width="0.50" stroke-opacity="0.06"/><path d="M600.3 531.5L606.0 531.5" stroke-width="0.50" stroke-opacity="0.06"/><path d="M611.2 531.4L616.8 531.4M616.6 532.0L611.4 530.8" stroke-width="0.50" stroke-opacity="0.06"/><path d="M622.0 531.4L627.6 531.4" stroke-width="0.50" stroke-opacity="0.06"/><path d="M632.8 531.3L638.4 531.3M638.4 531.9L632.9 530.7" stroke-width="0.50" stroke-opacity="0.06"/><path d="M9.9 532.9L14.9 531.6" stroke-width="0.50" stroke-opacity="0.07"/><path d="M32.9 532.7L37.6 531.5" stroke-width="0.50" stroke-opacity="0.07"/><path d="M55.9 532.6L60.2 531.4" stroke-width="0.50" stroke-opacity="0.07"/><path d="M78.8 532.5L82.7 531.3" stroke-width="0.50" stroke-opacity="0.07"/><path d="M101.7 532.4L105.1 531.2" stroke-width="0.50" stroke-opacity="0.07"/><path d="M124.4 532.3L127.5 531.1" stroke-width="0.50" stroke-opacity="0.06"/><path d="M147.1 532.2L149.8 530.9" stroke-width="0.50" stroke-opacity="0.06"/><path d="M169.7 532.0L172.0 530.8" stroke-width="0.50" stroke-opacity="0.06"/><path d="M192.2 531.9L194.2 530.7" stroke-width="0.50" stroke-opacity="0.06"/><path d="M214.7 531.8L216.2 530.6" stroke-width="0.50" stroke-opacity="0.06"/><path d="M237.1 531.7L238.3 530.5" stroke-width="0.50" stroke-opacity="0.06"/><path d="M259.4 531.6L260.2 530.4" stroke-width="0.50" stroke-opacity="0.06"/><path d="M281.6 531.5L282.1 530.3" stroke-width="0.50" stroke-opacity="0.06"/><path d="M303.8 531.3L303.9 530.2" stroke-width="0.50" stroke-opacity="0.06"/><path d="M325.9 531.2L325.6 530.0" stroke-width="0.50" stroke-opacity="0.06"/><path d="M347.9 531.1L347.3 529.9" stroke-width="0.50" stroke-opacity="0.06"/><path d="M369.9 531.0L368.9 529.8" stroke-width="0.50" stroke-opacity="0.06"/><path d="M391.8 530.9L390.4 529.7" stroke-width="0.50" stroke-opacity="0.06"/><path d="M413.6 530.8L411.8 529.6" stroke-width="0.50" stroke-opacity="0.06"/><path d="M435.3 530.7L433.2 529.5" stroke-width="0.50" stroke-opacity="0.06"/><path d="M457.0 530.5L454.6 529.4" stroke-width="0.50" stroke-opacity="0.06"/><path d="M478.6 530.4L475.8 529.3" stroke-width="0.50" stroke-opacity="0.05"/><path d="M500.1 530.3L497.0 529.2" stroke-width="0.50" stroke-opacity="0.05"/><path d="M521.6 530.2L518.1 529.1" stroke-width="0.50" stroke-opacity="0.05"/><path d="M543.0 530.1L539.2 529.0" stroke-width="0.50" stroke-opacity="0.05"/><path d="M564.4 530.0L560.2 528.8" stroke-width="0.50" stroke-opacity="0.05"/><path d="M585.6 529.9L581.1 528.7" stroke-width="0.50" stroke-opacity="0.05"/><path d="M606.8 529.8L602.0 528.6" stroke-width="0.50" stroke-opacity="0.05"/><path d="M628.0 529.6L622.8 528.5" stroke-width="0.50" stroke-opacity="0.05"/><path d="M7.8 530.0L13.6 530.0" stroke-width="0.50" stroke-opacity="0.06"/><path d="M18.9 530.0L24.7 529.9M19.4 530.5L24.1 529.4" stroke-width="0.50" stroke-opacity="0.06"/><path d="M30.0 529.9L35.7 529.9" stroke-width="0.50" stroke-opacity="0.06"/><path d="M41.0 529.9L46.8 529.8M41.7 530.4L46.1 529.3" stroke-width="0.50" stroke-opacity="0.05"/><path d="M52.1 529.8L57.8 529.8" stroke-width="0.50" stroke-opacity="0.05"/><path d="M63.1 529.7L68.8 529.7M64.0 530.3L67.9 529.2" stroke-width="0.50" stroke-opacity="0.05"/><path d="M74.1 529.7L79.8 529.7" stroke-width="0.50" stroke-opacity="0.05"/><path d="M85.1 529.6L90.8 529.6M86.1 530.2L89.7 529.1" stroke-width="0.50" stroke-opacity="0.05"/><path d="M96.1 529.6L101.8 529.6" stroke-width="0.50" stroke-opacity="0.05"/><path d="M107.0 529.5L112.7 529.5M108.2 530.1L111.5 528.9" stroke-width="0.50" stroke-opacity="0.05"/><path d="M117.9 529.5L123.6 529.4" stroke-width="0.50" stroke-opacity="0.05"/><path d="M128.9 529.4L134.5 529.4M130.2 530.0L133.1 528.8" stroke-width="0.50" stroke-opacity="0.05"/><path d="M139.8 529.4L145.4 529.3" stroke-width="0.50" stroke-opacity="0.05"/><path d="M150.6 529.3L156.3 529.3M152.2 529.9L154.7 528.7" stroke-width="0.50" stroke-opacity="0.05"/><path d="M161.5 529.3L167.1 529.2" stroke-width="0.50" stroke-opacity="0.05"/><path d="M172.3 529.2L178.0 529.2M174.1 529.8L176.2 528.6" stroke-width="0.50" stroke-opacity="0.05"/><path d="M183.2 529.1L188.8 529.1" stroke-width="0.50" stroke-opacity="0.05"/><path d="M194.0 529.1L199.6 529.1M195.9 529.6L197.7 528.5" stroke-width="0.50" stroke-opacity="0.05"/><path d="M204.8 529.0L210.4 529.0" stroke-width="0.50" stroke-opacity="0.05"/><path d="M215.6 529.0L221.2 529.0M217.6 529.5L219.1 528.4" stroke-width="0.50" stroke-opacity="0.05"/><path d="M226.3 528.9L231.9 528.9" stroke-width="0.50" stroke-opacity="0.05"/><path d="M237.1 528.9L242.7 528.9M239.3 529.4L240.4 528.3" stroke-width="0.50" stroke-opacity="0.05"/><path d="M247.8 528.8L253.4 528.8" stroke-width="0.50" stroke-opacity="0.05"/><path d="M258.5 528.8L264.1 528.7M260.9 529.3L261.7 528.2" stroke-width="0.50" stroke-opacity="0.05"/><path d="M269.2 528.7L274.8 528.7" stroke-width="0.50" stroke-opacity="0.05"/><path d="M279.9 528.7L285.4 528.6M282.5 529.2L282.9 528.1" stroke-width="0.50" stroke-opacity="0.05"/><path d="M290.6 528.6L296.1 528.6" stroke-width="0.50" stroke-opacity="0.05"/><path d="M301.2 528.6L306.7 528.5M303.9 529.1L304.0 528.0" stroke-width="0.50" stroke-opacity="0.05"/><path d="M311.8 528.5L317.4 528.5" stroke-width="0.50" stroke-opacity="0.05"/><path d="M322.4 528.5L328.0 528.4M325.3 529.0L325.1 527.9" stroke-width="0.50" stroke-opacity="0.05"/><path d="M333.0 528.4L338.5 528.4" stroke-width="0.50" stroke-opacity="0.05"/><path d="M343.6 528.3L349.1 528.3M346.7 528.9L346.1 527.8" stroke-width="0.50" stroke-opacity="0.05"/><path d="M354.2 528.3L359.7 528.3" stroke-width="0.50" stroke-opacity="0.05"/><path d="M364.7 528.2L370.2 528.2M368.0 528.8L367.0 527.7" stroke-width="0.50" stroke-opacity="0.05"/><path d="M375.3 528.2L380.7 528.2" stroke-width="0.50" stroke-opacity="0.05"/><path d="M385.8 528.1L391.2 528.1M389.2 528.7L387.9 527.6" stroke-width="0.50" stroke-opacity="0.05"/><path d="M396.3 528.1L401.7 528.1" stroke-width="0.50" stroke-opacity="0.04"/><path d="M406.8 528.0L412.2 528.0M410.3 528.6L408.7 527.5" stroke-width="0.50" stroke-opacity="0.04"/><path d="M417.2 528.0L422.7 527.9" stroke-width="0.50" stroke-opacity="0.04"/><path d="M427.7 527.9L433.1 527.9M431.4 528.5L429.4 527.4" stroke-width="0.50" stroke-opacity="0.04"/><path d="M438.1 527.9L443.5 527.8" stroke-width="0.50" stroke-opacity="0.04"/><path d="M448.5 527.8L453.9 527.8M452.4 528.4L450.1 527.3" stroke-width="0.50" stroke-opacity="0.04"/><path d="M458.9 527.8L464.3 527.7" stroke-width="0.50" stroke-opacity="0.04"/><path d="M469.3 527.7L474.7 527.7M473.3 528.2L470.7 527.2" stroke-width="0.50" stroke-opacity="0.04"/><path d="M479.7 527.7L485.1 527.6" stroke-width="0.50" stroke-opacity="0.04"/><path d="M490.0 527.6L495.4 527.6M494.2 528.1L491.3 527.1" stroke-width="0.50" stroke-opacity="0.04"/><path d="M500.4 527.6L505.7 527.5" stroke-width="0.50" stroke-opacity="0.04"/><path d="M510.7 527.5L516.1 527.5M515.0 528.0L511.8 527.0" stroke-width="0.50" stroke-opacity="0.04"/><path d="M521.0 527.5L526.4 527.4" stroke-width="0.50" stroke-opacity="0.04"/><path d="M531.3 527.4L536.6 527.4M535.8 527.9L532.2 526.9" stroke-width="0.50" stroke-opacity="0.04"/><path d="M541.6 527.4L546.9 527.3" stroke-width="0.50" stroke-opacity="0.04"/><path d="M551.8 527.3L557.2 527.3M556.5 527.8L552.6 526.8" stroke-width="0.50" stroke-opacity="0.04"/><path d="M562.1 527.3L567.4 527.2" stroke-width="0.50" stroke-opacity="0.04"/><path d="M572.3 527.2L577.6 527.2M577.1 527.7L572.9 526.7" stroke-width="0.50" stroke-opacity="0.04"/><path d="M582.5 527.1L587.8 527.1" stroke-width="0.50" stroke-opacity="0.04"/><path d="M592.7 527.1L598.0 527.1M597.7 527.6L593.1 526.6" stroke-width="0.50" stroke-opacity="0.04"/><path d="M602.9 527.0L608.2 527.0" stroke-width="0.50" stroke-opacity="0.04"/><path d="M613.1 527.0L618.3 527.0M618.2 527.5L613.3 526.5" stroke-width="0.50" stroke-opacity="0.04"/><path d="M623.2 526.9L628.5 526.9" stroke-width="0.50" stroke-opacity="0.04"/><path d="M633.4 526.9L638.6 526.9M638.6 527.4L633.4 526.4" stroke-width="0.50" stroke-opacity="0.04"/><path d="M6.7 528.5L11.5 527.4" stroke-width="0.50" stroke-opacity="0.04"/><path d="M28.4 528.4L32.8 527.3" stroke-width="0.50" stroke-opacity="0.04"/><path d="M50.0 528.2L54.1 527.2" stroke-width="0.50" stroke-opacity="0.04"/><path d="M71.5 528.1L75.2 527.1" stroke-width="0.50" stroke-opacity="0.04"/><path d="M93.0 528.0L96.4 527.0" stroke-width="0.50" stroke-opacity="0.04"/><path d="M114.4 527.9L117.4 526.9" stroke-width="0.50" stroke-opacity="0.04"/><path d="M135.7 527.8L138.4 526.8" stroke-width="0.50" stroke-opacity="0.04"/><path d="M157.0 527.7L159.3 526.7" stroke-width="0.50" stroke-opacity="0.04"/><path d="M178.2 527.6L180.2 526.6" stroke-width="0.50" stroke-opacity="0.04"/><path d="M199.3 527.5L201.0 526.5" stroke-width="0.50" stroke-opacity="0.04"/><path d="M220.4 527.4L221.8 526.4" stroke-width="0.50" stroke-opacity="0.04"/><path d="M241.4 527.3L242.4 526.3" stroke-width="0.50" stroke-opacity="0.04"/><path d="M262.4 527.2L263.1 526.2" stroke-width="0.50" stroke-opacity="0.04"/><path d="M283.2 527.1L283.6 526.1" stroke-width="0.50" stroke-opacity="0.04"/><path d="M304.1 527.0L304.1 526.0" stroke-width="0.50" stroke-opacity="0.04"/><path d="M324.8 526.9L324.6 525.9" stroke-width="0.50" stroke-opacity="0.04"/><path d="M345.5 526.8L344.9 525.8" stroke-width="0.50" stroke-opacity="0.03"/><path d="M366.1 526.7L365.2 525.7" stroke-width="0.50" stroke-opacity="0.03"/><path d="M386.7 526.6L385.5 525.6" stroke-width="0.50" stroke-opacity="0.03"/><path d="M407.2 526.5L405.7 525.5" stroke-width="0.50" stroke-opacity="0.03"/><path d="M427.7 526.4L425.8 525.4" stroke-width="0.50" stroke-opacity="0.03"/><path d="M448.0 526.3L445.9 525.3" stroke-width="0.50" stroke-opacity="0.03"/><path d="M468.4 526.2L465.9 525.2" stroke-width="0.50" stroke-opacity="0.03"/><path d="M488.6 526.1L485.9 525.1" stroke-width="0.50" stroke-opacity="0.03"/><path d="M508.8 526.0L505.8 525.0" stroke-width="0.50" stroke-opacity="0.03"/><path d="M529.0 525.9L525.6 524.9" stroke-width="0.50" stroke-opacity="0.03"/><path d="M549.1 525.8L545.4 524.8" stroke-width="0.50" stroke-opacity="0.03"/><path d="M569.1 525.7L565.1 524.7" stroke-width="0.50" stroke-opacity="0.03"/><path d="M589.0 525.6L584.8 524.6" stroke-width="0.50" stroke-opacity="0.03"/><path d="M608.9 525.5L604.4 524.5" stroke-width="0.50" stroke-opacity="0.03"/><path d="M628.8 525.4L623.9 524.4" stroke-width="0.50" stroke-opacity="0.03"/><path d="M4.9 525.9L10.3 525.9" stroke-width="0.50" stroke-opacity="0.03"/><path d="M15.3 525.9L20.8 525.9M15.8 526.4L20.3 525.4" stroke-width="0.50" stroke-opacity="0.03"/><path d="M25.8 525.8L31.2 525.8" stroke-width="0.50" stroke-opacity="0.03"/><path d="M36.2 525.8L41.6 525.8M36.8 526.3L40.9 525.3" stroke-width="0.50" stroke-opacity="0.03"/><path d="M46.6 525.7L52.0 525.7" stroke-width="0.50" stroke-opacity="0.03"/><path d="M57.0 525.7L62.3 525.7M57.7 526.2L61.6 525.2" stroke-width="0.50" stroke-opacity="0.03"/><path d="M67.3 525.6L72.7 525.6" stroke-width="0.50" stroke-opacity="0.03"/><path d="M77.7 525.6L83.1 525.6M78.6 526.1L82.1 525.1" stroke-width="0.50" stroke-opacity="0.03"/><path d="M88.0 525.6L93.4 525.5" stroke-width="0.50" stroke-opacity="0.03"/><path d="M98.3 525.5L103.7 525.5M99.4 526.0L102.6 525.0" stroke-width="0.50" stroke-opacity="0.03"/><path d="M108.6 525.5L114.0 525.4" stroke-width="0.50" stroke-opacity="0.03"/><path d="M118.9 525.4L124.3 525.4M120.2 525.9L123.0 524.9" stroke-width="0.50" stroke-opacity="0.03"/><path d="M129.2 525.4L134.5 525.3" stroke-width="0.50" stroke-opacity="0.03"/><path d="M139.5 525.3L144.8 525.3M140.8 525.8L143.4 524.8" stroke-width="0.50" stroke-opacity="0.03"/><path d="M149.7 525.3L155.0 525.2" stroke-width="0.50" stroke-opacity="0.03"/><path d="M159.9 525.2L165.3 525.2M161.5 525.7L163.7 524.7" stroke-width="0.50" stroke-opacity="0.03"/><path d="M170.2 525.2L175.5 525.1" stroke-width="0.50" stroke-opacity="0.03"/><path d="M180.4 525.1L185.7 525.1M182.0 525.6L184.0 524.6" stroke-width="0.50" stroke-opacity="0.03"/><path d="M190.5 525.1L195.8 525.0" stroke-width="0.50" stroke-opacity="0.03"/><path d="M200.7 525.0L206.0 525.0M202.5 525.5L204.2 524.5" stroke-width="0.50" stroke-opacity="0.03"/><path d="M210.9 525.0L216.1 524.9" stroke-width="0.50" stroke-opacity="0.03"/><path d="M221.0 524.9L226.3 524.9M223.0 525.4L224.3 524.4" stroke-width="0.50" stroke-opacity="0.03"/><path d="M231.1 524.9L236.4 524.9" stroke-width="0.50" stroke-opacity="0.03"/><path d="M241.2 524.8L246.5 524.8M243.4 525.3L244.4 524.3" stroke-width="0.50" stroke-opacity="0.03"/><path d="M251.3 524.8L256.6 524.8" stroke-width="0.50" stroke-opacity="0.03"/><path d="M261.4 524.7L266.7 524.7M263.7 525.2L264.4 524.2" stroke-width="0.50" stroke-opacity="0.03"/><path d="M271.5 524.7L276.7 524.7" stroke-width="0.50" stroke-opacity="0.03"/><path d="M281.5 524.6L286.8 524.6M284.0 525.1L284.3 524.1" stroke-width="0.50" stroke-opacity="0.03"/><path d="M291.6 524.6L296.8 524.6" stroke-width="0.50" stroke-opacity="0.03"/><path d="M301.6 524.5L306.8 524.5M304.2 525.0L304.2 524.0" stroke-width="0.50" stroke-opacity="0.03"/><path d="M311.6 524.5L316.8 524.5" stroke-width="0.50" stroke-opacity="0.02"/><path d="M321.6 524.4L326.8 524.4M324.3 524.9L324.1 524.0" stroke-width="0.50" stroke-opacity="0.02"/><path d="M331.6 524.4L336.8 524.4" stroke-width="0.50" stroke-opacity="0.02"/><path d="M341.5 524.4L346.7 524.3M344.4 524.8L343.9 523.9" stroke-width="0.50" stroke-opacity="0.02"/><path d="M351.5 524.3L356.7 524.3" stroke-width="0.50" stroke-opacity="0.02"/><path d="M361.4 524.3L366.6 524.2M364.4 524.7L363.6 523.8" stroke-width="0.50" stroke-opacity="0.02"/><path d="M371.3 524.2L376.5 524.2" stroke-width="0.50" stroke-opacity="0.02"/><path d="M381.2 524.2L386.4 524.1M384.4 524.6L383.3 523.7" stroke-width="0.50" stroke-opacity="0.02"/><path d="M391.1 524.1L396.3 524.1" stroke-width="0.50" stroke-opacity="0.02"/><path d="M401.0 524.1L406.1 524.1M404.3 524.6L402.9 523.6" stroke-width="0.50" stroke-opacity="0.02"/><path d="M410.9 524.0L416.0 524.0" stroke-width="0.50" stroke-opacity="0.02"/><path d="M420.7 524.0L425.8 524.0M424.2 524.5L422.4 523.5" stroke-width="0.50" stroke-opacity="0.02"/><path d="M430.6 523.9L435.7 523.9" stroke-width="0.50" stroke-opacity="0.02"/><path d="M440.4 523.9L445.5 523.9M444.0 524.4L441.9 523.4" stroke-width="0.50" stroke-opacity="0.02"/><path d="M450.2 523.8L455.3 523.8" stroke-width="0.50" stroke-opacity="0.02"/><path d="M460.0 523.8L465.1 523.8M463.7 524.3L461.4 523.3" stroke-width="0.50" stroke-opacity="0.02"/><path d="M469.8 523.8L474.8 523.7" stroke-width="0.50" stroke-opacity="0.02"/><path d="M479.5 523.7L484.6 523.7M483.4 524.2L480.8 523.2" stroke-width="0.50" stroke-opacity="0.02"/><path d="M489.3 523.7L494.3 523.6" stroke-width="0.50" stroke-opacity="0.02"/><path d="M499.0 523.6L504.1 523.6M503.0 524.1L500.1 523.1" stroke-width="0.50" stroke-opacity="0.02"/><path d="M508.7 523.6L513.8 523.5" stroke-width="0.50" stroke-opacity="0.02"/><path d="M518.4 523.5L523.5 523.5M522.6 524.0L519.4 523.0" stroke-width="0.50" stroke-opacity="0.02"/><path d="M528.1 523.5L533.2 523.5" stroke-width="0.50" stroke-opacity="0.02"/><path d="M537.8 523.4L542.8 523.4M542.1 523.9L538.6 522.9" stroke-width="0.50" stroke-opacity="0.02"/><path d="M547.5 523.4L552.5 523.4" stroke-width="0.50" stroke-opacity="0.02"/><path d="M557.1 523.3L562.1 523.3M561.5 523.8L557.8 522.9" stroke-width="0.50" stroke-opacity="0.02"/><path d="M566.8 523.3L571.8 523.3" stroke-width="0.50" stroke-opacity="0.02"/><path d="M576.4 523.2L581.4 523.2M580.9 523.7L576.9 522.8" stroke-width="0.50" stroke-opacity="0.02"/><path d="M586.0 523.2L591.0 523.2" stroke-width="0.50" stroke-opacity="0.02"/><path d="M595.6 523.2L600.6 523.1M600.3 523.6L595.9 522.7" stroke-width="0.50" stroke-opacity="0.02"/><path d="M605.2 523.1L610.1 523.1" stroke-width="0.50" stroke-opacity="0.02"/><path d="M614.7 523.1L619.7 523.0M619.5 523.5L614.9 522.6" stroke-width="0.50" stroke-opacity="0.02"/><path d="M624.3 523.0L629.3 523.0" stroke-width="0.50" stroke-opacity="0.02"/><path d="M633.8 523.0L638.8 523.0M638.8 523.4L633.9 522.5" stroke-width="0.50" stroke-opacity="0.02"/><path d="M3.9 524.5L8.4 523.6" stroke-width="0.50" stroke-opacity="0.02"/><path d="M24.3 524.5L28.6 523.5" stroke-width="0.50" stroke-opacity="0.02"/><path d="M44.7 524.4L48.6 523.4" stroke-width="0.50" stroke-opacity="0.02"/><path d="M65.0 524.3L68.6 523.3" stroke-width="0.50" stroke-opacity="0.02"/><path d="M85.3 524.2L88.6 523.2" stroke-width="0.50" stroke-opacity="0.02"/><path d="M105.5 524.1L108.5 523.1" stroke-width="0.50" stroke-opacity="0.02"/><path d="M125.6 524.0L128.3 523.0" stroke-width="0.50" stroke-opacity="0.02"/><path d="M145.7 523.9L148.1 522.9" stroke-width="0.50" stroke-opacity="0.02"/><path d="M165.7 523.8L167.8 522.9" stroke-width="0.50" stroke-opacity="0.02"/><path d="M185.7 523.7L187.5 522.8" stroke-width="0.50" stroke-opacity="0.02"/><path d="M205.6 523.6L207.1 522.7" stroke-width="0.50" stroke-opacity="0.02"/><path d="M225.4 523.5L226.7 522.6" stroke-width="0.50" stroke-opacity="0.02"/><path d="M245.2 523.4L246.2 522.5" stroke-width="0.50" stroke-opacity="0.02"/><path d="M265.0 523.3L265.6 522.4" stroke-width="0.50" stroke-opacity="0.02"/><path d="M284.7 523.3L285.0 522.3" stroke-width="0.50" stroke-opacity="0.02"/><path d="M304.3 523.2L304.3 522.2" stroke-width="0.50" stroke-opacity="0.01"/><path d="M323.9 523.1L323.6 522.1" stroke-width="0.50" stroke-opacity="0.01"/><path d="M343.4 523.0L342.8 522.1" stroke-width="0.50" stroke-opacity="0.01"/><path d="M362.8 522.9L362.0 522.0" stroke-width="0.50" stroke-opacity="0.01"/><path d="M382.2 522.8L381.1 521.9" stroke-width="0.50" stroke-opacity="0.01"/><path d="M401.6 522.7L400.2 521.8" stroke-width="0.50" stroke-opacity="0.01"/><path d="M420.9 522.6L419.2 521.7" stroke-width="0.50" stroke-opacity="0.01"/><path d="M440.1 522.5L438.2 521.6" stroke-width="0.50" stroke-opacity="0.01"/><path d="M459.3 522.4L457.1 521.5" stroke-width="0.50" stroke-opacity="0.01"/><path d="M478.4 522.4L475.9 521.5" stroke-width="0.50" stroke-opacity="0.01"/><path d="M497.5 522.3L494.7 521.4" stroke-width="0.50" stroke-opacity="0.01"/><path d="M516.5 522.2L513.5 521.3" stroke-width="0.50" stroke-opacity="0.01"/><path d="M535.5 522.1L532.2 521.2" stroke-width="0.50" stroke-opacity="0.01"/><path d="M554.4 522.0L550.8 521.1" stroke-width="0.50" stroke-opacity="0.01"/><path d="M573.3 521.9L569.4 521.0" stroke-width="0.50" stroke-opacity="0.01"/><path d="M592.1 521.8L588.0 520.9" stroke-width="0.50" stroke-opacity="0.01"/><path d="M610.8 521.8L606.5 520.9" stroke-width="0.50" stroke-opacity="0.01"/><path d="M629.5 521.7L624.9 520.8" stroke-width="0.50" stroke-opacity="0.01"/><path d="M2.3 522.3L7.4 522.3" stroke-width="0.50" stroke-opacity="0.01"/><path d="M12.1 522.3L17.3 522.2M12.5 522.7L16.8 521.8" stroke-width="0.50" stroke-opacity="0.01"/><path d="M22.0 522.2L27.1 522.2" stroke-width="0.50" stroke-opacity="0.01"/><path d="M31.8 522.2L36.9 522.2M32.4 522.6L36.4 521.7" stroke-width="0.50" stroke-opacity="0.01"/><path d="M41.7 522.1L46.8 522.1" stroke-width="0.50" stroke-opacity="0.01"/><path d="M51.5 522.1L56.6 522.1M52.2 522.5L55.9 521.6" stroke-width="0.50" stroke-opacity="0.01"/><path d="M61.3 522.0L66.4 522.0" stroke-width="0.50" stroke-opacity="0.01"/><path d="M71.1 522.0L76.2 522.0M71.9 522.4L75.3 521.5" stroke-width="0.50" stroke-opacity="0.01"/><path d="M80.8 522.0L85.9 521.9" stroke-width="0.50" stroke-opacity="0.01"/><path d="M90.6 521.9L95.7 521.9M91.6 522.4L94.7 521.5" stroke-width="0.50" stroke-opacity="0.01"/><path d="M100.4 521.9L105.4 521.8" stroke-width="0.50" stroke-opacity="0.01"/><path d="M110.1 521.8L115.1 521.8M111.2 522.3L114.0 521.4" stroke-width="0.50" stroke-opacity="0.01"/><path d="M119.8 521.8L124.9 521.8" stroke-width="0.50" stroke-opacity="0.01"/><path d="M129.5 521.7L134.6 521.7M130.7 522.2L133.3 521.3" stroke-width="0.50" stroke-opacity="0.01"/><path d="M139.2 521.7L144.2 521.7" stroke-width="0.50" stroke-opacity="0.01"/><path d="M148.9 521.7L153.9 521.6M150.3 522.1L152.5 521.2" stroke-width="0.50" stroke-opacity="0.01"/><path d="M158.6 521.6L163.6 521.6" stroke-width="0.50" stroke-opacity="0.01"/><path d="M168.2 521.6L173.2 521.5M169.7 522.0L171.7 521.1" stroke-width="0.50" stroke-opacity="0.01"/><path d="M177.9 521.5L182.9 521.5" stroke-width="0.50" stroke-opacity="0.01"/><path d="M187.5 521.5L192.5 521.5M189.1 521.9L190.8 521.0" stroke-width="0.50" stroke-opacity="0.01"/><path d="M197.1 521.4L202.1 521.4" stroke-width="0.50" stroke-opacity="0.01"/><path d="M206.7 521.4L211.7 521.4M208.5 521.8L209.9 520.9" stroke-width="0.50" stroke-opacity="0.01"/><path d="M216.3 521.4L221.3 521.3" stroke-width="0.50" stroke-opacity="0.01"/><path d="M225.8 521.3L230.8 521.3M227.8 521.7L228.9 520.9" stroke-width="0.50" stroke-opacity="0.01"/><path d="M235.4 521.3L240.4 521.2" stroke-width="0.50" stroke-opacity="0.01"/><path d="M245.0 521.2L249.9 521.2M247.0 521.7L247.9 520.8" stroke-width="0.50" stroke-opacity="0.01"/><path d="M254.5 521.2L259.4 521.2" stroke-width="0.50" stroke-opacity="0.01"/><path d="M264.0 521.1L268.9 521.1M266.2 521.6L266.8 520.7" stroke-width="0.50" stroke-opacity="0.01"/><path d="M273.5 521.1L278.4 521.1" stroke-width="0.50" stroke-opacity="0.01"/><path d="M283.0 521.1L287.9 521.0M285.3 521.5L285.6 520.6" stroke-width="0.50" stroke-opacity="0.01"/><path d="M292.5 521.0L297.4 521.0" stroke-width="0.50" stroke-opacity="0.01"/><path d="M302.0 521.0L306.9 521.0M304.4 521.4L304.4 520.5" stroke-width="0.50" stroke-opacity="0.01"/><path d="M311.4 520.9L316.3 520.9" stroke-width="0.50" stroke-opacity="0.01"/><path d="M320.8 520.9L325.8 520.9M323.4 521.3L323.2 520.4" stroke-width="0.50" stroke-opacity="0.00"/><path d="M330.3 520.8L335.2 520.8" stroke-width="0.50" stroke-opacity="0.00"/><path d="M339.7 520.8L344.6 520.8M342.4 521.2L341.9 520.4" stroke-width="0.50" stroke-opacity="0.00"/><path d="M349.1 520.8L354.0 520.7" stroke-width="0.50" stroke-opacity="0.00"/><path d="M358.5 520.7L363.4 520.7M361.3 521.2L360.5 520.3" stroke-width="0.50" stroke-opacity="0.00"/><path d="M367.9 520.7L372.7 520.7" stroke-width="0.50" stroke-opacity="0.00"/><path d="M377.2 520.6L382.1 520.6M380.2 521.1L379.1 520.2" stroke-width="0.50" stroke-opacity="0.00"/><path d="M386.6 520.6L391.4 520.6" stroke-width="0.50" stroke-opacity="0.00"/><path d="M395.9 520.6L400.8 520.5M399.0 521.0L397.7 520.1" stroke-width="0.50" stroke-opacity="0.00"/><path d="M405.2 520.5L410.1 520.5" stroke-width="0.50" stroke-opacity="0.00"/><path d="M414.5 520.5L419.4 520.5M417.7 520.9L416.2 520.0" stroke-width="0.50" stroke-opacity="0.00"/><path d="M423.8 520.4L428.7 520.4" stroke-width="0.50" stroke-opacity="0.00"/><path d="M433.1 520.4L438.0 520.4M436.5 520.8L434.6 520.0" stroke-width="0.50" stroke-opacity="0.00"/><path d="M442.4 520.3L447.2 520.3" stroke-width="0.50" stroke-opacity="0.00"/><path d="M451.7 520.3L456.5 520.3M455.1 520.7L453.0 519.9" stroke-width="0.50" stroke-opacity="0.00"/><path d="M460.9 520.3L465.7 520.2" stroke-width="0.50" stroke-opacity="0.00"/><path d="M470.2 520.2L474.9 520.2M473.7 520.6L471.4 519.8" stroke-width="0.50" stroke-opacity="0.00"/><path d="M479.4 520.2L484.2 520.2" stroke-width="0.50" stroke-opacity="0.00"/><path d="M488.6 520.1L493.4 520.1M492.3 520.6L489.7 519.7" stroke-width="0.50" stroke-opacity="0.00"/><path d="M497.8 520.1L502.6 520.1" stroke-width="0.50" stroke-opacity="0.00"/><path d="M507.0 520.1L511.7 520.0M510.8 520.5L507.9 519.6" stroke-width="0.50" stroke-opacity="0.00"/><path d="M516.1 520.0L520.9 520.0" stroke-width="0.50" stroke-opacity="0.00"/><path d="M525.3 520.0L530.1 520.0M529.2 520.4L526.1 519.5" stroke-width="0.50" stroke-opacity="0.00"/><path d="M534.5 519.9L539.2 519.9" stroke-width="0.50" stroke-opacity="0.00"/><path d="M543.6 519.9L548.3 519.9M547.7 520.3L544.3 519.5" stroke-width="0.50" stroke-opacity="0.00"/><path d="M552.7 519.9L557.5 519.8" stroke-width="0.50" stroke-opacity="0.00"/><path d="M561.8 519.8L566.6 519.8M566.0 520.2L562.4 519.4" stroke-width="0.50" stroke-opacity="0.00"/><path d="M570.9 519.8L575.6 519.8" stroke-width="0.50" stroke-opacity="0.00"/><path d="M580.0 519.7L584.7 519.7M584.3 520.2L580.5 519.3" stroke-width="0.50" stroke-opacity="0.00"/><path d="M589.1 519.7L593.8 519.7" stroke-width="0.50" stroke-opacity="0.00"/><path d="M598.1 519.7L602.9 519.6M602.6 520.1L598.5 519.2" stroke-width="0.50" stroke-opacity="0.00"/><path d="M607.2 519.6L611.9 519.6" stroke-width="0.50" stroke-opacity="0.00"/><path d="M616.2 519.6L620.9 519.6M620.8 520.0L616.4 519.1" stroke-width="0.50" stroke-opacity="0.00"/><path d="M625.3 519.5L629.9 519.5" stroke-width="0.50" stroke-opacity="0.00"/><path d="M634.3 519.5L639.0 519.5M638.9 519.9L634.3 519.1" stroke-width="0.50" stroke-opacity="0.00"/><path d="M1.4 521.1L5.7 520.2" stroke-width="0.50" stroke-opacity="0.00"/><path d="M20.7 521.0L24.8 520.1" stroke-width="0.50" stroke-opacity="0.00"/><path d="M40.0 520.9L43.8 520.0" stroke-width="0.50" stroke-opacity="0.00"/><path d="M59.2 520.8L62.7 520.0" stroke-width="0.50" stroke-opacity="0.00"/><path d="M78.4 520.7L81.6 519.9" stroke-width="0.50" stroke-opacity="0.00"/><path d="M97.5 520.6L100.5 519.8" stroke-width="0.50" stroke-opacity="0.00"/><path d="M116.6 520.6L119.3 519.7" stroke-width="0.50" stroke-opacity="0.00"/><path d="M135.6 520.5L138.0 519.6" stroke-width="0.50" stroke-opacity="0.00"/><path d="M154.6 520.4L156.7 519.5" stroke-width="0.50" stroke-opacity="0.00"/><path d="M173.5 520.3L175.4 519.5" stroke-width="0.50" stroke-opacity="0.00"/><path d="M192.4 520.2L194.0 519.4" stroke-width="0.50" stroke-opacity="0.00"/><path d="M211.2 520.1L212.5 519.3" stroke-width="0.50" stroke-opacity="0.00"/><path d="M229.9 520.1L231.0 519.2" stroke-width="0.50" stroke-opacity="0.00"/><path d="M248.7 520.0L249.5 519.1" stroke-width="0.50" stroke-opacity="0.00"/><path d="M267.3 519.9L267.9 519.1" stroke-width="0.50" stroke-opacity="0.00"/><path d="M285.9 519.8L286.2 519.0" stroke-width="0.50" stroke-opacity="0.00"/><path d="M304.5 519.7L304.5 518.9" stroke-width="0.50" stroke-opacity="0.00"/><path d="M323.0 519.7L322.8 518.8" stroke-width="0.50" stroke-opacity="0.00"/><path d="M341.5 519.6L341.0 518.8" stroke-width="0.50" stroke-opacity="0.00"/><path d="M359.9 519.5L359.1 518.7" stroke-width="0.50" stroke-opacity="0.00"/><path d="M378.2 519.4L377.3 518.6" stroke-width="0.50" stroke-opacity="0.00"/><path d="M396.5 519.3L395.3 518.5" stroke-width="0.50" stroke-opacity="0.00"/><path d="M414.8 519.3L413.3 518.4" stroke-width="0.50" stroke-opacity="0.00"/><path d="M433.0 519.2L431.3 518.4" stroke-width="0.50" stroke-opacity="0.00"/><path d="M451.2 519.1L449.2 518.3" stroke-width="0.50" stroke-opacity="0.00"/><path d="M469.3 519.0L467.1 518.2" stroke-width="0.50" stroke-opacity="0.00"/><path d="M487.4 518.9L484.9 518.1" stroke-width="0.50" stroke-opacity="0.00"/><path d="M505.4 518.9L502.7 518.1" stroke-width="0.50" stroke-opacity="0.00"/><path d="M523.3 518.8L520.4 518.0" stroke-width="0.50" stroke-opacity="0.00"/><path d="M541.3 518.7L538.1 517.9" stroke-width="0.50" stroke-opacity="0.00"/><path d="M559.1 518.6L555.7 517.8" stroke-width="0.50" stroke-opacity="0.00"/><path d="M577.0 518.6L573.3 517.8" stroke-width="0.50" stroke-opacity="0.00"/><path d="M594.8 518.5L590.9 517.7" stroke-width="0.50" stroke-opacity="0.00"/><path d="M612.5 518.4L608.4 517.6" stroke-width="0.50" stroke-opacity="0.00"/><path d="M630.2 518.3L625.8 517.5" stroke-width="0.50" stroke-opacity="0.00"/><path d="M-0.1 519.1L4.8 519.0" stroke-width="0.50" stroke-opacity="0.00"/><path d="M9.3 519.0L14.1 519.0M9.6 519.4L13.7 518.6" stroke-width="0.50" stroke-opacity="0.00"/><path d="M18.6 519.0L23.5 519.0" stroke-width="0.50" stroke-opacity="0.00"/><path d="M27.9 518.9L32.8 518.9M28.4 519.3L32.3 518.5" stroke-width="0.50" stroke-opacity="0.00"/><path d="M37.3 518.9L42.1 518.9" stroke-width="0.50" stroke-opacity="0.00"/><path d="M46.6 518.9L51.4 518.8M47.2 519.3L50.8 518.4" stroke-width="0.50" stroke-opacity="0.00"/><path d="M55.9 518.8L60.7 518.8" stroke-width="0.50" stroke-opacity="0.00"/><path d="M65.2 518.8L70.0 518.8M65.9 519.2L69.2 518.4" stroke-width="0.50" stroke-opacity="0.00"/><path d="M74.4 518.7L79.2 518.7" stroke-width="0.50" stroke-opacity="0.00"/><path d="M83.7 518.7L88.5 518.7M84.5 519.1L87.6 518.3" stroke-width="0.50" stroke-opacity="0.00"/><path d="M92.9 518.7L97.7 518.6" stroke-width="0.50" stroke-opacity="0.00"/><path d="M102.2 518.6L107.0 518.6M103.1 519.0L106.0 518.2" stroke-width="0.50" stroke-opacity="0.00"/><path d="M111.4 518.6L116.2 518.6" stroke-width="0.50" stroke-opacity="0.00"/><path d="M120.6 518.5L125.4 518.5M121.7 518.9L124.3 518.1" stroke-width="0.50" stroke-opacity="0.00"/><path d="M129.8 518.5L134.6 518.5" stroke-width="0.50" stroke-opacity="0.00"/><path d="M139.0 518.5L143.8 518.4M140.2 518.9L142.5 518.1" stroke-width="0.50" stroke-opacity="0.00"/><path d="M148.2 518.4L152.9 518.4" stroke-width="0.50" stroke-opacity="0.00"/><path d="M157.3 518.4L162.1 518.4M158.7 518.8L160.7 518.0" stroke-width="0.50" stroke-opacity="0.00"/><path d="M166.5 518.4L171.2 518.3" stroke-width="0.50" stroke-opacity="0.00"/><path d="M175.6 518.3L180.4 518.3M177.1 518.7L178.9 517.9" stroke-width="0.50" stroke-opacity="0.00"/><path d="M184.7 518.3L189.5 518.3" stroke-width="0.50" stroke-opacity="0.00"/><path d="M193.8 518.2L198.6 518.2M195.4 518.6L197.0 517.8" stroke-width="0.50" stroke-opacity="0.00"/><path d="M202.9 518.2L207.7 518.2" stroke-width="0.50" stroke-opacity="0.00"/><path d="M212.0 518.2L216.8 518.1M213.7 518.6L215.0 517.8" stroke-width="0.50" stroke-opacity="0.00"/><path d="M221.1 518.1L225.8 518.1" stroke-width="0.50" stroke-opacity="0.00"/><path d="M230.2 518.1L234.9 518.1M232.0 518.5L233.0 517.7" stroke-width="0.50" stroke-opacity="0.00"/><path d="M239.2 518.0L243.9 518.0" stroke-width="0.50" stroke-opacity="0.00"/><path d="M248.3 518.0L253.0 518.0M250.2 518.4L251.0 517.6" stroke-width="0.50" stroke-opacity="0.00"/><path d="M257.3 518.0L262.0 517.9" stroke-width="0.50" stroke-opacity="0.00"/><path d="M266.3 517.9L271.0 517.9M268.4 518.3L268.9 517.5" stroke-width="0.50" stroke-opacity="0.00"/><path d="M275.3 517.9L280.0 517.9" stroke-width="0.50" stroke-opacity="0.00"/><path d="M284.3 517.9L289.0 517.8M286.5 518.2L286.8 517.5" stroke-width="0.50" stroke-opacity="0.00"/><path d="M293.3 517.8L298.0 517.8" stroke-width="0.50" stroke-opacity="0.00"/><path d="M302.3 517.8L306.9 517.8M304.6 518.2L304.6 517.4" stroke-width="0.50" stroke-opacity="0.00"/><path d="M311.2 517.7L315.9 517.7" stroke-width="0.50" stroke-opacity="0.00"/><path d="M320.2 517.7L324.8 517.7M322.6 518.1L322.4 517.3" stroke-width="0.50" stroke-opacity="0.00"/><path d="M329.1 517.7L333.8 517.6" stroke-width="0.50" stroke-opacity="0.00"/><path d="M338.0 517.6L342.7 517.6M340.6 518.0L340.1 517.2" stroke-width="0.50" stroke-opacity="0.00"/><path d="M346.9 517.6L351.6 517.6" stroke-width="0.50" stroke-opacity="0.00"/><path d="M355.8 517.6L360.5 517.5M358.5 517.9L357.8 517.2" stroke-width="0.50" stroke-opacity="0.00"/><path d="M364.7 517.5L369.4 517.5" stroke-width="0.50" stroke-opacity="0.00"/><path d="M373.6 517.5L378.2 517.5M376.4 517.9L375.5 517.1" stroke-width="0.50" stroke-opacity="0.00"/><path d="M382.5 517.4L387.1 517.4" stroke-width="0.50" stroke-opacity="0.00"/><path d="M391.3 517.4L395.9 517.4M394.2 517.8L393.1 517.0" stroke-width="0.50" stroke-opacity="0.00"/><path d="M400.2 517.4L404.8 517.3" stroke-width="0.50" stroke-opacity="0.00"/><path d="M409.0 517.3L413.6 517.3M412.0 517.7L410.6 516.9" stroke-width="0.50" stroke-opacity="0.00"/><path d="M417.8 517.3L422.4 517.3" stroke-width="0.50" stroke-opacity="0.00"/><path d="M426.6 517.3L431.2 517.2M429.7 517.6L428.1 516.9" stroke-width="0.50" stroke-opacity="0.00"/><path d="M435.4 517.2L440.0 517.2" stroke-width="0.50" stroke-opacity="0.00"/><path d="M444.2 517.2L448.8 517.2M447.4 517.6L445.6 516.8" stroke-width="0.50" stroke-opacity="0.00"/><path d="M453.0 517.1L457.5 517.1" stroke-width="0.50" stroke-opacity="0.00"/><path d="M461.8 517.1L466.3 517.1M465.1 517.5L463.0 516.7" stroke-width="0.50" stroke-opacity="0.00"/><path d="M470.5 517.1L475.1 517.1" stroke-width="0.50" stroke-opacity="0.00"/><path d="M479.2 517.0L483.8 517.0M482.7 517.4L480.4 516.6" stroke-width="0.50" stroke-opacity="0.00"/><path d="M488.0 517.0L492.5 517.0" stroke-width="0.50" stroke-opacity="0.00"/><path d="M496.7 517.0L501.2 516.9M500.2 517.3L497.7 516.6" stroke-width="0.50" stroke-opacity="0.00"/><path d="M505.4 516.9L509.9 516.9" stroke-width="0.50" stroke-opacity="0.00"/><path d="M514.1 516.9L518.6 516.9M517.8 517.3L515.0 516.5" stroke-width="0.50" stroke-opacity="0.00"/><path d="M522.8 516.8L527.3 516.8" stroke-width="0.50" stroke-opacity="0.00"/><path d="M531.4 516.8L536.0 516.8M535.2 517.2L532.2 516.4" stroke-width="0.50" stroke-opacity="0.00"/><path d="M540.1 516.8L544.6 516.8" stroke-width="0.50" stroke-opacity="0.00"/><path d="M548.8 516.7L553.3 516.7M552.6 517.1L549.4 516.4" stroke-width="0.50" stroke-opacity="0.00"/><path d="M557.4 516.7L561.9 516.7" stroke-width="0.50" stroke-opacity="0.00"/><path d="M566.0 516.7L570.5 516.6M570.0 517.0L566.5 516.3" stroke-width="0.50" stroke-opacity="0.00"/><path d="M574.6 516.6L579.1 516.6" stroke-width="0.50" stroke-opacity="0.00"/><path d="M583.3 516.6L587.7 516.6M587.4 517.0L583.6 516.2" stroke-width="0.50" stroke-opacity="0.00"/><path d="M591.8 516.6L596.3 516.5" stroke-width="0.50" stroke-opacity="0.00"/><path d="M600.4 516.5L604.9 516.5M604.6 516.9L600.7 516.1" stroke-width="0.50" stroke-opacity="0.00"/><path d="M609.0 516.5L613.5 516.5" stroke-width="0.50" stroke-opacity="0.00"/><path d="M617.6 516.4L622.0 516.4M621.9 516.8L617.7 516.1" stroke-width="0.50" stroke-opacity="0.00"/><path d="M626.1 516.4L630.6 516.4" stroke-width="0.50" stroke-opacity="0.00"/><path d="M634.7 516.4L639.1 516.4M639.1 516.7L634.7 516.0" stroke-width="0.50" stroke-opacity="0.00"/><path d="M-0.9 517.9L3.3 517.2" stroke-width="0.50" stroke-opacity="0.00"/><path d="M17.4 517.9L21.4 517.1" stroke-width="0.50" stroke-opacity="0.00"/><path d="M35.8 517.8L39.4 517.0" stroke-width="0.50" stroke-opacity="0.00"/><path d="M54.0 517.7L57.4 516.9" stroke-width="0.50" stroke-opacity="0.00"/><path d="M72.2 517.6L75.4 516.9" stroke-width="0.50" stroke-opacity="0.00"/><path d="M90.4 517.6L93.3 516.8" stroke-width="0.50" stroke-opacity="0.00"/><path d="M108.5 517.5L111.2 516.7" stroke-width="0.50" stroke-opacity="0.00"/><path d="M126.6 517.4L129.0 516.6" stroke-width="0.50" stroke-opacity="0.00"/><path d="M144.6 517.3L146.8 516.6" stroke-width="0.50" stroke-opacity="0.00"/><path d="M162.5 517.3L164.5 516.5" stroke-width="0.50" stroke-opacity="0.00"/><path d="M180.5 517.2L182.2 516.4" stroke-width="0.50" stroke-opacity="0.00"/><path d="M198.4 517.1L199.8 516.4" stroke-width="0.50" stroke-opacity="0.00"/><path d="M216.2 517.0L217.4 516.3" stroke-width="0.50" stroke-opacity="0.00"/><path d="M234.0 517.0L235.0 516.2" stroke-width="0.50" stroke-opacity="0.00"/><path d="M251.7 516.9L252.5 516.1" stroke-width="0.50" stroke-opacity="0.00"/><path d="M269.4 516.8L269.9 516.1" stroke-width="0.50" stroke-opacity="0.00"/><path d="M287.1 516.7L287.3 516.0" stroke-width="0.50" stroke-opacity="0.00"/><path d="M304.7 516.7L304.7 515.9" stroke-width="0.50" stroke-opacity="0.00"/><path d="M322.2 516.6L322.0 515.9" stroke-width="0.50" stroke-opacity="0.00"/><path d="M339.7 516.5L339.3 515.8" stroke-width="0.50" stroke-opacity="0.00"/><path d="M357.2 516.5L356.6 515.7" stroke-width="0.50" stroke-opacity="0.00"/><path d="M374.6 516.4L373.8 515.6" stroke-width="0.50" stroke-opacity="0.00"/><path d="M392.0 516.3L390.9 515.6" stroke-width="0.50" stroke-opacity="0.00"/><path d="M409.4 516.2L408.0 515.5" stroke-width="0.50" stroke-opacity="0.00"/><path d="M426.6 516.2L425.1 515.4" stroke-width="0.50" stroke-opacity="0.00"/><path d="M443.9 516.1L442.1 515.4" stroke-width="0.50" stroke-opacity="0.00"/><path d="M461.1 516.0L459.1 515.3" stroke-width="0.50" stroke-opacity="0.00"/><path d="M478.3 516.0L476.0 515.2" stroke-width="0.50" stroke-opacity="0.00"/><path d="M495.4 515.9L492.9 515.2" stroke-width="0.50" stroke-opacity="0.00"/><path d="M512.4 515.8L509.8 515.1" stroke-width="0.50" stroke-opacity="0.00"/><path d="M529.5 515.7L526.6 515.0" stroke-width="0.50" stroke-opacity="0.00"/><path d="M546.5 515.7L543.4 514.9" stroke-width="0.50" stroke-opacity="0.00"/><path d="M563.4 515.6L560.1 514.9" stroke-width="0.50" stroke-opacity="0.00"/><path d="M580.3 515.5L576.8 514.8" stroke-width="0.50" stroke-opacity="0.00"/><path d="M597.2 515.5L593.4 514.7" stroke-width="0.50" stroke-opacity="0.00"/><path d="M614.0 515.4L610.1 514.7" stroke-width="0.50" stroke-opacity="0.00"/><path d="M630.8 515.3L626.6 514.6" stroke-width="0.50" stroke-opacity="0.00"/><path d="M-2.2 516.1L2.4 516.1" stroke-width="0.50" stroke-opacity="0.00"/><path d="M6.7 516.1L11.3 516.1M7.0 516.5L11.0 515.7" stroke-width="0.50" stroke-opacity="0.00"/><path d="M15.6 516.1L20.2 516.0" stroke-width="0.50" stroke-opacity="0.00"/><path d="M24.4 516.0L29.1 516.0M24.9 516.4L28.6 515.6" stroke-width="0.50" stroke-opacity="0.00"/><path d="M33.3 516.0L37.9 516.0" stroke-width="0.50" stroke-opacity="0.00"/><path d="M42.2 515.9L46.8 515.9M42.7 516.3L46.2 515.6" stroke-width="0.50" stroke-opacity="0.00"/><path d="M51.0 515.9L55.6 515.9" stroke-width="0.50" stroke-opacity="0.00"/><path d="M59.8 515.9L64.4 515.9M60.5 516.2L63.7 515.5" stroke-width="0.50" stroke-opacity="0.00"/><path d="M68.6 515.8L73.2 515.8" stroke-width="0.50" stroke-opacity="0.00"/><path d="M77.4 515.8L82.0 515.8M78.2 516.2L81.2 515.4" stroke-width="0.50" stroke-opacity="0.00"/><path d="M86.2 515.8L90.8 515.8" stroke-width="0.50" stroke-opacity="0.00"/><path d="M95.0 515.7L99.6 515.7M95.9 516.1L98.7 515.4" stroke-width="0.50" stroke-opacity="0.00"/><path d="M103.8 515.7L108.4 515.7" stroke-width="0.50" stroke-opacity="0.00"/><path d="M112.6 515.7L117.1 515.6M113.6 516.0L116.1 515.3" stroke-width="0.50" stroke-opacity="0.00"/><path d="M121.3 515.6L125.9 515.6" stroke-width="0.50" stroke-opacity="0.00"/><path d="M130.0 515.6L134.6 515.6M131.2 516.0L133.5 515.2" stroke-width="0.50" stroke-opacity="0.00"/><path d="M138.8 515.6L143.3 515.5" stroke-width="0.50" stroke-opacity="0.00"/><path d="M147.5 515.5L152.0 515.5M148.7 515.9L150.8 515.2" stroke-width="0.50" stroke-opacity="0.00"/><path d="M156.2 515.5L160.7 515.5" stroke-width="0.50" stroke-opacity="0.00"/><path d="M164.9 515.5L169.4 515.4M166.2 515.8L168.1 515.1" stroke-width="0.50" stroke-opacity="0.00"/><path d="M173.6 515.4L178.1 515.4" stroke-width="0.50" stroke-opacity="0.00"/><path d="M182.3 515.4L186.8 515.4M183.7 515.7L185.3 515.0" stroke-width="0.50" stroke-opacity="0.00"/><path d="M190.9 515.3L195.4 515.3" stroke-width="0.50" stroke-opacity="0.00"/><path d="M199.6 515.3L204.1 515.3M201.1 515.7L202.5 514.9" stroke-width="0.50" stroke-opacity="0.00"/><path d="M208.2 515.3L212.7 515.3" stroke-width="0.50" stroke-opacity="0.00"/><path d="M216.8 515.2L221.3 515.2M218.5 515.6L219.7 514.9" stroke-width="0.50" stroke-opacity="0.00"/><path d="M225.5 515.2L229.9 515.2" stroke-width="0.50" stroke-opacity="0.00"/><path d="M234.1 515.2L238.5 515.2M235.8 515.5L236.8 514.8" stroke-width="0.50" stroke-opacity="0.00"/><path d="M242.7 515.1L247.1 515.1" stroke-width="0.50" stroke-opacity="0.00"/><path d="M251.3 515.1L255.7 515.1M253.1 515.5L253.8 514.7" stroke-width="0.50" stroke-opacity="0.00"/><path d="M259.8 515.1L264.3 515.1" stroke-width="0.50" stroke-opacity="0.00"/><path d="M268.4 515.0L272.8 515.0M270.4 515.4L270.9 514.7" stroke-width="0.50" stroke-opacity="0.00"/><path d="M277.0 515.0L281.4 515.0" stroke-width="0.50" stroke-opacity="0.00"/><path d="M285.5 515.0L289.9 515.0M287.6 515.3L287.8 514.6" stroke-width="0.50" stroke-opacity="0.00"/><path d="M294.0 514.9L298.5 514.9" stroke-width="0.50" stroke-opacity="0.00"/><path d="M302.6 514.9L307.0 514.9M304.7 515.3L304.8 514.5" stroke-width="0.50" stroke-opacity="0.00"/><path d="M311.1 514.9L315.5 514.9" stroke-width="0.50" stroke-opacity="0.00"/><path d="M319.6 514.8L324.0 514.8M321.9 515.2L321.7 514.5" stroke-width="0.50" stroke-opacity="0.00"/><path d="M328.1 514.8L332.5 514.8" stroke-width="0.50" stroke-opacity="0.00"/><path d="M336.5 514.8L340.9 514.7M338.9 515.1L338.5 514.4" stroke-width="0.50" stroke-opacity="0.00"/><path d="M345.0 514.7L349.4 514.7" stroke-width="0.50" stroke-opacity="0.00"/><path d="M353.5 514.7L357.9 514.7M356.0 515.0L355.4 514.3" stroke-width="0.50" stroke-opacity="0.00"/><path d="M361.9 514.7L366.3 514.6" stroke-width="0.50" stroke-opacity="0.00"/><path d="M370.4 514.6L374.7 514.6M373.0 515.0L372.1 514.3" stroke-width="0.50" stroke-opacity="0.00"/><path d="M378.8 514.6L383.2 514.6" stroke-width="0.50" stroke-opacity="0.00"/><path d="M387.2 514.6L391.6 514.5M389.9 514.9L388.9 514.2" stroke-width="0.50" stroke-opacity="0.00"/><path d="M395.6 514.5L400.0 514.5" stroke-width="0.50" stroke-opacity="0.00"/><path d="M404.0 514.5L408.4 514.5M406.8 514.8L405.6 514.1" stroke-width="0.50" stroke-opacity="0.00"/><path d="M412.4 514.5L416.8 514.4" stroke-width="0.50" stroke-opacity="0.00"/><path d="M420.8 514.4L425.1 514.4M423.7 514.8L422.2 514.1" stroke-width="0.50" stroke-opacity="0.00"/><path d="M429.1 514.4L433.5 514.4" stroke-width="0.50" stroke-opacity="0.00"/><path d="M437.5 514.4L441.8 514.3M440.5 514.7L438.8 514.0" stroke-width="0.50" stroke-opacity="0.00"/><path d="M445.8 514.3L450.2 514.3" stroke-width="0.50" stroke-opacity="0.00"/><path d="M454.2 514.3L458.5 514.3M457.3 514.6L455.4 513.9" stroke-width="0.50" stroke-opacity="0.00"/><path d="M462.5 514.3L466.8 514.2" stroke-width="0.50" stroke-opacity="0.00"/><path d="M470.8 514.2L475.1 514.2M474.0 514.6L471.9 513.9" stroke-width="0.50" stroke-opacity="0.00"/><path d="M479.1 514.2L483.4 514.2" stroke-width="0.50" stroke-opacity="0.00"/><path d="M487.4 514.2L491.7 514.1M490.7 514.5L488.4 513.8" stroke-width="0.50" stroke-opacity="0.00"/><path d="M495.7 514.1L500.0 514.1" stroke-width="0.50" stroke-opacity="0.00"/><path d="M504.0 514.1L508.3 514.1M507.4 514.4L504.9 513.7" stroke-width="0.50" stroke-opacity="0.00"/><path d="M512.2 514.1L516.5 514.0" stroke-width="0.50" stroke-opacity="0.00"/><path d="M520.5 514.0L524.8 514.0M524.0 514.4L521.3 513.7" stroke-width="0.50" stroke-opacity="0.00"/><path d="M528.7 514.0L533.0 514.0" stroke-width="0.50" stroke-opacity="0.00"/><path d="M537.0 514.0L541.3 513.9M540.6 514.3L537.7 513.6" stroke-width="0.50" stroke-opacity="0.00"/><path d="M545.2 513.9L549.5 513.9" stroke-width="0.50" stroke-opacity="0.00"/><path d="M553.4 513.9L557.7 513.9M557.1 514.2L554.0 513.5" stroke-width="0.50" stroke-opacity="0.00"/><path d="M561.6 513.9L565.9 513.8" stroke-width="0.50" stroke-opacity="0.00"/><path d="M569.8 513.8L574.1 513.8M573.6 514.2L570.3 513.5" stroke-width="0.50" stroke-opacity="0.00"/><path d="M578.0 513.8L582.2 513.8" stroke-width="0.50" stroke-opacity="0.00"/><path d="M586.2 513.8L590.4 513.7M590.1 514.1L586.5 513.4" stroke-width="0.50" stroke-opacity="0.00"/><path d="M594.3 513.7L598.6 513.7" stroke-width="0.50" stroke-opacity="0.00"/><path d="M602.5 513.7L606.7 513.7M606.5 514.0L602.7 513.4" stroke-width="0.50" stroke-opacity="0.00"/><path d="M610.6 513.7L614.9 513.7" stroke-width="0.50" stroke-opacity="0.00"/><path d="M618.8 513.6L623.0 513.6M622.9 514.0L618.9 513.3" stroke-width="0.50" stroke-opacity="0.00"/><path d="M626.9 513.6L631.1 513.6" stroke-width="0.50" stroke-opacity="0.00"/><path d="M635.0 513.6L639.2 513.6M639.2 513.9L635.0 513.2" stroke-width="0.50" stroke-opacity="0.00"/></g>
</g>
<rect x="3" y="506" width="626" height="298" fill="url(#vig)"/>
<path d="M370 597 L481.5 596.5 Q484 597 483 600 L474 641 Q473 645 469 645 L322 645.5 Q317 645.5 320 642 Z" fill="#2a31a0" opacity="0.9" filter="url(#blur2)"/>
<path d="M210.6 305.7 L459.6 309.8 L452.7 551.7 L215 554 Z" fill="url(#boxg)" stroke="#eeb9a6" stroke-width="1.7"/>
<path d="M336 435 V398" stroke="#1530ff" stroke-width="1.6"/>
<path d="M336 389.5 L332.6 400.5 L339.4 400.5 Z" fill="#1530ff"/>
<path d="M333 435.2 L370 433.6" stroke="#18e030" stroke-width="2.6"/>
<path d="M377.5 433.3 L368.5 429.8 L368.8 437 Z" fill="#18e030"/>
<circle cx="333" cy="436.5" r="3.3" fill="#f01c28"/>
<rect x="369" y="390.5" width="9.5" height="10" fill="#f01c28"/>
<rect x="37" y="674" width="104" height="104" fill="#fff"/>
<rect x="147" y="674" width="104" height="104" fill="#fff"/>
<rect x="257" y="674" width="105" height="104" fill="#fff"/>
</svg><!--/VP-->

<!-- properties panel -->
<div class="a" style="left:638px;top:136px;width:143px;height:42px;background:#262a33;border-radius:5px 5px 0 0"></div>
<div class="a" style="left:638px;top:176px;width:631px;height:630px;background:#262a33"></div>
<div class="t bl" style="left:674px;top:148px;font-size:17px">Properties</div>
<!--PROPS-->
<svg style="left:0;top:0" width="690" height="230" fill="#1ba6e8">
  <path d="M668.6 187.8 L682.1 193.4 L668.6 199 L655.9 193.4 Z"/>
  <path d="M654.5 196.3 L667.6 202.3 V219 L654.5 213 Z M669.6 202.3 L682.7 196.3 V213 L669.6 219 Z"/>
</svg>
<div class="in" style="left:700px;top:183px;width:551px;height:40px;border-radius:5px"></div>
<div class="t" style="left:706px;top:196px;font-size:15.5px">Background</div>
<div class="in" style="left:646px;top:227px;width:528px;height:37px;border-radius:5px"></div>
<svg style="left:0;top:0" width="690" height="270" fill="none" stroke="#1ba6e8">
  <circle cx="669" cy="241.7" r="5.6" stroke-width="1.8"/>
  <path d="M664.8 246 L658.5 252.3" stroke-width="3" stroke-linecap="round"/>
</svg>
<div class="t" style="left:681px;top:239px;font-size:15.5px;color:#6f737c">Find Property by Name</div>
<div class="b" style="left:1176px;top:227px;width:38px;height:37px;border-radius:5px"></div>
<div class="b" style="left:1216px;top:227px;width:38px;height:37px;border-radius:5px;background:#1e6690"></div>
<svg style="left:0;top:0" width="1260" height="270">
  <path d="M1186 240 H1188.6 V253.8 H1199 V256 H1186 Z" fill="#fff"/>
  <path d="M1189.2 237 H1197.5 L1202 241.5 V253.3 H1189.2 Z" fill="none" stroke="#fff" stroke-width="1.1"/>
  <path d="M1197.5 237 V241.5 H1202" fill="none" stroke="#fff" stroke-width="1.1"/>
  <rect x="1228.5" y="239.5" width="13.5" height="16" fill="none" stroke="#2b2d33" stroke-width="1.3"/>
  <rect x="1231.5" y="238" width="7.5" height="3" rx="1" fill="#2b2d33"/>
  <circle cx="1235" cy="237" r="1.5" fill="none" stroke="#2b2d33" stroke-width="0.9"/>
</svg>

<!-- Transform -->
<svg style="left:0;top:0" width="670" height="560" fill="#1ba6e8">
  <path d="M649 279 H659 L654 286 Z"/>
  <path d="M651 431.5 L657.5 436.5 L651 441.5 Z"/>
  <path d="M651 466.5 L657.5 471.5 L651 476.5 Z"/>
  <path d="M651 501.5 L657.5 506.5 L651 511.5 Z"/>
  <path d="M649.5 537.5 H658.5 L654 544 Z"/>
</svg>
<div class="t bd bl" style="left:666px;top:274px;font-size:16.5px">Transform</div>
<div class="t" style="left:665px;top:315px;font-size:17.5px">Position</div>
<div class="t" style="left:665px;top:352px;font-size:17.5px">Rotation</div>
<div class="t" style="left:665px;top:389px;font-size:17.5px">Scale</div>

<div class="in" style="left:884px;top:307px;width:100px;height:32px"></div>
<div class="in" style="left:1006px;top:307px;width:101px;height:32px"></div>
<div class="in" style="left:1128px;top:307px;width:101px;height:32px"></div>
<div class="in" style="left:884px;top:344.5px;width:100px;height:32px"></div>
<div class="in" style="left:1006px;top:344.5px;width:101px;height:32px"></div>
<div class="in" style="left:1128px;top:344.5px;width:101px;height:32px"></div>
<div class="in" style="left:884px;top:382px;width:100px;height:32px"></div>
<div class="in" style="left:1006px;top:382px;width:101px;height:32px"></div>
<div class="in" style="left:1128px;top:382px;width:101px;height:32px"></div>

<div class="t bd" style="left:865px;top:316px;font-size:16px;color:#e8352a">X</div>
<div class="t bd" style="left:988.5px;top:316px;font-size:16px;color:#5cc41c">Y</div>
<div class="t bd" style="left:1111.5px;top:316px;font-size:16px;color:#1fa5e8">Z</div>
<div class="t bd" style="left:865px;top:353px;font-size:16px;color:#e8352a">X</div>
<div class="t bd" style="left:988.5px;top:353px;font-size:16px;color:#5cc41c">Y</div>
<div class="t bd" style="left:1111.5px;top:353px;font-size:16px;color:#1fa5e8">Z</div>
<div class="t bd" style="left:865px;top:391px;font-size:16px;color:#e8352a">X</div>
<div class="t bd" style="left:988.5px;top:391px;font-size:16px;color:#5cc41c">Y</div>
<div class="t bd" style="left:1111.5px;top:391px;font-size:16px;color:#1fa5e8">Z</div>

<div class="t" style="left:890px;top:315px;font-size:15px">50</div>
<div class="t" style="left:1013px;top:315px;font-size:15px">0</div>
<div class="t" style="left:1135px;top:315px;font-size:15px">0</div>
<div class="t" style="left:890px;top:352px;font-size:15px">0</div>
<div class="t" style="left:1013px;top:352px;font-size:15px">90</div>
<div class="t" style="left:1135px;top:352px;font-size:15px">0</div>
<div class="t" style="left:890px;top:390px;font-size:15px">2.75</div>
<div class="t" style="left:1013px;top:390px;font-size:15px">2.75</div>
<div class="t" style="left:1135px;top:390px;font-size:15px">2.75</div>

<svg style="left:0;top:0" width="1260" height="700" fill="none" stroke="#1ba6e8" stroke-width="2.2">
  <g id="rs"><path d="M1242.9 317.8 A6.3 6.3 0 1 1 1241.6 327.8"/><path d="M1237.8 316.3 L1239.2 323.6 L1244.6 320.3 Z" fill="#1ba6e8" stroke="none"/></g>
  <use href="#rs" y="37.5"/><use href="#rs" y="75"/><use href="#rs" y="282.5"/><use href="#rs" y="344.5"/>
</svg>

<!-- separators -->
<div class="a" style="left:640px;top:417px;width:626px;height:4px;background:#1c1f26"></div>
<div class="a" style="left:640px;top:452px;width:626px;height:4px;background:#1c1f26"></div>
<div class="a" style="left:640px;top:487px;width:626px;height:4px;background:#1c1f26"></div>
<div class="a" style="left:640px;top:522px;width:626px;height:4px;background:#1c1f26"></div>
<div class="a" style="left:640px;top:686px;width:626px;height:3px;background:#1c1f26"></div>

<div class="t bd bl" style="left:666px;top:428px;font-size:16.5px">Scene</div>
<div class="t bd bl" style="left:666px;top:463px;font-size:16.5px">Gameplay</div>
<div class="t bd bl" style="left:666px;top:498px;font-size:16.5px">Rendering</div>
<div class="t bl" style="left:1043px;top:498px;font-size:17px">Advanced Settings</div>
<div class="in" style="left:1198px;top:493px;width:30px;height:25.5px"></div>
<svg style="left:0;top:0" width="1260" height="700" fill="none" stroke="#e07f1c" stroke-width="2.5">
  <path d="M1207.5 506 L1211 509.5 L1218.5 502"/>
</svg>
<div class="t bd bl" style="left:666px;top:533px;font-size:16.5px">Base Material</div>

<div class="t" style="left:665px;top:574px;font-size:17.5px">Material</div>
<div class="a" style="left:864px;top:566px;width:80px;height:80px;border:2px solid #1ba6e8;border-radius:3px;background:#232428"></div>
<svg style="left:0;top:0" width="950" height="650">
  <defs><radialGradient id="sph" cx="0.42" cy="0.38" r="0.65"><stop offset="0" stop-color="#f8f8f8"/><stop offset="0.75" stop-color="#ececec"/><stop offset="1" stop-color="#d0d0d0"/></radialGradient></defs>
  <path d="M903.5 572.8 L933.2 588.3 L932.2 623.6 L903.5 640.8 L875.1 623.6 L873.8 587.8 Z" fill="#f0efef"/>
  <path d="M880 592 Q904 582 928.5 591.5 Q922 618 904 632.5 Q884 616 880 592 Z" fill="#dfdfe0"/>
  <path d="M933.2 588.3 L932.2 623.6 L903.5 640.8 L904.5 632 Q922 618 928.5 591.5 Z" fill="#d5d6d8"/>
  <circle cx="903.1" cy="605.5" r="16.2" fill="url(#sph)" stroke="#b8b8b8" stroke-width="0.7"/>
</svg>
<div class="in" style="left:949px;top:568px;width:283px;height:32.5px"></div>
<div class="t" style="left:955px;top:577px;font-size:15.5px">Plastic Matte</div>
<div class="b" style="left:949px;top:606px;width:37px;height:36.5px"></div>
<svg style="left:0;top:0" width="990" height="650">
  <path d="M965.8 614 A7.6 7.6 0 0 1 973.4 621.6 Q973.4 625.5 965.8 633.2 Q958.2 625.5 958.2 621.6 A7.6 7.6 0 0 1 965.8 614 Z" fill="#fff"/>
  <circle cx="965.8" cy="620.6" r="2.3" fill="#1aa2e6"/>
  <circle cx="975.2" cy="626.2" r="5.6" fill="#1aa2e6"/>
  <circle cx="975.2" cy="626.2" r="3.4" fill="none" stroke="#fff" stroke-width="1.4"/>
  <path d="M972.8 628.8 L969.6 632.4" stroke="#fff" stroke-width="1.6"/>
</svg>
<div class="b" style="left:989px;top:606px;width:184px;height:36.5px"></div>
<div class="t bd" style="left:998px;top:616px;font-size:16.4px;color:#fff">New Custom Material</div>
<div class="t" style="left:665px;top:659px;font-size:17.5px">Color Override</div>
<div class="a" style="left:864px;top:651px;width:368px;height:32px;background:#005a9e"></div>

<div class="b" style="left:843px;top:761px;width:212px;height:38px;border-radius:5px"></div>
<svg style="left:0;top:0" width="880" height="800" fill="#fff">
  <rect x="852" y="777.8" width="20" height="4.4"/><rect x="859.8" y="770" width="4.4" height="20"/>
</svg>
<div class="t bd" style="left:880px;top:772.5px;font-size:16px;color:#fff">Add Custom Property</div>
<!--/PROPS-->


<!-- hierarchy panel -->
<div class="a" style="left:1275px;top:136px;width:136px;height:42px;background:#262a33;border-radius:5px 5px 0 0"></div>
<div class="a" style="left:1275px;top:176px;width:645px;height:846px;background:#262a33"></div>
<div class="t bl" style="left:1312px;top:148px;font-size:17px">Hierarchy</div>
<!--HIER-->
<div class="t bd" style="left:1288px;top:195px;font-size:16.5px;color:#e8841a">Main</div>
<div class="b" style="left:1872px;top:183px;width:38px;height:38px;border-radius:5px"></div>
<svg style="left:0;top:0" width="1920" height="480">
  <rect x="1881" y="200.4" width="19.6" height="11.4" fill="#fff"/>
  <rect x="1881" y="192.2" width="19.6" height="6.4" fill="#fff"/>
  <path d="M1884.5 192 L1887 198.8 M1889.5 192 L1892 198.8 M1894.5 192 L1897 198.8" stroke="#1aa2e6" stroke-width="1.6"/>
  <rect x="1881" y="195" width="19.6" height="1" fill="#1aa2e6"/>
  <path d="M1896.2 202.2 L1891.5 203.8 L1888.6 208 L1890.5 209.8 L1894.6 206.8 Z" fill="#1aa2e6"/>
  <path d="M1888.3 206 L1886.5 207.2 M1890.8 210 L1889.8 211.5 M1888.8 209.3 L1886.8 211.2" stroke="#1aa2e6" stroke-width="1.1"/>
</svg>
<div class="in" style="left:1285px;top:226px;width:490px;height:37px;border-radius:5px"></div>
<svg style="left:0;top:0" width="1920" height="270" fill="none" stroke="#1ba6e8">
  <circle cx="1307.5" cy="240.5" r="5.6" stroke-width="1.8"/>
  <path d="M1303.3 244.8 L1297 251.1" stroke-width="3" stroke-linecap="round"/>
</svg>
<div class="t" style="left:1320px;top:236px;font-size:15px;color:#6f737c">Search</div>
<div class="in" style="left:1787px;top:226px;width:38px;height:37px;border-radius:5px"></div>
<svg style="left:0;top:0" width="1920" height="270">
  <path d="M1805 233.8 L1813.5 237.5 L1805 241 L1796.5 237.5 Z" fill="#e8841a"/>
  <path d="M1796 239 L1804 242.5 V254 L1796 250.5 Z M1806 242.5 L1814 239 V246 A5 5 0 0 0 1810 251 L1806 253.5 Z" fill="#e8841a"/>
  <circle cx="1813.5" cy="251.5" r="4.3" fill="#e8841a"/>
</svg>
<div class="b" style="left:1830px;top:226px;width:37px;height:37px;border-radius:5px"></div>
<svg style="left:0;top:0" width="1920" height="270" fill="#fff">
  <path d="M1839.5 234 H1857.5 L1850 244 V251 L1847 253.5 V244 Z"/>
  <path d="M1847 245.5 H1850" stroke="#1aa2e6" stroke-width="1.2"/>
</svg>
<div class="b" style="left:1872px;top:226px;width:38px;height:37px;border-radius:5px"></div>
<svg style="left:0;top:0" width="1920" height="270" fill="none" stroke="#fff" stroke-width="2.2">
  <path d="M1882 242 L1891 234 L1900 242 M1891 234.5 V248"/>
  <rect x="1882" y="251" width="18" height="2.8" fill="#fff" stroke="none"/>
</svg>

<!-- rows -->
<svg style="left:0;top:0" width="1920" height="480">
  <!-- misc -->
  <path d="M1285.5 287.5 L1291.5 292.2 L1285.5 297 Z" fill="none" stroke="#9a9a9c" stroke-width="1.5"/>
  <path d="M1300.5 300 V287.5 H1306 L1307.5 289 H1315 V291.5" fill="none" stroke="#fff" stroke-width="1.3"/>
  <path d="M1302.5 292 H1317.5 L1315.5 300.3 H1300.3 Z" fill="#fff"/>
  <!-- icon gen -->
  <path d="M1284 328.8 L1293 318.8 V328.8 Z" fill="#a0a0a2"/>
  <path d="M1301.5 328.5 V317.5 H1306.5 L1308 319 H1315 V321" fill="none" stroke="#fff" stroke-width="1.3"/>
  <path d="M1303.5 321.5 H1316.5 L1315 328.5 H1301.3 Z" fill="#fff"/>
  <path d="M1313.2 324.5 A3.6 3.6 0 0 1 1316.8 328.1 Q1316.8 330 1313.2 334 Q1309.6 330 1309.6 328.1 A3.6 3.6 0 0 1 1313.2 324.5 Z" fill="#fff" stroke="#262a33" stroke-width="1"/>
  <circle cx="1313.2" cy="328.1" r="1.2" fill="#262a33"/>
  <!-- ui container -->
  <path d="M1297.5 352.3 L1303.6 357 L1297.5 361.5 Z" fill="none" stroke="#9a9a9c" stroke-width="1.5"/>
  <rect x="1314" y="352" width="15.2" height="13" fill="none" stroke="#fff" stroke-width="2"/>
  <!-- generator -->
  <path d="M1296 393.7 L1306 384.1 V393.7 Z" fill="#a0a0a2"/>
  <g id="fc">
  <path d="M1313.3 394 V382.5 H1318 L1319.5 384 H1327 V386" fill="none" stroke="#fff" stroke-width="1.3"/>
  <path d="M1315.5 386.5 H1329 L1327.5 393.5 H1313.2 Z" fill="#fff"/>
  <path d="M1326.5 389 L1331.2 391.3 L1326.5 393.6 L1321.8 391.3 Z" fill="#fff" stroke="#262a33" stroke-width="1"/>
  <path d="M1321.5 392.3 L1326 394.5 V399.5 L1321.5 397.3 Z M1327 394.5 L1331.5 392.3 V397.3 L1327 399.5 Z" fill="#fff"/>
  <path d="M1321 391.8 L1326.5 394.3 L1332 391.8" fill="none" stroke="#262a33" stroke-width="0.9"/>
  </g>
  <!-- components -->
  <path d="M1309 425.7 L1318.1 417.2 V425.7 Z" fill="#a0a0a2"/>
  <use href="#fc" x="12.2" y="32.7"/>
  <!-- background cube -->
  <path d="M1346.5 447 L1354 450.8 L1346.5 454.5 L1339 450.8 Z" fill="#fff"/>
  <path d="M1338.8 452.5 L1345.6 456 V464 L1338.8 460.5 Z M1347.4 456 L1354.2 452.5 V460.5 L1347.4 464 Z" fill="#fff"/>
</svg>
<div class="t" style="left:1328px;top:285px;font-size:17px">Misc</div>
<div class="t" style="left:1328px;top:318px;font-size:17px">Icon Generator</div>
<div class="t" style="left:1340.5px;top:350px;font-size:17px">UI Container (client)</div>
<div class="t" style="left:1340.5px;top:383px;font-size:17px">Generator (client)</div>
<div class="t" style="left:1353.5px;top:415px;font-size:17px">Components (client)</div>
<div class="a" style="left:1283px;top:439px;width:629px;height:33px;border:2px solid #1aa2e6"></div>
<div class="t" style="left:1365.5px;top:448px;font-size:17px">Background (client)</div>
<svg style="left:0;top:0" width="1920" height="480">
  <g id="eye">
   <path d="M1861.2 293.3 Q1869.5 284.9 1877.8 293.3 Q1869.5 301.7 1861.2 293.3 Z" fill="none" stroke="#fff" stroke-width="2.2"/>
   <circle cx="1869.5" cy="293.3" r="2.6" fill="#fff"/>
   <rect x="1888.2" y="292.3" width="12.5" height="9.5" rx="2" fill="#1b1e26"/>
   <path d="M1890.8 292.8 V290 A3.7 3.7 0 0 1 1898.2 290 V292.8" fill="none" stroke="#1b1e26" stroke-width="2.2"/>
   <path d="M1894.45 295 V299" stroke="#262a33" stroke-width="1.1"/>
  </g>
  <use href="#eye" y="32.6"/><use href="#eye" y="65"/><use href="#eye" y="97.7"/><use href="#eye" y="130"/><use href="#eye" y="162.5"/>
</svg>
<!--/HIER-->


<!-- bottom panel -->
<div class="a" style="left:183px;top:813px;width:164px;height:42px;background:#262a33;border-radius:5px 5px 0 0"></div>
<div class="a" style="left:0;top:852px;width:1269px;height:170px;background:#262a33"></div>
<div class="t bl" style="left:219px;top:824px;font-size:17px">Core Content</div>
<!--BOTTOM-->
<svg style="left:0;top:0" width="500" height="860">
  <!-- project content icon -->
  <path d="M6.8 842 V821.8 H13.2 L15.2 823.8 H25.8 V827" fill="none" stroke="#4e5262" stroke-width="1.6"/>
  <path d="M9.2 827.5 H29 L26.6 842.8 H6 Z" fill="#4e5262"/>
  <g transform="translate(13.2 828.2) scale(0.85) translate(-1768.8 -49.9)" fill="#1c1f26" stroke="#1c1f26" stroke-width="2.4" stroke-linejoin="round"><path d="M1786.8 50.4 Q1787.3 52 1786.1 55.4 Q1785.4 57 1784 58.2 L1778.4 62.8 Q1777.3 63.6 1776.2 62.5 L1773.2 59.5 Q1772.5 58.6 1773.3 57.7 L1778.8 52.2 Q1780 51 1782 50.6 Q1785.5 49.9 1786.8 50.4 Z"/>
  <path d="M1768.8 55.6 Q1772 53.6 1776 53.2 L1772.6 57.6 Z"/>
  <path d="M1779 63.8 L1783.6 60.3 Q1783.2 64.6 1780.5 68 Z"/>
  <path d="M1769.9 62.4 L1771.9 61 L1775.2 64.3 Q1775.4 65.9 1773.7 66.3 Z"/></g>
  <g transform="translate(13.2 828.2) scale(0.85) translate(-1768.8 -49.9)" fill="#4e5262"><path d="M1786.8 50.4 Q1787.3 52 1786.1 55.4 Q1785.4 57 1784 58.2 L1778.4 62.8 Q1777.3 63.6 1776.2 62.5 L1773.2 59.5 Q1772.5 58.6 1773.3 57.7 L1778.8 52.2 Q1780 51 1782 50.6 Q1785.5 49.9 1786.8 50.4 Z"/>
  <path d="M1768.8 55.6 Q1772 53.6 1776 53.2 L1772.6 57.6 Z"/>
  <path d="M1779 63.8 L1783.6 60.3 Q1783.2 64.6 1780.5 68 Z"/>
  <path d="M1769.9 62.4 L1771.9 61 L1775.2 64.3 Q1775.4 65.9 1773.7 66.3 Z"/><circle cx="1781.2" cy="55" r="2" fill="#1c1f26"/></g>
  <path d="M165 828 L175 838 M175 828 L165 838" stroke="#4e5262" stroke-width="1.8"/>
  <!-- core icon -->
  <path d="M200.2 820.7 L211.2 827 V839 L200.2 845 L189.2 839 V827 Z" fill="#1ba6e8"/>
  <circle cx="200.2" cy="832.3" r="7.4" fill="#262a33"/>
  <path d="M193.6 835 Q195.5 839.5 200.2 841.8 Q204.9 839.5 206.8 835 Z" fill="#262a33"/>
  <path d="M200.2 840 V845.5 M188.8 826.6 L193.8 829.3 M211.6 826.6 L206.6 829.3" stroke="#262a33" stroke-width="1.3"/>
  <circle cx="200.2" cy="832.3" r="5.7" fill="#1ba6e8"/>
  <path d="M327.5 827.5 L337.5 837.5 M337.5 827.5 L327.5 837.5" stroke="#1ba6e8" stroke-width="2"/>
  <!-- event log icon -->
  <rect x="356.5" y="823.5" width="15.5" height="20" fill="none" stroke="#4e5262" stroke-width="1.2"/>
  <rect x="359.5" y="822" width="9.5" height="3" rx="1" fill="#4e5262"/>
  <circle cx="364.2" cy="821.5" r="1.4" fill="none" stroke="#4e5262" stroke-width="1"/>
  <path d="M359 830.2 H369.5 M359 834.4 H369.5 M359 838.6 H369.5" stroke="#4e5262" stroke-width="1.2"/>
  <path d="M466 828 L476.5 838 M476.5 828 L466 838" stroke="#4e5262" stroke-width="1.8"/>
</svg>
<div class="t" style="left:36px;top:824px;font-size:17px;color:#4f5364">Project Content</div>
<div class="t" style="left:383.5px;top:824px;font-size:17px;color:#4f5364">Event Log</div>

<div class="t bd bl" style="left:9px;top:869px;font-size:16.7px">COMMUNITY CONTENT</div>
<div class="t" style="left:55px;top:905px;font-size:17.3px">Imported Content</div>
<div class="t bd bl" style="left:9px;top:942px;font-size:16px">ART OBJECTS</div>
<div class="t" style="left:55px;top:978px;font-size:17.3px">3D Objects</div>
<div class="t" style="left:55px;top:1016px;font-size:17.3px">3D Text</div>
<svg style="left:0;top:0" width="260" height="1022" fill="#1ba6e8">
  <path d="M21 911 H25 L27 915 H35 L37 911 H41.3 V922 H21 Z"/>
  <path d="M29.8 903.5 H32.4 V911 H35.5 L31.1 915.5 L26.7 911 H29.8 Z"/>
  <path d="M31 974 L42 979.2 L31 984.4 L20 979.2 Z"/>
  <path d="M19.6 981.3 L30 986.3 V998 L19.6 993 Z M32 986.3 L42.2 981.3 V993 L32 998 Z"/>
  <rect x="228" y="985.5" width="13" height="2.4"/><rect x="233.3" y="980.5" width="2.4" height="12.5"/>
  <path d="M23 1022 Q23 1016 27 1014 Q30 1012.5 32 1014 L38 1020 V1022 Z"/>
  <rect x="233.3" y="1017" width="2.4" height="5"/>
</svg>
<div class="a" style="left:0;top:1012px;width:256px;height:10px;background:linear-gradient(to bottom,rgba(20,22,28,0) 0%,rgba(20,22,28,0.35) 60%,rgba(20,22,28,0.8) 100%)"></div>
<div class="a" style="left:256px;top:861px;width:5px;height:161px;background:#1b1e26"></div>
<div class="a" style="left:256px;top:861px;width:5px;height:66px;background:#1ba6e8"></div>

<div class="in" style="left:271px;top:858px;width:499px;height:37px;border-radius:5px"></div>
<svg style="left:0;top:0" width="780" height="900" fill="none" stroke="#1ba6e8">
  <circle cx="293.5" cy="872.5" r="5.6" stroke-width="1.8"/>
  <path d="M289.3 876.8 L283 883.1" stroke-width="3" stroke-linecap="round"/>
  <path d="M746 870 L758 882 M758 870 L746 882" stroke-width="2.4"/>
</svg>
<div class="t" style="left:305px;top:869px;font-size:15.4px">plane 1m one sided</div>

<div class="b" style="left:1204px;top:858px;width:56px;height:38px;border-radius:5px"></div>
<svg style="left:0;top:0" width="1270" height="1022" fill="#fff">
  <path d="M1213.5 867 H1231 L1223.8 876.5 V883 L1221 885.5 V876.5 Z"/>
  <path d="M1221 877.5 H1224" stroke="#1aa2e6" stroke-width="1.1"/>
  <path d="M1242 873.5 H1252 L1247 878.5 Z"/>
</svg>
<div class="a" style="left:1252px;top:903px;width:5px;height:76px;background:#1b1e26"></div>
<div class="a" style="left:1252px;top:903px;width:5px;height:61px;background:#1ba6e8"></div>

<div class="a" style="left:275px;top:906px;width:89px;height:75px;background:#29282f"></div>
<svg style="left:0;top:0" width="370" height="990">
  <path d="M319.5 927 L362 951.5 L319.5 976 L277 951.5 Z" fill="#a9b0e2"/>
  <g stroke="#eef0ff" stroke-width="0.8" fill="none" opacity="0.85">
   <path d="M298.25 939.25 L340.75 963.75 M309 933 L351.5 957.5 M288 945 L330.5 969.5 M330 933 L287.5 957.5 M341 939.25 L298.5 963.75 M351 945 L308.5 969.5"/>
  </g>
</svg>
<div class="t" style="left:271px;top:997px;font-size:15px">1 Items</div>

<div class="a" style="left:1102px;top:1002.5px;width:105px;height:4.5px;background:#1b1e26"></div>
<div class="a" style="left:1117.5px;top:997px;width:15px;height:15px;border-radius:50%;background:#1ba6e8"></div>
<div class="b" style="left:1222px;top:986px;width:38px;height:40px;border-radius:5px"></div>
<svg style="left:0;top:0" width="1270" height="1022" fill="#fff">
  <rect x="1231" y="995" width="5" height="5"/><rect x="1238" y="995" width="13" height="5"/>
  <rect x="1231" y="1002" width="5" height="5"/><rect x="1238" y="1002" width="13" height="5"/>
  <rect x="1231" y="1009" width="5" height="5"/><rect x="1238" y="1009" width="13" height="5"/>
</svg>
<!--/BOTTOM-->


<!--TABICONS-->
<svg style="left:0;top:0" width="1420" height="180">
  <path d="M8.5 158.8 Q5.8 159 6 155.5 Q6.3 149 8.8 145.8 Q10.8 143.8 13.5 145.3 Q15 146.2 16.8 146.2 Q18.5 146.2 20 145.3 Q22.8 143.8 24.8 145.8 Q26.6 148.5 27.2 153.5 L22 156 Q16.5 155.2 12.6 156.6 Q10.6 158.6 8.5 158.8 Z" fill="#1ba6e8"/>
  <path d="M14.8 166.5 L23.2 158.2" stroke="#262a33" stroke-width="4.8"/>
  <path d="M14.8 166.5 L23.2 158.2" stroke="#1ba6e8" stroke-width="2.6" stroke-linecap="round"/>
  <path d="M19.8 153 Q22.5 151 25 152.3 L29.2 157.5 L27.3 160 L24.3 157 L22.5 158.8 L20.8 157 Z" fill="#262a33" stroke="#262a33" stroke-width="1.6"/>
  <path d="M19.8 153 Q22.5 151 25 152.3 L29.2 157.5 L27.3 160 L24.3 157 L22.5 158.8 L20.8 157 Z" fill="#1ba6e8"/>
  <path d="M230.5 151 L240.5 161 M240.5 151 L230.5 161" stroke="#1ba6e8" stroke-width="2"/>
  <path d="M762.5 150.5 L772.5 160.5 M772.5 150.5 L762.5 160.5" stroke="#1ba6e8" stroke-width="2"/>
  <path d="M1392 150.8 L1402.5 160.8 M1402.5 150.8 L1392 160.8" stroke="#1ba6e8" stroke-width="2"/>
  <g fill="#1ba6e8">
   <rect x="1281" y="144.3" width="4" height="4.4"/><rect x="1287" y="144.3" width="17" height="4.4"/>
   <rect x="1287" y="150.3" width="4" height="4.2"/><rect x="1293" y="150.3" width="11" height="4.2"/>
   <rect x="1287" y="156.1" width="4" height="4.3"/><rect x="1293" y="156.1" width="11" height="4.3"/>
   <rect x="1281" y="162.1" width="4" height="4.4"/><rect x="1287" y="162.1" width="17" height="4.4"/>
  </g>
  <g transform="translate(654.4 154.4)">
   <path fill="#1ba6e8" fill-rule="evenodd" d="M-1.6 -9.6 H1.6 L2.2 -7.2 L4.4 -6.2 L6.6 -7.6 L8.8 -5.4 L7.4 -3.2 L8.3 -1 L10.2 -0.4 V2.8 L8.3 3.4 L7.4 5.6 L8.8 7.8 L6.6 10 L4.4 8.6 L2.2 9.6 L1.6 11.6 H-1.6 L-2.2 9.6 L-4.4 8.6 L-6.6 10 L-8.8 7.8 L-7.4 5.6 L-8.3 3.4 L-10.2 2.8 V-0.4 L-8.3 -1 L-7.4 -3.2 L-8.8 -5.4 L-6.6 -7.6 L-4.4 -6.2 L-2.2 -7.2 Z M0 -2.2 A3.3 3.3 0 1 0 0.01 -2.2 Z" transform="translate(0 -1)"/>
  </g>
  <path d="M654.5 166.3 L662 158.8" stroke="#262a33" stroke-width="5.5"/>
  <path d="M654.5 166.3 L662 158.8" stroke="#1ba6e8" stroke-width="3" stroke-linecap="round"/>
  <path d="M660.5 155 Q662.5 152.2 665 152.4 L663.2 155.4 L664.8 157 L667.6 155.2 Q667.6 158.3 664.8 160 Q662 161 660 159.5 Z" fill="#1ba6e8" stroke="#262a33" stroke-width="1.2"/>
</svg>
<!--/TABICONS-->
</body></html>
